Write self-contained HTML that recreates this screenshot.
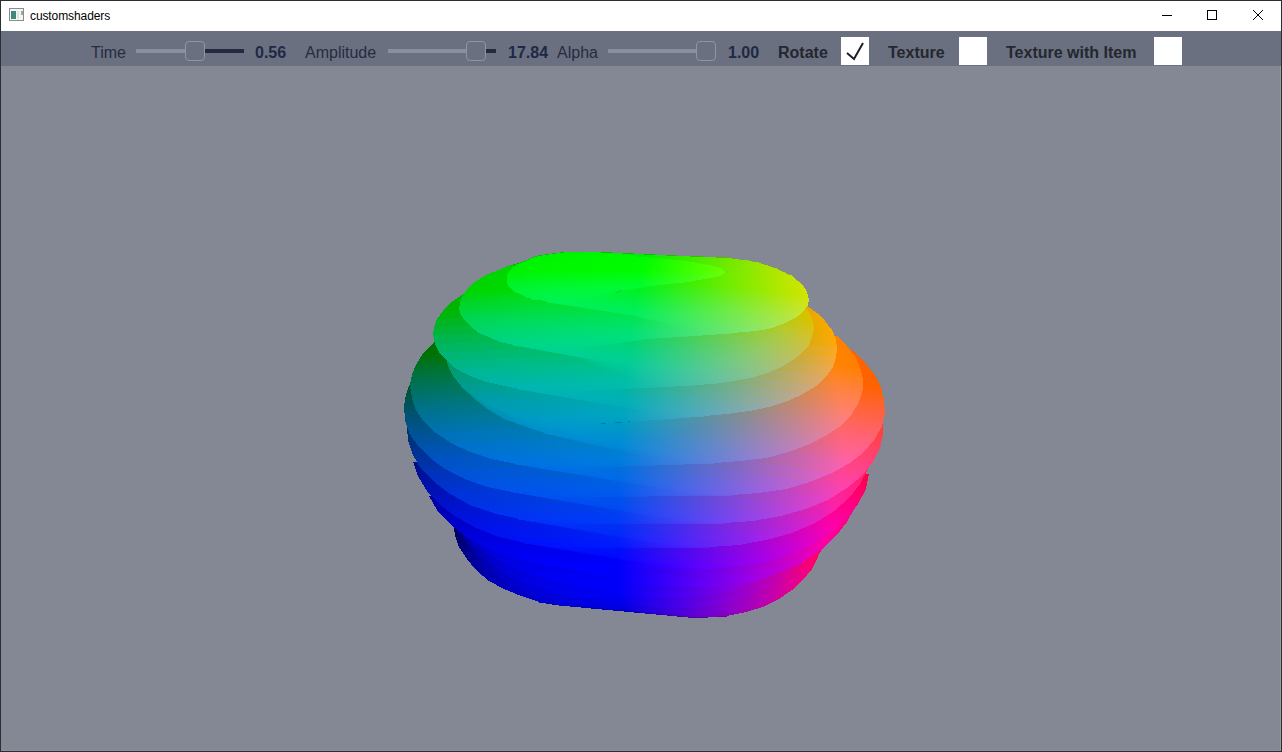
<!DOCTYPE html>
<html><head><meta charset="utf-8">
<style>
html,body{margin:0;padding:0;}
body{width:1282px;height:752px;position:relative;overflow:hidden;background:#2b2e33;font-family:"Liberation Sans",sans-serif;}
.abs{position:absolute;}
#title{left:1px;top:1px;width:1280px;height:30px;background:#fff;}
#content{left:1px;top:31px;width:1280px;height:720px;background:#848895;overflow:hidden;}
#toolbar{left:0;top:0;width:1280px;height:35px;background:#6b7080;}
.lbl{position:absolute;top:0;line-height:1;font-size:16px;color:#262c40;white-space:nowrap;}
.b{font-weight:bold;color:#24272f;}
.v{color:#1f2946;}
.track{position:absolute;height:4px;background:#8a8f9d;}
.fill{position:absolute;height:4px;background:#242a3e;}
.handle{position:absolute;width:18px;height:18px;border:1px solid #8f95a3;border-radius:4px;background:#6b7080;box-sizing:content-box;}
.cb{position:absolute;width:28px;height:28px;background:#fff;}
</style></head>
<body>
<div id="title" class="abs">
  <svg class="abs" style="left:8px;top:7px" width="15" height="13" viewBox="0 0 15 13">
    <rect x="0.5" y="0.5" width="14" height="12" fill="#f4f6f6" stroke="#8c8c8c"/>
    <rect x="2" y="3" width="5" height="8" fill="#3e8a76"/>
    <rect x="2" y="3" width="5" height="2" fill="#4d7d8a"/>
    <rect x="8" y="3" width="2" height="8" fill="#e2e2e2"/>
    <rect x="12" y="3" width="2" height="4" fill="#9aa6a4"/>
  </svg>
  <div class="abs" style="left:29px;top:8px;font-size:12px;letter-spacing:-0.1px;color:#000;white-space:nowrap">customshaders</div>
  <div class="abs" style="left:1161px;top:14px;width:10px;height:1px;background:#000"></div>
  <div class="abs" style="left:1206px;top:9px;width:8px;height:8px;border:1px solid #000"></div>
  <svg class="abs" style="left:1251px;top:8px" width="12" height="12" viewBox="0 0 12 12">
    <path d="M1 1L11 11M11 1L1 11" stroke="#000" stroke-width="1"/>
  </svg>
</div>
<div id="content" class="abs">
  <div id="edgeR" class="abs" style="left:1279px;top:35px;width:1px;height:685px;background:#999ba2"></div>
  <div class="abs" style="left:0;top:719px;width:1280px;height:1px;background:#8d909a"></div>
  <div id="toolbar" class="abs">
    <div class="lbl" style="left:90px;top:14px">Time</div>
    <div class="track" style="left:135px;top:18px;width:50px"></div>
    <div class="fill" style="left:204px;top:18px;width:39px"></div>
    <div class="handle" style="left:184px;top:10px"></div>
    <div class="lbl b v" style="left:254px;top:14px">0.56</div>

    <div class="lbl" style="left:304px;top:14px">Amplitude</div>
    <div class="track" style="left:387px;top:18px;width:80px"></div>
    <div class="fill" style="left:485px;top:18px;width:10px"></div>
    <div class="handle" style="left:465px;top:10px"></div>
    <div class="lbl b v" style="left:507px;top:14px">17.84</div>

    <div class="lbl" style="left:556px;top:14px">Alpha</div>
    <div class="track" style="left:607px;top:18px;width:90px"></div>
    <div class="handle" style="left:695px;top:10px"></div>
    <div class="lbl b v" style="left:727px;top:14px">1.00</div>

    <div class="lbl b" style="left:777px;top:14px">Rotate</div>
    <div class="cb" style="left:840px;top:6px">
      <svg width="28" height="28" viewBox="0 0 28 28" style="position:absolute;left:0;top:0"><path d="M6 16L13 22L22 6" fill="none" stroke="#1b1f2c" stroke-width="2"/></svg>
    </div>
    <div class="lbl b" style="left:887px;top:14px">Texture</div>
    <div class="cb" style="left:958px;top:6px"></div>
    <div class="lbl b" style="left:1005px;top:14px">Texture with Item</div>
    <div class="cb" style="left:1153px;top:6px"></div>
  </div>
</div>
<!-- BLOB -->
<div style="position:absolute;left:370px;top:230px;width:540px;height:420px;isolation:isolate">
<svg width="540" height="420" style="position:absolute;left:0;top:0" shape-rendering="crispEdges"><defs>
<linearGradient id="R" gradientUnits="userSpaceOnUse"><stop offset="0" stop-color="#000"/><stop offset="1" stop-color="#f00"/></linearGradient>
<linearGradient id="G" gradientUnits="userSpaceOnUse"><stop offset="0" stop-color="#000"/><stop offset="1" stop-color="#0f0"/></linearGradient>
<linearGradient id="B" gradientUnits="userSpaceOnUse"><stop offset="0" stop-color="#000"/><stop offset="1" stop-color="#00f"/></linearGradient>
<linearGradient id="0" href="#R" x1="265" y1="332" x2="437" y2="324"/><linearGradient id="1" href="#B" x1="396" y1="278" x2="377" y2="412"/><linearGradient id="2" href="#R" x1="262" y1="342" x2="439" y2="336"/><linearGradient id="3" href="#B" x1="390" y1="273" x2="369" y2="417"/><linearGradient id="4" href="#R" x1="260" y1="349" x2="440" y2="348"/><linearGradient id="5" href="#B" x1="380" y1="271" x2="360" y2="416"/><linearGradient id="6" href="#R" x1="258" y1="359" x2="442" y2="357"/><linearGradient id="7" href="#B" x1="370" y1="259" x2="347" y2="422"/><linearGradient id="8" href="#R" x1="257" y1="359" x2="443" y2="376"/><linearGradient id="9" href="#B" x1="2463" y1="563" x2="-687" y2="272"/><linearGradient id="a" href="#R" x1="256" y1="367" x2="444" y2="385"/><linearGradient id="b" href="#B" x1="2583" y1="583" x2="-526" y2="295"/><linearGradient id="c" href="#R" x1="255" y1="374" x2="444" y2="390"/><linearGradient id="d" href="#B" x1="2698" y1="590" x2="-421" y2="314"/><linearGradient id="e" href="#R" x1="255" y1="378" x2="445" y2="395"/><linearGradient id="f" href="#B" x1="2837" y1="613" x2="-374" y2="321"/><linearGradient id="g" href="#R" x1="254" y1="380" x2="445" y2="398"/><linearGradient id="h" href="#B" x1="2993" y1="630" x2="-381" y2="322"/><linearGradient id="i" href="#R" x1="254" y1="379" x2="443" y2="394"/><linearGradient id="j" href="#B" x1="-2597" y1="152" x2="756" y2="419"/><linearGradient id="k" href="#R" x1="254" y1="377" x2="440" y2="393"/><linearGradient id="l" href="#B" x1="-2365" y1="152" x2="743" y2="419"/><linearGradient id="m" href="#R" x1="254" y1="372" x2="437" y2="388"/><linearGradient id="n" href="#B" x1="-2153" y1="156" x2="778" y2="419"/><linearGradient id="o" href="#B" x1="-1999" y1="174" x2="870" y2="418"/><linearGradient id="p" href="#B" x1="168" y1="227" x2="164" y2="400"/><linearGradient id="q" href="#B" x1="155" y1="240" x2="151" y2="394"/><linearGradient id="r" href="#B" x1="145" y1="243" x2="142" y2="391"/><linearGradient id="s" href="#B" x1="137" y1="247" x2="135" y2="387"/><linearGradient id="t" href="#B" x1="132" y1="251" x2="130" y2="381"/><linearGradient id="u" href="#R" x1="266" y1="328" x2="440" y2="315"/><linearGradient id="v" href="#B" x1="416" y1="265" x2="394" y2="400"/><linearGradient id="w" href="#R" x1="264" y1="341" x2="442" y2="327"/><linearGradient id="x" href="#B" x1="410" y1="257" x2="385" y2="407"/><linearGradient id="y" href="#R" x1="259" y1="344" x2="445" y2="342"/><linearGradient id="z" href="#B" x1="400" y1="256" x2="375" y2="405"/><linearGradient id="10" href="#R" x1="258" y1="356" x2="446" y2="351"/><linearGradient id="11" href="#B" x1="389" y1="241" x2="361" y2="411"/><linearGradient id="12" href="#R" x1="255" y1="357" x2="448" y2="368"/><linearGradient id="13" href="#B" x1="376" y1="232" x2="345" y2="411"/><linearGradient id="14" href="#R" x1="254" y1="371" x2="448" y2="370"/><linearGradient id="15" href="#B" x1="360" y1="219" x2="326" y2="411"/><linearGradient id="16" href="#R" x1="253" y1="370" x2="450" y2="389"/><linearGradient id="17" href="#B" x1="2612" y1="602" x2="-149" y2="330"/><linearGradient id="18" href="#R" x1="252" y1="375" x2="450" y2="395"/><linearGradient id="19" href="#B" x1="2836" y1="636" x2="-115" y2="337"/><linearGradient id="1a" href="#R" x1="252" y1="377" x2="449" y2="398"/><linearGradient id="1b" href="#B" x1="3099" y1="683" x2="-127" y2="337"/><linearGradient id="1c" href="#R" x1="252" y1="374" x2="448" y2="386"/><linearGradient id="1d" href="#B" x1="-2542" y1="202" x2="522" y2="391"/><linearGradient id="1e" href="#R" x1="251" y1="371" x2="444" y2="385"/><linearGradient id="1f" href="#B" x1="-2132" y1="205" x2="500" y2="389"/><linearGradient id="1g" href="#B" x1="185" y1="155" x2="193" y2="395"/><linearGradient id="1h" href="#B" x1="169" y1="191" x2="173" y2="389"/><linearGradient id="1i" href="#B" x1="153" y1="207" x2="157" y2="385"/><linearGradient id="1j" href="#B" x1="140" y1="214" x2="144" y2="383"/><linearGradient id="1k" href="#B" x1="130" y1="225" x2="133" y2="377"/><linearGradient id="1l" href="#B" x1="122" y1="233" x2="126" y2="371"/><linearGradient id="1m" href="#R" x1="259" y1="336" x2="448" y2="332"/><linearGradient id="1n" href="#B" x1="412" y1="236" x2="379" y2="394"/><linearGradient id="1o" href="#R" x1="257" y1="347" x2="450" y2="343"/><linearGradient id="1p" href="#B" x1="402" y1="222" x2="364" y2="397"/><linearGradient id="1q" href="#R" x1="255" y1="354" x2="451" y2="355"/><linearGradient id="1r" href="#B" x1="389" y1="204" x2="347" y2="398"/><linearGradient id="1s" href="#R" x1="252" y1="355" x2="453" y2="375"/><linearGradient id="1t" href="#B" x1="372" y1="188" x2="328" y2="397"/><linearGradient id="1u" href="#R" x1="251" y1="369" x2="454" y2="368"/><linearGradient id="1v" href="#B" x1="353" y1="176" x2="306" y2="394"/><linearGradient id="1w" href="#R" x1="250" y1="367" x2="456" y2="392"/><linearGradient id="1x" href="#B" x1="2870" y1="687" x2="49" y2="342"/><linearGradient id="1y" href="#R" x1="250" y1="370" x2="456" y2="398"/><linearGradient id="1z" href="#B" x1="3402" y1="786" x2="31" y2="342"/><linearGradient id="20" href="#R" x1="250" y1="367" x2="455" y2="370"/><linearGradient id="21" href="#B" x1="-4579" y1="287" x2="502" y2="371"/><linearGradient id="22" href="#R" x1="250" y1="365" x2="453" y2="372"/><linearGradient id="23" href="#B" x1="-3266" y1="244" x2="409" y2="371"/><linearGradient id="24" href="#R" x1="249" y1="362" x2="448" y2="371"/><linearGradient id="25" href="#B" x1="-2485" y1="230" x2="393" y2="369"/><linearGradient id="26" href="#B" x1="174" y1="134" x2="188" y2="376"/><linearGradient id="27" href="#B" x1="156" y1="156" x2="168" y2="374"/><linearGradient id="28" href="#B" x1="142" y1="186" x2="150" y2="369"/><linearGradient id="29" href="#B" x1="128" y1="196" x2="136" y2="367"/><linearGradient id="2a" href="#B" x1="117" y1="204" x2="126" y2="363"/><linearGradient id="2b" href="#R" x1="253" y1="343" x2="456" y2="343"/><linearGradient id="2c" href="#B" x1="394" y1="193" x2="352" y2="379"/><linearGradient id="2d" href="#R" x1="251" y1="348" x2="458" y2="356"/><linearGradient id="2e" href="#B" x1="384" y1="152" x2="331" y2="381"/><linearGradient id="2f" href="#R" x1="250" y1="356" x2="460" y2="362"/><linearGradient id="2g" href="#B" x1="362" y1="138" x2="308" y2="377"/><linearGradient id="2h" href="#R" x1="249" y1="355" x2="460" y2="386"/><linearGradient id="2i" href="#B" x1="3595" y1="844" x2="122" y2="337"/><linearGradient id="2j" href="#R" x1="249" y1="360" x2="460" y2="392"/><linearGradient id="2k" href="#B" x1="4765" y1="1051" x2="116" y2="339"/><linearGradient id="2l" href="#R" x1="249" y1="362" x2="460" y2="397"/><linearGradient id="2m" href="#B" x1="7043" y1="1488" x2="16" y2="323"/><linearGradient id="2n" href="#R" x1="249" y1="354" x2="461" y2="358"/><linearGradient id="2o" href="#B" x1="-7419" y1="191" x2="384" y2="356"/><linearGradient id="2p" href="#R" x1="249" y1="349" x2="456" y2="355"/><linearGradient id="2q" href="#B" x1="-5225" y1="184" x2="414" y2="354"/><linearGradient id="2r" href="#R" x1="248" y1="349" x2="447" y2="379"/><linearGradient id="2s" href="#B" x1="189" y1="130" x2="192" y2="355"/><linearGradient id="2t" href="#B" x1="167" y1="146" x2="171" y2="354"/><linearGradient id="2u" href="#B" x1="148" y1="170" x2="152" y2="351"/><linearGradient id="2v" href="#B" x1="132" y1="179" x2="137" y2="348"/><linearGradient id="2w" href="#R" x1="265" y1="293" x2="453" y2="274"/><linearGradient id="2x" href="#B" x1="442" y1="217" x2="419" y2="352"/><linearGradient id="2y" href="#R" x1="265" y1="311" x2="454" y2="286"/><linearGradient id="2z" href="#B" x1="435" y1="209" x2="410" y2="357"/><linearGradient id="30" href="#R" x1="258" y1="312" x2="458" y2="302"/><linearGradient id="31" href="#B" x1="424" y1="199" x2="397" y2="361"/><linearGradient id="32" href="#R" x1="255" y1="325" x2="460" y2="313"/><linearGradient id="33" href="#B" x1="410" y1="192" x2="381" y2="360"/><linearGradient id="34" href="#R" x1="252" y1="331" x2="462" y2="326"/><linearGradient id="35" href="#B" x1="395" y1="174" x2="362" y2="361"/><linearGradient id="36" href="#R" x1="250" y1="332" x2="464" y2="344"/><linearGradient id="37" href="#B" x1="377" y1="150" x2="340" y2="360"/><linearGradient id="38" href="#R" x1="249" y1="333" x2="464" y2="365"/><linearGradient id="39" href="#B" x1="7318" y1="1386" x2="-131" y2="277"/><linearGradient id="3a" href="#R" x1="248" y1="340" x2="465" y2="374"/><linearGradient id="3b" href="#B" x1="9619" y1="1801" x2="36" y2="307"/><linearGradient id="3c" href="#R" x1="248" y1="345" x2="465" y2="380"/><linearGradient id="3d" href="#B" x1="14198" y1="2590" x2="127" y2="325"/><linearGradient id="3e" href="#R" x1="248" y1="347" x2="465" y2="383"/><linearGradient id="3f" href="#B" x1="27595" y1="4929" x2="-32" y2="300"/><linearGradient id="3g" href="#R" x1="248" y1="338" x2="468" y2="340"/><linearGradient id="3h" href="#G" x1="328" y1="339" x2="2252" y2="358"/><linearGradient id="3i" href="#R" x1="248" y1="336" x2="464" y2="339"/><linearGradient id="3j" href="#G" x1="298" y1="336" x2="2190" y2="366"/><linearGradient id="3k" href="#B" x1="-29194" y1="-131" x2="394" y2="338"/><linearGradient id="3l" href="#R" x1="248" y1="331" x2="461" y2="334"/><linearGradient id="3m" href="#G" x1="269" y1="331" x2="2118" y2="362"/><linearGradient id="3n" href="#B" x1="-14788" y1="85" x2="552" y2="336"/><linearGradient id="3o" href="#R" x1="248" y1="324" x2="456" y2="327"/><linearGradient id="3p" href="#G" x1="243" y1="323" x2="2045" y2="354"/><linearGradient id="3q" href="#B" x1="-9728" y1="157" x2="773" y2="332"/><linearGradient id="3r" href="#G" x1="173" y1="290" x2="535" y2="-401"/><linearGradient id="3s" href="#B" x1="160" y1="141" x2="161" y2="333"/><linearGradient id="3t" href="#G" x1="161" y1="275" x2="745" y2="-512"/><linearGradient id="3u" href="#B" x1="141" y1="151" x2="142" y2="331"/><linearGradient id="3v" href="#G" x1="152" y1="260" x2="953" y2="-542"/><linearGradient id="3w" href="#B" x1="125" y1="160" x2="126" y2="329"/><linearGradient id="3x" href="#G" x1="148" y1="248" x2="1201" y2="-483"/><linearGradient id="3y" href="#B" x1="112" y1="174" x2="114" y2="323"/><linearGradient id="3z" href="#R" x1="278" y1="280" x2="453" y2="240"/><linearGradient id="40" href="#G" x1="495" y1="259" x2="-1109" y2="-236"/><linearGradient id="41" href="#B" x1="449" y1="204" x2="430" y2="324"/><linearGradient id="42" href="#R" x1="266" y1="276" x2="457" y2="255"/><linearGradient id="43" href="#G" x1="480" y1="286" x2="-871" y2="-572"/><linearGradient id="44" href="#B" x1="445" y1="197" x2="424" y2="334"/><linearGradient id="45" href="#R" x1="264" y1="293" x2="459" y2="268"/><linearGradient id="46" href="#G" x1="463" y1="305" x2="-693" y2="-689"/><linearGradient id="47" href="#B" x1="438" y1="190" x2="414" y2="338"/><linearGradient id="48" href="#R" x1="259" y1="299" x2="462" y2="282"/><linearGradient id="49" href="#G" x1="438" y1="321" x2="-396" y2="-739"/><linearGradient id="4a" href="#B" x1="426" y1="184" x2="402" y2="339"/><linearGradient id="4b" href="#R" x1="254" y1="302" x2="465" y2="296"/><linearGradient id="4c" href="#G" x1="411" y1="332" x2="-163" y2="-689"/><linearGradient id="4d" href="#B" x1="412" y1="173" x2="385" y2="340"/><linearGradient id="4e" href="#R" x1="252" y1="314" x2="467" y2="305"/><linearGradient id="4f" href="#G" x1="384" y1="340" x2="-29" y2="-610"/><linearGradient id="4g" href="#B" x1="394" y1="157" x2="365" y2="340"/><linearGradient id="4h" href="#R" x1="249" y1="312" x2="470" y2="326"/><linearGradient id="4i" href="#G" x1="353" y1="344" x2="127" y2="-451"/><linearGradient id="4j" href="#B" x1="374" y1="140" x2="342" y2="339"/><linearGradient id="4k" href="#R" x1="248" y1="313" x2="470" y2="347"/><linearGradient id="4l" href="#G" x1="384" y1="334" x2="-1637" y2="29"/><linearGradient id="4m" href="#B" x1="19109" y1="3163" x2="-799" y2="155"/><linearGradient id="4n" href="#R" x1="248" y1="321" x2="470" y2="355"/><linearGradient id="4o" href="#G" x1="357" y1="338" x2="-1683" y2="23"/><linearGradient id="4p" href="#B" x1="37332" y1="6037" x2="-557" y2="197"/><linearGradient id="4q" href="#R" x1="247" y1="326" x2="469" y2="361"/><linearGradient id="4r" href="#G" x1="327" y1="339" x2="-1710" y2="14"/><linearGradient id="4s" href="#B" x1="-736770" y1="-117099" x2="4220" y2="959"/><linearGradient id="4t" href="#R" x1="247" y1="328" x2="467" y2="365"/><linearGradient id="4u" href="#G" x1="298" y1="336" x2="-1720" y2="2"/><linearGradient id="4v" href="#B" x1="-32060" y1="-5035" x2="405" y2="354"/><linearGradient id="4w" href="#R" x1="248" y1="317" x2="472" y2="316"/><linearGradient id="4x" href="#G" x1="60" y1="318" x2="2108" y2="306"/><linearGradient id="4y" href="#B" x1="16042" y1="226" x2="108" y2="318"/><linearGradient id="4z" href="#R" x1="248" y1="314" x2="470" y2="314"/><linearGradient id="50" href="#G" x1="33" y1="315" x2="2060" y2="313"/><linearGradient id="51" href="#B" x1="29574" y1="294" x2="-53" y2="315"/><linearGradient id="52" href="#R" x1="248" y1="310" x2="467" y2="310"/><linearGradient id="53" href="#G" x1="9" y1="309" x2="2003" y2="314"/><linearGradient id="54" href="#B" x1="169210" y1="709" x2="-4405" y2="299"/><linearGradient id="55" href="#R" x1="248" y1="302" x2="462" y2="303"/><linearGradient id="56" href="#G" x1="-12" y1="301" x2="1930" y2="308"/><linearGradient id="57" href="#B" x1="-49718" y1="134" x2="3372" y2="312"/><linearGradient id="58" href="#G" x1="117" y1="366" x2="507" y2="-396"/><linearGradient id="59" href="#B" x1="154" y1="119" x2="155" y2="313"/><linearGradient id="5a" href="#G" x1="77" y1="363" x2="671" y2="-488"/><linearGradient id="5b" href="#B" x1="135" y1="136" x2="136" y2="310"/><linearGradient id="5c" href="#G" x1="37" y1="353" x2="881" y2="-526"/><linearGradient id="5d" href="#B" x1="119" y1="148" x2="120" y2="307"/><linearGradient id="5e" href="#G" x1="-5" y1="331" x2="1138" y2="-469"/><linearGradient id="5f" href="#B" x1="106" y1="151" x2="108" y2="306"/><linearGradient id="5g" href="#G" x1="-36" y1="298" x2="1337" y2="-321"/><linearGradient id="5h" href="#B" x1="97" y1="163" x2="100" y2="298"/><linearGradient id="5i" href="#R" x1="266" y1="257" x2="460" y2="234"/><linearGradient id="5j" href="#G" x1="668" y1="389" x2="-768" y2="-548"/><linearGradient id="5k" href="#B" x1="444" y1="178" x2="422" y2="313"/><linearGradient id="5l" href="#R" x1="265" y1="273" x2="463" y2="246"/><linearGradient id="5m" href="#G" x1="620" y1="427" x2="-588" y2="-654"/><linearGradient id="5n" href="#B" x1="436" y1="172" x2="413" y2="317"/><linearGradient id="5o" href="#R" x1="258" y1="275" x2="466" y2="260"/><linearGradient id="5p" href="#G" x1="545" y1="450" x2="-293" y2="-689"/><linearGradient id="5q" href="#B" x1="424" y1="165" x2="400" y2="318"/><linearGradient id="5r" href="#R" x1="255" y1="287" x2="469" y2="270"/><linearGradient id="5s" href="#G" x1="495" y1="458" x2="-148" y2="-657"/><linearGradient id="5t" href="#B" x1="409" y1="152" x2="383" y2="320"/><linearGradient id="5u" href="#R" x1="250" y1="285" x2="473" y2="288"/><linearGradient id="5v" href="#G" x1="432" y1="449" x2="37" y2="-548"/><linearGradient id="5w" href="#B" x1="392" y1="138" x2="363" y2="320"/><linearGradient id="5x" href="#R" x1="249" y1="294" x2="473" y2="296"/><linearGradient id="5y" href="#G" x1="380" y1="433" x2="152" y2="-413"/><linearGradient id="5z" href="#B" x1="370" y1="127" x2="339" y2="317"/><linearGradient id="60" href="#R" x1="248" y1="290" x2="474" y2="326"/><linearGradient id="61" href="#G" x1="665" y1="356" x2="-1481" y2="16"/><linearGradient id="62" href="#B" x1="-70667" y1="-10970" x2="5513" y2="1126"/><linearGradient id="63" href="#R" x1="248" y1="298" x2="475" y2="335"/><linearGradient id="64" href="#G" x1="640" y1="361" x2="-1525" y2="12"/><linearGradient id="65" href="#B" x1="-26262" y1="-3983" x2="1247" y2="460"/><linearGradient id="66" href="#R" x1="247" y1="303" x2="473" y2="341"/><linearGradient id="67" href="#G" x1="608" y1="364" x2="-1544" y2="4"/><linearGradient id="68" href="#B" x1="-15282" y1="-2292" x2="544" y2="353"/><linearGradient id="69" href="#R" x1="247" y1="306" x2="472" y2="345"/><linearGradient id="6a" href="#G" x1="576" y1="363" x2="-1556" y2="-7"/><linearGradient id="6b" href="#B" x1="-10643" y1="-1582" x2="429" y2="337"/><linearGradient id="6c" href="#R" x1="248" y1="293" x2="477" y2="292"/><linearGradient id="6d" href="#G" x1="-281" y1="296" x2="2126" y2="283"/><linearGradient id="6e" href="#B" x1="9297" y1="246" x2="-22" y2="294"/><linearGradient id="6f" href="#R" x1="248" y1="290" x2="475" y2="290"/><linearGradient id="6g" href="#G" x1="-305" y1="291" x2="2081" y2="288"/><linearGradient id="6h" href="#B" x1="11420" y1="274" x2="-119" y2="291"/><linearGradient id="6i" href="#R" x1="248" y1="286" x2="472" y2="286"/><linearGradient id="6j" href="#G" x1="-326" y1="285" x2="2028" y2="287"/><linearGradient id="6k" href="#B" x1="14619" y1="297" x2="-508" y2="285"/><linearGradient id="6l" href="#R" x1="249" y1="278" x2="468" y2="278"/><linearGradient id="6m" href="#G" x1="-340" y1="278" x2="1963" y2="278"/><linearGradient id="6n" href="#B" x1="19439" y1="274" x2="-1498" y2="279"/><linearGradient id="6o" href="#G" x1="-349" y1="270" x2="1892" y2="265"/><linearGradient id="6p" href="#B" x1="27009" y1="211" x2="-3813" y2="277"/><linearGradient id="6q" href="#G" x1="-12" y1="485" x2="659" y2="-521"/><linearGradient id="6r" href="#B" x1="140" y1="120" x2="140" y2="290"/><linearGradient id="6s" href="#G" x1="-90" y1="483" x2="852" y2="-568"/><linearGradient id="6t" href="#B" x1="124" y1="131" x2="124" y2="286"/><linearGradient id="6u" href="#G" x1="-196" y1="451" x2="1159" y2="-518"/><linearGradient id="6v" href="#B" x1="111" y1="137" x2="112" y2="284"/><linearGradient id="6w" href="#G" x1="-256" y1="397" x2="1326" y2="-395"/><linearGradient id="6x" href="#B" x1="102" y1="145" x2="103" y2="278"/><linearGradient id="6y" href="#G" x1="-316" y1="292" x2="1506" y2="-99"/><linearGradient id="6z" href="#B" x1="97" y1="150" x2="99" y2="273"/><linearGradient id="70" href="#R" x1="276" y1="221" x2="458" y2="185"/><linearGradient id="71" href="#G" x1="1066" y1="278" x2="-1072" y2="-33"/><linearGradient id="72" href="#B" x1="449" y1="167" x2="434" y2="277"/><linearGradient id="73" href="#R" x1="275" y1="237" x2="461" y2="197"/><linearGradient id="74" href="#G" x1="1035" y1="419" x2="-1007" y2="-332"/><linearGradient id="75" href="#B" x1="447" y1="165" x2="431" y2="283"/><linearGradient id="76" href="#R" x1="268" y1="242" x2="464" y2="210"/><linearGradient id="77" href="#G" x1="936" y1="547" x2="-789" y2="-598"/><linearGradient id="78" href="#B" x1="443" y1="160" x2="425" y2="289"/><linearGradient id="79" href="#R" x1="264" y1="251" x2="467" y2="222"/><linearGradient id="7a" href="#G" x1="838" y1="610" x2="-587" y2="-706"/><linearGradient id="7b" href="#B" x1="435" y1="152" x2="415" y2="296"/><linearGradient id="7c" href="#R" x1="259" y1="256" x2="470" y2="235"/><linearGradient id="7d" href="#G" x1="685" y1="634" x2="-262" y2="-721"/><linearGradient id="7e" href="#B" x1="423" y1="150" x2="403" y2="294"/><linearGradient id="7f" href="#R" x1="255" y1="260" x2="473" y2="248"/><linearGradient id="7g" href="#G" x1="614" y1="637" x2="-150" y2="-688"/><linearGradient id="7h" href="#B" x1="409" y1="130" x2="385" y2="300"/><linearGradient id="7i" href="#R" x1="251" y1="245" x2="476" y2="278"/><linearGradient id="7j" href="#G" x1="1097" y1="370" x2="-1408" y2="-2"/><linearGradient id="7k" href="#B" x1="-20612" y1="-2855" x2="5829" y2="1073"/><linearGradient id="7l" href="#R" x1="250" y1="256" x2="478" y2="290"/><linearGradient id="7m" href="#G" x1="1084" y1="381" x2="-1461" y2="-1"/><linearGradient id="7n" href="#B" x1="-15695" y1="-2137" x2="3045" y2="675"/><linearGradient id="7o" href="#R" x1="249" y1="265" x2="479" y2="300"/><linearGradient id="7p" href="#G" x1="1064" y1="390" x2="-1504" y2="-5"/><linearGradient id="7q" href="#B" x1="-12792" y1="-1741" x2="1716" y2="491"/><linearGradient id="7r" href="#R" x1="248" y1="272" x2="479" y2="309"/><linearGradient id="7s" href="#G" x1="1037" y1="398" x2="-1537" y2="-12"/><linearGradient id="7t" href="#B" x1="-10321" y1="-1409" x2="1016" y2="394"/><linearGradient id="7u" href="#R" x1="248" y1="277" x2="478" y2="315"/><linearGradient id="7v" href="#G" x1="1004" y1="401" x2="-1556" y2="-17"/><linearGradient id="7w" href="#B" x1="-8505" y1="-1152" x2="700" y2="351"/><linearGradient id="7x" href="#R" x1="248" y1="279" x2="476" y2="318"/><linearGradient id="7y" href="#G" x1="966" y1="401" x2="-1559" y2="-26"/><linearGradient id="7z" href="#B" x1="-7146" y1="-970" x2="602" y2="339"/><linearGradient id="80" href="#R" x1="248" y1="266" x2="482" y2="263"/><linearGradient id="81" href="#G" x1="-698" y1="276" x2="2037" y2="246"/><linearGradient id="82" href="#B" x1="6671" y1="196" x2="-207" y2="271"/><linearGradient id="83" href="#R" x1="249" y1="263" x2="480" y2="261"/><linearGradient id="84" href="#G" x1="-718" y1="271" x2="1995" y2="249"/><linearGradient id="85" href="#B" x1="7406" y1="206" x2="-291" y2="267"/><linearGradient id="86" href="#R" x1="249" y1="258" x2="477" y2="257"/><linearGradient id="87" href="#G" x1="-736" y1="265" x2="1951" y2="246"/><linearGradient id="88" href="#B" x1="8336" y1="201" x2="-540" y2="264"/><linearGradient id="89" href="#R" x1="249" y1="252" x2="472" y2="251"/><linearGradient id="8a" href="#G" x1="-741" y1="257" x2="1888" y2="243"/><linearGradient id="8b" href="#B" x1="9120" y1="207" x2="-989" y2="258"/><linearGradient id="8c" href="#R" x1="250" y1="243" x2="469" y2="242"/><linearGradient id="8d" href="#G" x1="-745" y1="247" x2="1832" y2="236"/><linearGradient id="8e" href="#B" x1="10086" y1="202" x2="-1768" y2="251"/><linearGradient id="8f" href="#G" x1="-739" y1="237" x2="1768" y2="225"/><linearGradient id="8g" href="#B" x1="10680" y1="182" x2="-2897" y2="247"/><linearGradient id="8h" href="#G" x1="-253" y1="648" x2="827" y2="-566"/><linearGradient id="8i" href="#B" x1="128" y1="112" x2="127" y2="267"/><linearGradient id="8j" href="#G" x1="-378" y1="620" x2="1024" y2="-550"/><linearGradient id="8k" href="#B" x1="115" y1="124" x2="115" y2="261"/><linearGradient id="8l" href="#G" x1="-547" y1="514" x2="1309" y2="-392"/><linearGradient id="8m" href="#B" x1="106" y1="126" x2="107" y2="259"/><linearGradient id="8n" href="#G" x1="-642" y1="343" x2="1472" y2="-115"/><linearGradient id="8o" href="#B" x1="102" y1="131" x2="103" y2="254"/><linearGradient id="8p" href="#G" x1="-653" y1="169" x2="1487" y2="168"/><linearGradient id="8q" href="#B" x1="100" y1="138" x2="101" y2="241"/><linearGradient id="8r" href="#G" x1="-578" y1="-27" x2="1355" y2="494"/><linearGradient id="8s" href="#B" x1="102" y1="137" x2="103" y2="245"/><linearGradient id="8t" href="#R" x1="279" y1="188" x2="458" y2="152"/><linearGradient id="8u" href="#G" x1="1376" y1="77" x2="-883" y2="265"/><linearGradient id="8v" href="#B" x1="445" y1="149" x2="432" y2="251"/><linearGradient id="8w" href="#R" x1="280" y1="206" x2="461" y2="163"/><linearGradient id="8x" href="#G" x1="1425" y1="282" x2="-954" y2="3"/><linearGradient id="8y" href="#B" x1="446" y1="148" x2="433" y2="255"/><linearGradient id="8z" href="#R" x1="274" y1="215" x2="464" y2="175"/><linearGradient id="90" href="#G" x1="1360" y1="545" x2="-869" y2="-340"/><linearGradient id="91" href="#B" x1="445" y1="146" x2="430" y2="261"/><linearGradient id="92" href="#R" x1="270" y1="222" x2="467" y2="186"/><linearGradient id="93" href="#G" x1="1209" y1="717" x2="-671" y2="-555"/><linearGradient id="94" href="#B" x1="440" y1="142" x2="424" y2="267"/><linearGradient id="95" href="#R" x1="264" y1="224" x2="471" y2="199"/><linearGradient id="96" href="#G" x1="1012" y1="810" x2="-415" y2="-659"/><linearGradient id="97" href="#B" x1="432" y1="136" x2="414" y2="272"/><linearGradient id="98" href="#R" x1="259" y1="230" x2="474" y2="209"/><linearGradient id="99" href="#G" x1="810" y1="825" x2="-162" y2="-652"/><linearGradient id="9a" href="#B" x1="420" y1="133" x2="402" y2="271"/><linearGradient id="9b" href="#R" x1="254" y1="206" x2="478" y2="238"/><linearGradient id="9c" href="#G" x1="1506" y1="385" x2="-1196" y2="0"/><linearGradient id="9d" href="#B" x1="-8954" y1="-1104" x2="4729" y2="843"/><linearGradient id="9e" href="#R" x1="253" y1="218" x2="480" y2="251"/><linearGradient id="9f" href="#G" x1="1502" y1="397" x2="-1240" y2="5"/><linearGradient id="9g" href="#B" x1="-8558" y1="-1043" x2="3263" y2="649"/><linearGradient id="9h" href="#R" x1="251" y1="228" x2="482" y2="263"/><linearGradient id="9i" href="#G" x1="1493" y1="416" x2="-1286" y2="-5"/><linearGradient id="9j" href="#B" x1="-7817" y1="-996" x2="2203" y2="524"/><linearGradient id="9k" href="#R" x1="249" y1="236" x2="483" y2="273"/><linearGradient id="9l" href="#G" x1="1478" y1="430" x2="-1328" y2="-12"/><linearGradient id="9m" href="#B" x1="-7063" y1="-917" x2="1521" y2="437"/><linearGradient id="9n" href="#R" x1="249" y1="243" x2="483" y2="281"/><linearGradient id="9o" href="#G" x1="1449" y1="435" x2="-1352" y2="-12"/><linearGradient id="9p" href="#B" x1="-6276" y1="-799" x2="1098" y2="379"/><linearGradient id="9q" href="#R" x1="249" y1="248" x2="482" y2="286"/><linearGradient id="9r" href="#G" x1="1413" y1="439" x2="-1368" y2="-17"/><linearGradient id="9s" href="#B" x1="-5612" y1="-712" x2="872" y2="350"/><linearGradient id="9t" href="#R" x1="249" y1="250" x2="480" y2="289"/><linearGradient id="9u" href="#G" x1="1370" y1="436" x2="-1374" y2="-18"/><linearGradient id="9v" href="#B" x1="-5018" y1="-622" x2="781" y2="339"/><linearGradient id="9w" href="#R" x1="277" y1="94" x2="448" y2="115"/><linearGradient id="9x" href="#G" x1="1270" y1="214" x2="-795" y2="-35"/><linearGradient id="9y" href="#R" x1="275" y1="102" x2="450" y2="124"/><linearGradient id="9z" href="#G" x1="1301" y1="230" x2="-815" y2="-35"/><linearGradient id="a0" href="#R" x1="273" y1="110" x2="453" y2="134"/><linearGradient id="a1" href="#G" x1="1332" y1="247" x2="-840" y2="-33"/><linearGradient id="a2" href="#R" x1="284" y1="179" x2="455" y2="140"/><linearGradient id="a3" href="#G" x1="1225" y1="-133" x2="-675" y2="535"/><linearGradient id="a4" href="#R" x1="249" y1="235" x2="484" y2="228"/><linearGradient id="a5" href="#G" x1="-967" y1="274" x2="1633" y2="191"/><linearGradient id="a6" href="#B" x1="4358" y1="103" x2="-313" y2="253"/><linearGradient id="a7" href="#R" x1="250" y1="232" x2="482" y2="226"/><linearGradient id="a8" href="#G" x1="-988" y1="269" x2="1600" y2="192"/><linearGradient id="a9" href="#B" x1="4699" y1="100" x2="-391" y2="252"/><linearGradient id="aa" href="#R" x1="250" y1="228" x2="479" y2="221"/><linearGradient id="ab" href="#G" x1="-1000" y1="263" x2="1559" y2="191"/><linearGradient id="ac" href="#B" x1="5035" y1="93" x2="-563" y2="251"/><linearGradient id="ad" href="#R" x1="250" y1="221" x2="476" y2="215"/><linearGradient id="ae" href="#G" x1="-1007" y1="255" x2="1517" y2="187"/><linearGradient id="af" href="#B" x1="5412" y1="84" x2="-867" y2="251"/><linearGradient id="ag" href="#G" x1="-1006" y1="245" x2="1469" y2="181"/><linearGradient id="ah" href="#B" x1="5678" y1="71" x2="-1316" y2="254"/><linearGradient id="ai" href="#G" x1="-996" y1="237" x2="1420" y2="170"/><linearGradient id="aj" href="#B" x1="5791" y1="51" x2="-1933" y2="262"/><linearGradient id="ak" href="#G" x1="-308" y1="751" x2="616" y2="-429"/><linearGradient id="al" href="#B" x1="126" y1="103" x2="128" y2="243"/><linearGradient id="am" href="#G" x1="-560" y1="719" x2="874" y2="-417"/><linearGradient id="an" href="#B" x1="115" y1="103" x2="116" y2="243"/><linearGradient id="ao" href="#G" x1="-741" y1="597" x2="1061" y2="-305"/><linearGradient id="ap" href="#B" x1="107" y1="110" x2="109" y2="236"/><linearGradient id="aq" href="#G" x1="-838" y1="441" x2="1160" y2="-155"/><linearGradient id="ar" href="#B" x1="103" y1="117" x2="104" y2="229"/><linearGradient id="as" href="#G" x1="-887" y1="149" x2="1211" y2="148"/><linearGradient id="at" href="#B" x1="101" y1="117" x2="103" y2="227"/><linearGradient id="au" href="#G" x1="-780" y1="-103" x2="1095" y2="407"/><linearGradient id="av" href="#B" x1="103" y1="120" x2="105" y2="217"/><linearGradient id="aw" href="#G" x1="-625" y1="-240" x2="929" y2="536"/><linearGradient id="ax" href="#B" x1="107" y1="121" x2="109" y2="215"/><linearGradient id="ay" href="#G" x1="-398" y1="-319" x2="689" y2="604"/><linearGradient id="az" href="#B" x1="114" y1="120" x2="117" y2="205"/><linearGradient id="b0" href="#R" x1="287" y1="176" x2="461" y2="133"/><linearGradient id="b1" href="#G" x1="1229" y1="32" x2="-249" y2="229"/><linearGradient id="b2" href="#B" x1="450" y1="130" x2="433" y2="229"/><linearGradient id="b3" href="#R" x1="283" y1="186" x2="464" y2="143"/><linearGradient id="b4" href="#G" x1="1293" y1="265" x2="-307" y2="42"/><linearGradient id="b5" href="#B" x1="451" y1="130" x2="435" y2="231"/><linearGradient id="b6" href="#R" x1="276" y1="191" x2="467" y2="154"/><linearGradient id="b7" href="#G" x1="1223" y1="504" x2="-250" y2="-152"/><linearGradient id="b8" href="#B" x1="450" y1="128" x2="433" y2="238"/><linearGradient id="b9" href="#R" x1="272" y1="199" x2="470" y2="164"/><linearGradient id="ba" href="#G" x1="1114" y1="637" x2="-165" y2="-249"/><linearGradient id="bb" href="#B" x1="447" y1="122" x2="426" y2="248"/><linearGradient id="bc" href="#R" x1="270" y1="210" x2="472" y2="172"/><linearGradient id="bd" href="#G" x1="949" y1="723" x2="-35" y2="-305"/><linearGradient id="be" href="#B" x1="440" y1="119" x2="418" y2="249"/><linearGradient id="bf" href="#R" x1="259" y1="199" x2="477" y2="187"/><linearGradient id="bg" href="#G" x1="768" y1="735" x2="102" y2="-297"/><linearGradient id="bh" href="#B" x1="429" y1="109" x2="406" y2="255"/><linearGradient id="bi" href="#R" x1="260" y1="215" x2="478" y2="191"/><linearGradient id="bj" href="#G" x1="650" y1="714" x2="176" y2="-260"/><linearGradient id="bk" href="#B" x1="415" y1="104" x2="391" y2="254"/><linearGradient id="bl" href="#R" x1="254" y1="209" x2="482" y2="207"/><linearGradient id="bm" href="#G" x1="548" y1="676" x2="231" y2="-211"/><linearGradient id="bn" href="#B" x1="400" y1="87" x2="373" y2="258"/><linearGradient id="bo" href="#R" x1="251" y1="211" x2="485" y2="219"/><linearGradient id="bp" href="#G" x1="453" y1="616" x2="274" y2="-145"/><linearGradient id="bq" href="#B" x1="380" y1="75" x2="351" y2="258"/><linearGradient id="br" href="#R" x1="251" y1="201" x2="485" y2="249"/><linearGradient id="bs" href="#G" x1="1324" y1="421" x2="-551" y2="37"/><linearGradient id="bt" href="#B" x1="-3094" y1="-483" x2="1181" y2="392"/><linearGradient id="bu" href="#R" x1="250" y1="209" x2="485" y2="257"/><linearGradient id="bv" href="#G" x1="1299" y1="425" x2="-577" y2="38"/><linearGradient id="bw" href="#B" x1="-2754" y1="-410" x2="933" y2="350"/><linearGradient id="bx" href="#R" x1="250" y1="214" x2="483" y2="265"/><linearGradient id="by" href="#G" x1="1259" y1="433" x2="-591" y2="32"/><linearGradient id="bz" href="#B" x1="-2389" y1="-357" x2="772" y2="328"/><linearGradient id="c0" href="#R" x1="250" y1="218" x2="481" y2="270"/><linearGradient id="c1" href="#G" x1="1216" y1="436" x2="-602" y2="26"/><linearGradient id="c2" href="#B" x1="-2091" y1="-311" x2="687" y2="317"/><linearGradient id="c3" href="#R" x1="250" y1="220" x2="478" y2="273"/><linearGradient id="c4" href="#G" x1="1164" y1="431" x2="-603" y2="23"/><linearGradient id="c5" href="#B" x1="-1838" y1="-262" x2="653" y2="313"/><linearGradient id="c6" href="#R" x1="291" y1="141" x2="452" y2="101"/><linearGradient id="c7" href="#G" x1="793" y1="-217" x2="111" y2="393"/><linearGradient id="c8" href="#R" x1="295" y1="158" x2="454" y2="111"/><linearGradient id="c9" href="#G" x1="904" y1="-204" x2="26" y2="400"/><linearGradient id="ca" href="#R" x1="290" y1="165" x2="458" y2="122"/><linearGradient id="cb" href="#G" x1="1090" y1="-122" x2="-131" y2="346"/><linearGradient id="cc" href="#R" x1="259" y1="171" x2="476" y2="178"/><linearGradient id="cd" href="#G" x1="507" y1="423" x2="244" y2="-5"/><linearGradient id="ce" href="#B" x1="386" y1="85" x2="327" y2="251"/><linearGradient id="cf" href="#R" x1="255" y1="178" x2="481" y2="190"/><linearGradient id="cg" href="#G" x1="439" y1="433" x2="264" y2="2"/><linearGradient id="ch" href="#B" x1="376" y1="74" x2="313" y2="252"/><linearGradient id="ci" href="#R" x1="254" y1="188" x2="483" y2="194"/><linearGradient id="cj" href="#G" x1="403" y1="438" x2="257" y2="11"/><linearGradient id="ck" href="#B" x1="362" y1="49" x2="296" y2="257"/><linearGradient id="cl" href="#R" x1="252" y1="191" x2="486" y2="215"/><linearGradient id="cm" href="#G" x1="345" y1="422" x2="261" y2="33"/><linearGradient id="cn" href="#B" x1="344" y1="29" x2="278" y2="258"/><linearGradient id="co" href="#R" x1="252" y1="197" x2="485" y2="220"/><linearGradient id="cp" href="#G" x1="298" y1="406" x2="254" y2="52"/><linearGradient id="cq" href="#B" x1="322" y1="7" x2="258" y2="258"/><linearGradient id="cr" href="#R" x1="251" y1="202" x2="487" y2="227"/><linearGradient id="cs" href="#G" x1="260" y1="398" x2="239" y2="61"/><linearGradient id="ct" href="#B" x1="296" y1="-39" x2="236" y2="264"/><linearGradient id="cu" href="#G" x1="216" y1="378" x2="228" y2="76"/><linearGradient id="cv" href="#B" x1="263" y1="-86" x2="213" y2="270"/><linearGradient id="cw" href="#G" x1="182" y1="354" x2="210" y2="90"/><linearGradient id="cx" href="#B" x1="189" y1="-164" x2="201" y2="286"/><linearGradient id="cy" href="#G" x1="152" y1="328" x2="192" y2="103"/><linearGradient id="cz" href="#B" x1="-22" y1="-250" x2="226" y2="312"/><linearGradient id="d0" href="#G" x1="124" y1="285" x2="175" y2="125"/><linearGradient id="d1" href="#B" x1="-315" y1="77" x2="296" y2="226"/><linearGradient id="d2" href="#G" x1="103" y1="262" x2="157" y2="129"/><linearGradient id="d3" href="#B" x1="-51" y1="272" x2="204" y2="152"/><linearGradient id="d4" href="#G" x1="90" y1="224" x2="138" y2="143"/><linearGradient id="d5" href="#B" x1="64" y1="220" x2="144" y2="156"/><linearGradient id="d6" href="#G" x1="376" y1="403" x2="-90" y2="-1"/><linearGradient id="d7" href="#B" x1="-83" y1="5" x2="225" y2="272"/><linearGradient id="d8" href="#R" x1="252" y1="191" x2="489" y2="175"/><linearGradient id="d9" href="#G" x1="-1189" y1="287" x2="1107" y2="133"/><linearGradient id="da" href="#B" x1="2357" y1="49" x2="-360" y2="232"/><linearGradient id="db" href="#R" x1="252" y1="187" x2="488" y2="172"/><linearGradient id="dc" href="#G" x1="-1219" y1="283" x2="1088" y2="133"/><linearGradient id="dd" href="#B" x1="2488" y1="42" x2="-430" y2="232"/><linearGradient id="de" href="#R" x1="253" y1="183" x2="486" y2="169"/><linearGradient id="df" href="#G" x1="-1236" y1="276" x2="1062" y2="133"/><linearGradient id="dg" href="#B" x1="2609" y1="37" x2="-549" y2="233"/><linearGradient id="dh" href="#R" x1="253" y1="177" x2="483" y2="163"/><linearGradient id="di" href="#G" x1="-1244" y1="267" x2="1033" y2="130"/><linearGradient id="dj" href="#B" x1="2718" y1="29" x2="-732" y2="236"/><linearGradient id="dk" href="#G" x1="-1238" y1="253" x2="1000" y2="127"/><linearGradient id="dl" href="#B" x1="2766" y1="28" x2="-973" y2="238"/><linearGradient id="dm" href="#G" x1="-174" y1="801" x2="360" y2="-201"/><linearGradient id="dn" href="#B" x1="163" y1="71" x2="165" y2="218"/><linearGradient id="do" href="#G" x1="-292" y1="830" x2="406" y2="-231"/><linearGradient id="dp" href="#B" x1="149" y1="81" x2="152" y2="213"/><linearGradient id="dq" href="#G" x1="-593" y1="838" x2="563" y2="-250"/><linearGradient id="dr" href="#B" x1="138" y1="83" x2="141" y2="211"/><linearGradient id="ds" href="#G" x1="-845" y1="725" x2="696" y2="-200"/><linearGradient id="dt" href="#B" x1="131" y1="87" x2="133" y2="207"/><linearGradient id="du" href="#G" x1="-1014" y1="529" x2="786" y2="-103"/><linearGradient id="dv" href="#B" x1="126" y1="91" x2="129" y2="202"/><linearGradient id="dw" href="#R" x1="269" y1="90" x2="467" y2="114"/><linearGradient id="dx" href="#G" x1="2268" y1="328" x2="-464" y2="3"/><linearGradient id="dy" href="#B" x1="-1469" y1="-117" x2="37817" y2="4560"/><linearGradient id="dz" href="#R" x1="266" y1="98" x2="469" y2="123"/><linearGradient id="e0" href="#G" x1="2310" y1="350" x2="-486" y2="6"/><linearGradient id="e1" href="#B" x1="-2025" y1="-183" x2="15049" y2="1915"/><linearGradient id="e2" href="#R" x1="265" y1="107" x2="473" y2="133"/><linearGradient id="e3" href="#G" x1="2351" y1="371" x2="-510" y2="9"/><linearGradient id="e4" href="#B" x1="-2235" y1="-209" x2="9011" y2="1214"/><linearGradient id="e5" href="#R" x1="263" y1="116" x2="476" y2="144"/><linearGradient id="e6" href="#G" x1="2392" y1="391" x2="-538" y2="13"/><linearGradient id="e7" href="#B" x1="-2539" y1="-244" x2="6559" y2="927"/><linearGradient id="e8" href="#R" x1="261" y1="125" x2="478" y2="155"/><linearGradient id="e9" href="#G" x1="2422" y1="420" x2="-567" y2="12"/><linearGradient id="ea" href="#B" x1="-2598" y1="-264" x2="4766" y2="739"/><linearGradient id="eb" href="#R" x1="259" y1="134" x2="481" y2="166"/><linearGradient id="ec" href="#G" x1="2437" y1="448" x2="-592" y2="11"/><linearGradient id="ed" href="#B" x1="-2604" y1="-279" x2="3588" y2="614"/><linearGradient id="ee" href="#R" x1="258" y1="143" x2="483" y2="175"/><linearGradient id="ef" href="#G" x1="2450" y1="461" x2="-619" y2="15"/><linearGradient id="eg" href="#B" x1="-2596" y1="-272" x2="2792" y2="511"/><linearGradient id="eh" href="#R" x1="257" y1="151" x2="484" y2="185"/><linearGradient id="ei" href="#G" x1="2449" y1="475" x2="-644" y2="18"/><linearGradient id="ej" href="#B" x1="-2566" y1="-266" x2="2228" y2="443"/><linearGradient id="ek" href="#R" x1="255" y1="158" x2="485" y2="193"/><linearGradient id="el" href="#G" x1="2437" y1="489" x2="-667" y2="18"/><linearGradient id="em" href="#B" x1="-2497" y1="-259" x2="1812" y2="394"/><linearGradient id="en" href="#R" x1="254" y1="164" x2="486" y2="200"/><linearGradient id="eo" href="#G" x1="2420" y1="502" x2="-690" y2="17"/><linearGradient id="ep" href="#B" x1="-2405" y1="-250" x2="1512" y2="360"/><linearGradient id="eq" href="#R" x1="254" y1="170" x2="485" y2="207"/><linearGradient id="er" href="#G" x1="2380" y1="512" x2="-703" y2="16"/><linearGradient id="es" href="#B" x1="-2287" y1="-239" x2="1300" y2="338"/><linearGradient id="et" href="#R" x1="254" y1="174" x2="484" y2="212"/><linearGradient id="eu" href="#G" x1="2331" y1="519" x2="-713" y2="13"/><linearGradient id="ev" href="#B" x1="-2170" y1="-229" x2="1164" y2="325"/><linearGradient id="ew" href="#R" x1="253" y1="176" x2="483" y2="215"/><linearGradient id="ex" href="#G" x1="2281" y1="520" x2="-722" y2="11"/><linearGradient id="ey" href="#B" x1="-2059" y1="-216" x2="1092" y2="318"/><linearGradient id="ez" href="#R" x1="276" y1="62" x2="456" y2="81"/><linearGradient id="f0" href="#G" x1="2074" y1="253" x2="-401" y2="-10"/><linearGradient id="f1" href="#R" x1="275" y1="68" x2="458" y2="88"/><linearGradient id="f2" href="#G" x1="2120" y1="266" x2="-411" y2="-5"/><linearGradient id="f3" href="#R" x1="273" y1="75" x2="461" y2="96"/><linearGradient id="f4" href="#G" x1="2174" y1="288" x2="-428" y2="-4"/><linearGradient id="f5" href="#R" x1="271" y1="82" x2="464" y2="105"/><linearGradient id="f6" href="#G" x1="2225" y1="308" x2="-446" y2="0"/><linearGradient id="f7" href="#R" x1="254" y1="158" x2="486" y2="146"/><linearGradient id="f8" href="#G" x1="-1981" y1="270" x2="1074" y2="117"/><linearGradient id="f9" href="#B" x1="2166" y1="62" x2="-654" y2="203"/><linearGradient id="fa" href="#R" x1="254" y1="155" x2="486" y2="144"/><linearGradient id="fb" href="#G" x1="-2017" y1="266" x2="1059" y2="116"/><linearGradient id="fc" href="#B" x1="2233" y1="59" x2="-716" y2="202"/><linearGradient id="fd" href="#R" x1="255" y1="152" x2="484" y2="142"/><linearGradient id="fe" href="#G" x1="-2038" y1="252" x2="1039" y2="117"/><linearGradient id="ff" href="#B" x1="2284" y1="63" x2="-822" y2="199"/><linearGradient id="fg" href="#R" x1="255" y1="147" x2="481" y2="138"/><linearGradient id="fh" href="#G" x1="-2041" y1="239" x2="1016" y2="117"/><linearGradient id="fi" href="#B" x1="2319" y1="65" x2="-981" y2="197"/><linearGradient id="fj" href="#G" x1="-2034" y1="232" x2="990" y2="113"/><linearGradient id="fk" href="#B" x1="2335" y1="60" x2="-1202" y2="199"/><linearGradient id="fl" href="#G" x1="-2025" y1="218" x2="967" y2="109"/><linearGradient id="fm" href="#B" x1="2346" y1="59" x2="-1514" y2="199"/><linearGradient id="fn" href="#G" x1="-2003" y1="196" x2="943" y2="108"/><linearGradient id="fo" href="#B" x1="2293" y1="67" x2="-1896" y2="193"/><linearGradient id="fp" href="#G" x1="-1968" y1="181" x2="917" y2="103"/><linearGradient id="fq" href="#B" x1="2276" y1="66" x2="-2483" y2="195"/><linearGradient id="fr" href="#G" x1="-1928" y1="176" x2="893" y2="94"/><linearGradient id="fs" href="#B" x1="2148" y1="57" x2="-3179" y2="213"/><linearGradient id="ft" href="#G" x1="-1890" y1="161" x2="873" y2="88"/><linearGradient id="fu" href="#B" x1="2089" y1="56" x2="-4421" y2="228"/><linearGradient id="fv" href="#G" x1="-1849" y1="149" x2="856" y2="81"/><linearGradient id="fw" href="#B" x1="1837" y1="57" x2="-5979" y2="251"/><linearGradient id="fx" href="#G" x1="-1808" y1="142" x2="842" y2="73"/><linearGradient id="fy" href="#B" x1="1612" y1="52" x2="-9570" y2="346"/><linearGradient id="fz" href="#G" x1="-1759" y1="130" x2="827" y2="67"/><linearGradient id="g0" href="#B" x1="890" y1="65" x2="-16198" y2="480"/><linearGradient id="g1" href="#G" x1="-1707" y1="107" x2="815" y2="65"/><linearGradient id="g2" href="#B" x1="-3504" y1="137" x2="-85075" y2="1498"/><linearGradient id="g3" href="#G" x1="-1664" y1="101" x2="808" y2="57"/><linearGradient id="g4" href="#G" x1="-1619" y1="97" x2="804" y2="50"/><linearGradient id="g5" href="#R" x1="286" y1="120" x2="465" y2="83"/><linearGradient id="g6" href="#G" x1="964" y1="53" x2="271" y2="102"/><linearGradient id="g7" href="#B" x1="430" y1="87" x2="407" y2="170"/><linearGradient id="g8" href="#R" x1="279" y1="121" x2="469" y2="92"/><linearGradient id="g9" href="#G" x1="993" y1="248" x2="262" y2="54"/><linearGradient id="ga" href="#B" x1="431" y1="87" x2="405" y2="179"/><linearGradient id="gb" href="#R" x1="285" y1="137" x2="469" y2="96"/><linearGradient id="gc" href="#G" x1="967" y1="357" x2="266" y2="32"/><linearGradient id="gd" href="#B" x1="431" y1="85" x2="402" y2="185"/><linearGradient id="ge" href="#R" x1="274" y1="131" x2="474" y2="107"/><linearGradient id="gf" href="#G" x1="850" y1="486" x2="294" y2="4"/><linearGradient id="gg" href="#B" x1="430" y1="81" x2="396" y2="197"/><linearGradient id="gh" href="#R" x1="271" y1="132" x2="476" y2="115"/><linearGradient id="gi" href="#G" x1="715" y1="538" x2="323" y2="-3"/><linearGradient id="gj" href="#B" x1="425" y1="77" x2="389" y2="199"/><linearGradient id="gk" href="#R" x1="265" y1="131" x2="479" y2="125"/><linearGradient id="gl" href="#G" x1="643" y1="552" x2="331" y2="1"/><linearGradient id="gm" href="#B" x1="419" y1="66" x2="378" y2="211"/><linearGradient id="gn" href="#R" x1="262" y1="138" x2="481" y2="129"/><linearGradient id="go" href="#G" x1="563" y1="557" x2="339" y2="8"/><linearGradient id="gp" href="#B" x1="410" y1="58" x2="367" y2="215"/><linearGradient id="gq" href="#R" x1="256" y1="136" x2="487" y2="140"/><linearGradient id="gr" href="#G" x1="502" y1="546" x2="338" y2="18"/><linearGradient id="gs" href="#B" x1="398" y1="43" x2="354" y2="224"/><linearGradient id="gt" href="#R" x1="260" y1="146" x2="483" y2="137"/><linearGradient id="gu" href="#G" x1="424" y1="502" x2="339" y2="36"/><linearGradient id="gv" href="#B" x1="383" y1="41" x2="341" y2="219"/><linearGradient id="gw" href="#R" x1="254" y1="137" x2="491" y2="158"/><linearGradient id="gx" href="#G" x1="387" y1="492" x2="327" y2="43"/><linearGradient id="gy" href="#B" x1="365" y1="14" x2="325" y2="232"/><linearGradient id="gz" href="#R" x1="255" y1="142" x2="487" y2="159"/><linearGradient id="h0" href="#G" x1="339" y1="467" x2="317" y2="52"/><linearGradient id="h1" href="#B" x1="346" y1="-3" x2="308" y2="238"/><linearGradient id="h2" href="#R" x1="254" y1="142" x2="489" y2="164"/><linearGradient id="h3" href="#G" x1="289" y1="422" x2="307" y2="65"/><linearGradient id="h4" href="#B" x1="323" y1="-17" x2="291" y2="242"/><linearGradient id="h5" href="#R" x1="255" y1="144" x2="485" y2="157"/><linearGradient id="h6" href="#G" x1="263" y1="401" x2="289" y2="70"/><linearGradient id="h7" href="#B" x1="282" y1="-52" x2="285" y2="260"/><linearGradient id="h8" href="#R" x1="256" y1="143" x2="479" y2="154"/><linearGradient id="h9" href="#G" x1="229" y1="358" x2="275" y2="80"/><linearGradient id="ha" href="#B" x1="229" y1="-78" x2="287" y2="278"/><linearGradient id="hb" href="#R" x1="256" y1="140" x2="475" y2="156"/><linearGradient id="hc" href="#G" x1="202" y1="334" x2="261" y2="82"/><linearGradient id="hd" href="#B" x1="112" y1="-94" x2="338" y2="296"/><linearGradient id="he" href="#G" x1="178" y1="284" x2="247" y2="91"/><linearGradient id="hf" href="#B" x1="2" y1="27" x2="406" y2="217"/><linearGradient id="hg" href="#G" x1="163" y1="247" x2="233" y2="94"/><linearGradient id="hh" href="#B" x1="91" y1="159" x2="330" y2="102"/><linearGradient id="hi" href="#G" x1="157" y1="205" x2="219" y2="99"/><linearGradient id="hj" href="#B" x1="158" y1="150" x2="257" y2="92"/><linearGradient id="hk" href="#R" x1="296" y1="113" x2="458" y2="66"/><linearGradient id="hl" href="#G" x1="721" y1="-121" x2="336" y2="134"/><linearGradient id="hm" href="#R" x1="290" y1="113" x2="462" y2="76"/><linearGradient id="hn" href="#G" x1="851" y1="-67" x2="302" y2="128"/><linearGradient id="ho" href="#R" x1="269" y1="76" x2="471" y2="101"/><linearGradient id="hp" href="#G" x1="2683" y1="372" x2="-178" y2="21"/><linearGradient id="hq" href="#B" x1="-1030" y1="-84" x2="11224" y2="1419"/><linearGradient id="hr" href="#R" x1="267" y1="82" x2="474" y2="109"/><linearGradient id="hs" href="#G" x1="2724" y1="397" x2="-193" y2="23"/><linearGradient id="ht" href="#B" x1="-1084" y1="-91" x2="6621" y2="897"/><linearGradient id="hu" href="#R" x1="265" y1="89" x2="477" y2="117"/><linearGradient id="hv" href="#G" x1="2765" y1="423" x2="-210" y2="25"/><linearGradient id="hw" href="#B" x1="-1118" y1="-96" x2="4590" y2="667"/><linearGradient id="hx" href="#R" x1="263" y1="96" x2="479" y2="125"/><linearGradient id="hy" href="#G" x1="2796" y1="437" x2="-227" y2="29"/><linearGradient id="hz" href="#B" x1="-1160" y1="-97" x2="3489" y2="531"/><linearGradient id="i0" href="#R" x1="262" y1="102" x2="481" y2="133"/><linearGradient id="i1" href="#G" x1="2802" y1="453" x2="-241" y2="33"/><linearGradient id="i2" href="#B" x1="-1151" y1="-93" x2="2715" y2="441"/><linearGradient id="i3" href="#R" x1="261" y1="108" x2="482" y2="141"/><linearGradient id="i4" href="#G" x1="2790" y1="479" x2="-253" y2="33"/><linearGradient id="i5" href="#B" x1="-1155" y1="-99" x2="2217" y2="395"/><linearGradient id="i6" href="#R" x1="260" y1="115" x2="482" y2="149"/><linearGradient id="i7" href="#G" x1="2772" y1="504" x2="-267" y2="33"/><linearGradient id="i8" href="#B" x1="-1133" y1="-101" x2="1841" y2="359"/><linearGradient id="i9" href="#R" x1="259" y1="120" x2="483" y2="156"/><linearGradient id="ia" href="#G" x1="2763" y1="521" x2="-283" y2="33"/><linearGradient id="ib" href="#B" x1="-1114" y1="-100" x2="1577" y2="332"/><linearGradient id="ic" href="#R" x1="258" y1="125" x2="483" y2="163"/><linearGradient id="id" href="#G" x1="2732" y1="538" x2="-297" y2="32"/><linearGradient id="ie" href="#B" x1="-1088" y1="-100" x2="1383" y2="313"/><linearGradient id="if" href="#R" x1="257" y1="129" x2="481" y2="168"/><linearGradient id="ig" href="#G" x1="2674" y1="552" x2="-304" y2="31"/><linearGradient id="ih" href="#B" x1="-1042" y1="-98" x2="1234" y2="300"/><linearGradient id="ii" href="#R" x1="257" y1="132" x2="480" y2="171"/><linearGradient id="ij" href="#G" x1="2622" y1="546" x2="-314" y2="32"/><linearGradient id="ik" href="#B" x1="-1007" y1="-89" x2="1139" y2="287"/><linearGradient id="il" href="#R" x1="256" y1="134" x2="477" y2="174"/><linearGradient id="im" href="#G" x1="2544" y1="548" x2="-317" y2="31"/><linearGradient id="in" href="#B" x1="-957" y1="-85" x2="1073" y2="282"/><linearGradient id="io" href="#R" x1="256" y1="136" x2="475" y2="176"/><linearGradient id="ip" href="#G" x1="2473" y1="550" x2="-320" y2="28"/><linearGradient id="iq" href="#B" x1="-913" y1="-83" x2="1046" y2="283"/><linearGradient id="ir" href="#R" x1="259" y1="111" x2="489" y2="78"/><linearGradient id="is" href="#G" x1="-1434" y1="354" x2="547" y2="70"/><linearGradient id="it" href="#B" x1="840" y1="28" x2="-348" y2="198"/><linearGradient id="iu" href="#R" x1="259" y1="110" x2="489" y2="80"/><linearGradient id="iv" href="#G" x1="-1489" y1="341" x2="539" y2="74"/><linearGradient id="iw" href="#B" x1="862" y1="31" x2="-357" y2="192"/><linearGradient id="ix" href="#G" x1="-1545" y1="345" x2="530" y2="73"/><linearGradient id="iy" href="#B" x1="885" y1="27" x2="-387" y2="193"/><linearGradient id="iz" href="#G" x1="-1578" y1="339" x2="518" y2="73"/><linearGradient id="j0" href="#B" x1="901" y1="24" x2="-430" y2="193"/><linearGradient id="j1" href="#G" x1="-1616" y1="323" x2="508" y2="74"/><linearGradient id="j2" href="#B" x1="920" y1="26" x2="-500" y2="192"/><linearGradient id="j3" href="#G" x1="-1644" y1="317" x2="496" y2="72"/><linearGradient id="j4" href="#B" x1="934" y1="22" x2="-592" y2="196"/><linearGradient id="j5" href="#G" x1="-1647" y1="298" x2="483" y2="71"/><linearGradient id="j6" href="#B" x1="927" y1="23" x2="-696" y2="197"/><linearGradient id="j7" href="#G" x1="-1651" y1="285" x2="471" y2="68"/><linearGradient id="j8" href="#B" x1="932" y1="21" x2="-854" y2="203"/><linearGradient id="j9" href="#G" x1="-518" y1="1049" x2="259" y2="-73"/><linearGradient id="ja" href="#B" x1="139" y1="46" x2="143" y2="173"/><linearGradient id="jb" href="#G" x1="-689" y1="1051" x2="280" y2="-80"/><linearGradient id="jc" href="#B" x1="132" y1="52" x2="136" y2="163"/><linearGradient id="jd" href="#G" x1="-1082" y1="959" x2="344" y2="-70"/><linearGradient id="je" href="#B" x1="128" y1="56" x2="131" y2="155"/><linearGradient id="jf" href="#G" x1="-1393" y1="713" x2="396" y2="-33"/><linearGradient id="jg" href="#B" x1="124" y1="57" x2="128" y2="155"/><linearGradient id="jh" href="#G" x1="-1571" y1="185" x2="426" y2="54"/><linearGradient id="ji" href="#B" x1="765" y1="32" x2="-3023" y2="281"/><linearGradient id="jj" href="#G" x1="-1413" y1="-316" x2="399" y2="136"/><linearGradient id="jk" href="#B" x1="124" y1="59" x2="128" y2="146"/><linearGradient id="jl" href="#G" x1="-1074" y1="-606" x2="341" y2="181"/><linearGradient id="jm" href="#B" x1="127" y1="60" x2="131" y2="137"/><linearGradient id="jn" href="#G" x1="-787" y1="-695" x2="294" y2="191"/><linearGradient id="jo" href="#B" x1="131" y1="59" x2="134" y2="137"/><linearGradient id="jp" href="#G" x1="-1440" y1="114" x2="417" y2="40"/><linearGradient id="jq" href="#G" x1="-1400" y1="97" x2="418" y2="38"/><linearGradient id="jr" href="#G" x1="-1357" y1="82" x2="420" y2="35"/><linearGradient id="js" href="#G" x1="-1315" y1="79" x2="423" y2="31"/><linearGradient id="jt" href="#G" x1="-1274" y1="73" x2="427" y2="28"/><linearGradient id="ju" href="#R" x1="259" y1="109" x2="488" y2="94"/><linearGradient id="jv" href="#G" x1="-2723" y1="302" x2="709" y2="80"/><linearGradient id="jw" href="#B" x1="1159" y1="50" x2="-667" y2="169"/><linearGradient id="jx" href="#R" x1="259" y1="107" x2="487" y2="92"/><linearGradient id="jy" href="#G" x1="-2765" y1="301" x2="699" y2="79"/><linearGradient id="jz" href="#B" x1="1169" y1="48" x2="-708" y2="169"/><linearGradient id="k0" href="#R" x1="260" y1="104" x2="486" y2="90"/><linearGradient id="k1" href="#G" x1="-2799" y1="297" x2="688" y2="78"/><linearGradient id="k2" href="#B" x1="1177" y1="47" x2="-779" y2="170"/><linearGradient id="k3" href="#R" x1="260" y1="101" x2="486" y2="88"/><linearGradient id="k4" href="#G" x1="-2850" y1="279" x2="681" y2="77"/><linearGradient id="k5" href="#B" x1="1190" y1="48" x2="-894" y2="167"/><linearGradient id="k6" href="#R" x1="261" y1="98" x2="484" y2="87"/><linearGradient id="k7" href="#G" x1="-2856" y1="245" x2="668" y2="79"/><linearGradient id="k8" href="#B" x1="1190" y1="54" x2="-1038" y2="159"/><linearGradient id="k9" href="#R" x1="262" y1="94" x2="481" y2="84"/><linearGradient id="ka" href="#G" x1="-2844" y1="227" x2="654" y2="77"/><linearGradient id="kb" href="#B" x1="1182" y1="54" x2="-1230" y2="158"/><linearGradient id="kc" href="#R" x1="263" y1="89" x2="479" y2="81"/><linearGradient id="kd" href="#G" x1="-2844" y1="209" x2="644" y2="74"/><linearGradient id="ke" href="#B" x1="1173" y1="54" x2="-1494" y2="157"/><linearGradient id="kf" href="#R" x1="265" y1="84" x2="478" y2="77"/><linearGradient id="kg" href="#G" x1="-2847" y1="191" x2="636" y2="71"/><linearGradient id="kh" href="#B" x1="1174" y1="53" x2="-1894" y2="158"/><linearGradient id="ki" href="#R" x1="266" y1="79" x2="476" y2="71"/><linearGradient id="kj" href="#G" x1="-2819" y1="188" x2="625" y2="66"/><linearGradient id="kk" href="#B" x1="1151" y1="47" x2="-2426" y2="174"/><linearGradient id="kl" href="#R" x1="267" y1="74" x2="472" y2="67"/><linearGradient id="km" href="#G" x1="-2777" y1="170" x2="615" y2="62"/><linearGradient id="kn" href="#B" x1="1129" y1="46" x2="-3279" y2="186"/><linearGradient id="ko" href="#G" x1="-2734" y1="153" x2="606" y2="59"/><linearGradient id="kp" href="#B" x1="1100" y1="45" x2="-4790" y2="211"/><linearGradient id="kq" href="#R" x1="270" y1="47" x2="474" y2="72"/><linearGradient id="kr" href="#G" x1="2747" y1="352" x2="173" y2="35"/><linearGradient id="ks" href="#B" x1="8" y1="14" x2="14716" y2="1828"/><linearGradient id="kt" href="#R" x1="268" y1="50" x2="476" y2="77"/><linearGradient id="ku" href="#G" x1="2781" y1="386" x2="169" y2="36"/><linearGradient id="kv" href="#B" x1="-113" y1="-1" x2="6315" y2="860"/><linearGradient id="kw" href="#R" x1="266" y1="53" x2="478" y2="83"/><linearGradient id="kx" href="#G" x1="2816" y1="404" x2="163" y2="39"/><linearGradient id="ky" href="#B" x1="-154" y1="-4" x2="4042" y2="572"/><linearGradient id="kz" href="#R" x1="265" y1="57" x2="480" y2="88"/><linearGradient id="l0" href="#G" x1="2830" y1="423" x2="157" y2="42"/><linearGradient id="l1" href="#B" x1="-148" y1="-2" x2="2847" y2="426"/><linearGradient id="l2" href="#R" x1="264" y1="60" x2="481" y2="94"/><linearGradient id="l3" href="#G" x1="2834" y1="459" x2="152" y2="43"/><linearGradient id="l4" href="#B" x1="-165" y1="-6" x2="2272" y2="372"/><linearGradient id="l5" href="#R" x1="263" y1="63" x2="483" y2="100"/><linearGradient id="l6" href="#G" x1="2819" y1="494" x2="146" y2="43"/><linearGradient id="l7" href="#B" x1="-168" y1="-10" x2="1872" y2="334"/><linearGradient id="l8" href="#R" x1="262" y1="66" x2="484" y2="107"/><linearGradient id="l9" href="#G" x1="2805" y1="529" x2="138" y2="44"/><linearGradient id="la" href="#B" x1="-171" y1="-12" x2="1600" y2="310"/><linearGradient id="lb" href="#R" x1="261" y1="70" x2="485" y2="113"/><linearGradient id="lc" href="#G" x1="2783" y1="550" x2="130" y2="45"/><linearGradient id="ld" href="#B" x1="-168" y1="-11" x2="1397" y2="286"/><linearGradient id="le" href="#R" x1="261" y1="73" x2="486" y2="119"/><linearGradient id="lf" href="#G" x1="2739" y1="574" x2="123" y2="45"/><linearGradient id="lg" href="#B" x1="-166" y1="-13" x2="1253" y2="274"/><linearGradient id="lh" href="#R" x1="261" y1="76" x2="486" y2="124"/><linearGradient id="li" href="#G" x1="2684" y1="594" x2="116" y2="45"/><linearGradient id="lj" href="#B" x1="-158" y1="-14" x2="1137" y2="263"/><linearGradient id="lk" href="#R" x1="261" y1="79" x2="486" y2="128"/><linearGradient id="ll" href="#G" x1="2629" y1="595" x2="109" y2="46"/><linearGradient id="lm" href="#B" x1="-151" y1="-11" x2="1052" y2="251"/><linearGradient id="ln" href="#R" x1="261" y1="82" x2="485" y2="131"/><linearGradient id="lo" href="#G" x1="2553" y1="587" x2="103" y2="47"/><linearGradient id="lp" href="#B" x1="-140" y1="-7" x2="987" y2="242"/><linearGradient id="lq" href="#R" x1="261" y1="84" x2="484" y2="133"/><linearGradient id="lr" href="#G" x1="2468" y1="573" x2="98" y2="47"/><linearGradient id="ls" href="#B" x1="-127" y1="-3" x2="938" y2="234"/><linearGradient id="lt" href="#R" x1="262" y1="84" x2="481" y2="136"/><linearGradient id="lu" href="#G" x1="2356" y1="577" x2="96" y2="45"/><linearGradient id="lv" href="#B" x1="-110" y1="-3" x2="902" y2="235"/><linearGradient id="lw" href="#R" x1="263" y1="85" x2="480" y2="138"/><linearGradient id="lx" href="#G" x1="2280" y1="576" x2="91" y2="43"/><linearGradient id="ly" href="#B" x1="-99" y1="-3" x2="892" y2="238"/><linearGradient id="lz" href="#R" x1="278" y1="25" x2="459" y2="34"/><linearGradient id="m0" href="#G" x1="2177" y1="121" x2="156" y2="19"/><linearGradient id="m1" href="#R" x1="278" y1="25" x2="459" y2="35"/><linearGradient id="m2" href="#G" x1="2240" y1="136" x2="160" y2="18"/><linearGradient id="m3" href="#R" x1="278" y1="26" x2="460" y2="37"/><linearGradient id="m4" href="#G" x1="2294" y1="143" x2="165" y2="19"/><linearGradient id="m5" href="#R" x1="278" y1="27" x2="461" y2="39"/><linearGradient id="m6" href="#G" x1="2346" y1="164" x2="170" y2="20"/><linearGradient id="m7" href="#R" x1="277" y1="28" x2="462" y2="42"/><linearGradient id="m8" href="#G" x1="2400" y1="184" x2="173" y2="21"/><linearGradient id="m9" href="#R" x1="276" y1="30" x2="464" y2="45"/><linearGradient id="ma" href="#G" x1="2465" y1="205" x2="175" y2="22"/><linearGradient id="mb" href="#R" x1="275" y1="33" x2="465" y2="49"/><linearGradient id="mc" href="#G" x1="2531" y1="221" x2="176" y2="24"/><linearGradient id="md" href="#R" x1="274" y1="35" x2="467" y2="52"/><linearGradient id="me" href="#G" x1="2584" y1="245" x2="177" y2="26"/><linearGradient id="mf" href="#R" x1="273" y1="37" x2="469" y2="57"/><linearGradient id="mg" href="#G" x1="2632" y1="277" x2="178" y2="27"/><linearGradient id="mh" href="#R" x1="271" y1="39" x2="470" y2="62"/><linearGradient id="mi" href="#G" x1="2680" y1="313" x2="176" y2="28"/><linearGradient id="mj" href="#R" x1="270" y1="43" x2="472" y2="67"/><linearGradient id="mk" href="#G" x1="2713" y1="333" x2="175" y2="31"/><linearGradient id="ml" href="#R" x1="271" y1="50" x2="472" y2="68"/><linearGradient id="mm" href="#G" x1="4598" y1="440" x2="21" y2="28"/><linearGradient id="mn" href="#B" x1="-299" y1="-1" x2="26495" y2="2411"/><linearGradient id="mo" href="#R" x1="270" y1="53" x2="474" y2="73"/><linearGradient id="mp" href="#G" x1="4639" y1="481" x2="16" y2="29"/><linearGradient id="mq" href="#B" x1="-347" y1="-7" x2="9308" y2="938"/><linearGradient id="mr" href="#R" x1="269" y1="57" x2="475" y2="79"/><linearGradient id="ms" href="#G" x1="4659" y1="523" x2="11" y2="29"/><linearGradient id="mt" href="#B" x1="-354" y1="-9" x2="5538" y2="617"/><linearGradient id="mu" href="#R" x1="268" y1="61" x2="476" y2="84"/><linearGradient id="mv" href="#G" x1="4677" y1="546" x2="6" y2="32"/><linearGradient id="mw" href="#B" x1="-349" y1="-7" x2="3873" y2="457"/><linearGradient id="mx" href="#R" x1="267" y1="64" x2="477" y2="88"/><linearGradient id="my" href="#G" x1="4697" y1="570" x2="-2" y2="34"/><linearGradient id="mz" href="#B" x1="-360" y1="-7" x2="3030" y2="380"/><linearGradient id="n0" href="#R" x1="266" y1="67" x2="478" y2="93"/><linearGradient id="n1" href="#G" x1="4673" y1="592" x2="-7" y2="35"/><linearGradient id="n2" href="#B" x1="-356" y1="-7" x2="2458" y2="328"/><linearGradient id="n3" href="#R" x1="266" y1="71" x2="478" y2="97"/><linearGradient id="n4" href="#G" x1="4636" y1="614" x2="-12" y2="36"/><linearGradient id="n5" href="#B" x1="-360" y1="-7" x2="2095" y2="298"/><linearGradient id="n6" href="#R" x1="265" y1="74" x2="478" y2="103"/><linearGradient id="n7" href="#G" x1="4587" y1="657" x2="-18" y2="36"/><linearGradient id="n8" href="#B" x1="-355" y1="-9" x2="1818" y2="284"/><linearGradient id="n9" href="#R" x1="264" y1="77" x2="478" y2="107"/><linearGradient id="na" href="#G" x1="4545" y1="683" x2="-24" y2="36"/><linearGradient id="nb" href="#B" x1="-355" y1="-11" x2="1632" y2="271"/><linearGradient id="nc" href="#R" x1="264" y1="79" x2="478" y2="110"/><linearGradient id="nd" href="#G" x1="4479" y1="684" x2="-30" y2="37"/><linearGradient id="ne" href="#B" x1="-351" y1="-9" x2="1489" y2="255"/><linearGradient id="nf" href="#R" x1="263" y1="82" x2="476" y2="114"/><linearGradient id="ng" href="#G" x1="4389" y1="707" x2="-35" y2="36"/><linearGradient id="nh" href="#B" x1="-344" y1="-10" x2="1382" y2="251"/><linearGradient id="ni" href="#R" x1="263" y1="83" x2="475" y2="117"/><linearGradient id="nj" href="#G" x1="4299" y1="729" x2="-39" y2="35"/><linearGradient id="nk" href="#B" x1="-337" y1="-12" x2="1311" y2="251"/><linearGradient id="nl" href="#R" x1="262" y1="85" x2="474" y2="118"/><linearGradient id="nm" href="#G" x1="4209" y1="711" x2="-44" y2="36"/><linearGradient id="nn" href="#B" x1="-330" y1="-9" x2="1270" y2="245"/><linearGradient id="no" href="#R" x1="278" y1="25" x2="461" y2="34"/><linearGradient id="np" href="#G" x1="3828" y1="191" x2="22" y2="13"/><linearGradient id="nq" href="#R" x1="277" y1="26" x2="461" y2="34"/><linearGradient id="nr" href="#G" x1="3894" y1="191" x2="25" y2="14"/><linearGradient id="ns" href="#R" x1="277" y1="27" x2="462" y2="35"/><linearGradient id="nt" href="#G" x1="3981" y1="196" x2="27" y2="15"/><linearGradient id="nu" href="#R" x1="277" y1="28" x2="463" y2="37"/><linearGradient id="nv" href="#G" x1="4063" y1="197" x2="29" y2="17"/><linearGradient id="nw" href="#R" x1="276" y1="30" x2="464" y2="40"/><linearGradient id="nx" href="#G" x1="4150" y1="221" x2="30" y2="18"/><linearGradient id="ny" href="#R" x1="276" y1="32" x2="465" y2="43"/><linearGradient id="nz" href="#G" x1="4209" y1="263" x2="32" y2="18"/><linearGradient id="o0" href="#R" x1="275" y1="35" x2="465" y2="46"/><linearGradient id="o1" href="#G" x1="4272" y1="286" x2="33" y2="19"/><linearGradient id="o2" href="#R" x1="274" y1="37" x2="467" y2="50"/><linearGradient id="o3" href="#G" x1="4355" y1="309" x2="31" y2="21"/><linearGradient id="o4" href="#R" x1="273" y1="40" x2="468" y2="54"/><linearGradient id="o5" href="#G" x1="4435" y1="330" x2="29" y2="23"/><linearGradient id="o6" href="#R" x1="273" y1="43" x2="469" y2="58"/><linearGradient id="o7" href="#G" x1="4476" y1="353" x2="28" y2="25"/><linearGradient id="o8" href="#R" x1="272" y1="47" x2="470" y2="63"/><linearGradient id="o9" href="#G" x1="4537" y1="396" x2="25" y2="26"/><linearGradient id="oa" href="#G" x1="-669" y1="460" x2="284" y2="45"/><linearGradient id="ob" href="#B" x1="310" y1="34" x2="-2" y2="170"/><linearGradient id="oc" href="#G" x1="276" y1="277" x2="233" y2="56"/><linearGradient id="od" href="#B" x1="309" y1="26" x2="2" y2="190"/><linearGradient id="oe" href="#G" x1="263" y1="354" x2="226" y2="53"/><linearGradient id="of" href="#B" x1="262" y1="3" x2="130" y2="248"/><linearGradient id="og" href="#G" x1="253" y1="343" x2="218" y2="55"/><linearGradient id="oh" href="#B" x1="228" y1="16" x2="196" y2="204"/><linearGradient id="oi" href="#G" x1="212" y1="471" x2="212" y2="50"/><linearGradient id="oj" href="#B" x1="221" y1="14" x2="187" y2="203"/><linearGradient id="ok" href="#G" x1="203" y1="471" x2="204" y2="50"/><linearGradient id="ol" href="#B" x1="205" y1="26" x2="199" y2="171"/><linearGradient id="om" href="#G" x1="161" y1="582" x2="197" y2="44"/><linearGradient id="on" href="#B" x1="196" y1="26" x2="193" y2="171"/><linearGradient id="oo" href="#G" x1="44" y1="755" x2="194" y2="35"/><linearGradient id="op" href="#B" x1="190" y1="21" x2="182" y2="182"/><linearGradient id="oq" href="#G" x1="96" y1="662" x2="184" y2="38"/><linearGradient id="or" href="#B" x1="179" y1="35" x2="185" y2="145"/><linearGradient id="os" href="#G" x1="-18" y1="791" x2="183" y2="31"/><linearGradient id="ot" href="#B" x1="173" y1="36" x2="178" y2="145"/><linearGradient id="ou" href="#G" x1="-227" y1="917" x2="186" y2="23"/><linearGradient id="ov" href="#B" x1="168" y1="33" x2="169" y2="155"/><linearGradient id="ow" href="#G" x1="-374" y1="992" x2="188" y2="17"/><linearGradient id="ox" href="#B" x1="162" y1="36" x2="167" y2="146"/><linearGradient id="oy" href="#G" x1="-557" y1="1049" x2="192" y2="12"/><linearGradient id="oz" href="#B" x1="158" y1="39" x2="165" y2="136"/><linearGradient id="p0" href="#G" x1="-994" y1="976" x2="209" y2="13"/><linearGradient id="p1" href="#B" x1="156" y1="38" x2="160" y2="142"/><linearGradient id="p2" href="#G" x1="-1273" y1="770" x2="219" y2="19"/><linearGradient id="p3" href="#B" x1="154" y1="40" x2="158" y2="130"/><linearGradient id="p4" href="#G" x1="-1508" y1="48" x2="229" y2="49"/><linearGradient id="p5" href="#B" x1="153" y1="41" x2="159" y2="124"/><linearGradient id="p6" href="#G" x1="-1508" y1="45" x2="229" y2="46"/><linearGradient id="p7" href="#B" x1="153" y1="41" x2="158" y2="127"/><linearGradient id="p8" href="#G" x1="-1117" y1="-591" x2="212" y2="71"/><linearGradient id="p9" href="#B" x1="154" y1="41" x2="158" y2="118"/><linearGradient id="pa" href="#G" x1="-1441" y1="126" x2="229" y2="36"/><linearGradient id="pb" href="#B" x1="856" y1="2" x2="37799" y2="-1998"/><linearGradient id="pc" href="#G" x1="-467" y1="-693" x2="188" y2="70"/><linearGradient id="pd" href="#G" x1="-335" y1="-654" x2="185" y2="66"/><linearGradient id="pe" href="#G" x1="-1322" y1="52" x2="235" y2="31"/><linearGradient id="pf" href="#G" x1="-109" y1="-534" x2="185" y2="55"/><linearGradient id="pg" href="#G" x1="12" y1="-429" x2="185" y2="48"/><linearGradient id="ph" href="#G" x1="-1137" y1="-11" x2="244" y2="28"/><linearGradient id="pi" href="#G" x1="-1084" y1="-12" x2="248" y2="27"/><linearGradient id="pj" href="#G" x1="-1025" y1="-10" x2="253" y2="26"/><linearGradient id="pk" href="#G" x1="-928" y1="-42" x2="256" y2="26"/><linearGradient id="pl" href="#G" x1="-874" y1="-44" x2="260" y2="26"/><linearGradient id="pm" href="#G" x1="-828" y1="-28" x2="266" y2="25"/><linearGradient id="pn" href="#R" x1="267" y1="58" x2="488" y2="24"/><linearGradient id="po" href="#G" x1="-2558" y1="491" x2="327" y2="48"/><linearGradient id="pp" href="#B" x1="400" y1="37" x2="-296" y2="144"/><linearGradient id="pq" href="#R" x1="267" y1="57" x2="486" y2="22"/><linearGradient id="pr" href="#G" x1="-2668" y1="519" x2="324" y2="48"/><linearGradient id="ps" href="#B" x1="400" y1="36" x2="-303" y2="147"/><linearGradient id="pt" href="#G" x1="-2762" y1="519" x2="320" y2="48"/><linearGradient id="pu" href="#B" x1="400" y1="36" x2="-318" y2="146"/><linearGradient id="pv" href="#G" x1="-2897" y1="481" x2="318" y2="49"/><linearGradient id="pw" href="#B" x1="403" y1="37" x2="-353" y2="139"/><linearGradient id="px" href="#G" x1="-3032" y1="445" x2="315" y2="49"/><linearGradient id="py" href="#B" x1="405" y1="38" x2="-401" y2="134"/><linearGradient id="pz" href="#G" x1="-3126" y1="445" x2="312" y2="48"/><linearGradient id="q0" href="#B" x1="405" y1="37" x2="-458" y2="137"/><linearGradient id="q1" href="#G" x1="-3196" y1="444" x2="308" y2="47"/><linearGradient id="q2" href="#B" x1="405" y1="36" x2="-531" y2="142"/><linearGradient id="q3" href="#G" x1="-3282" y1="409" x2="306" y2="47"/><linearGradient id="q4" href="#B" x1="404" y1="37" x2="-628" y2="141"/><linearGradient id="q5" href="#G" x1="-3350" y1="338" x2="303" y2="46"/><linearGradient id="q6" href="#B" x1="405" y1="38" x2="-764" y2="132"/><linearGradient id="q7" href="#G" x1="-3345" y1="307" x2="300" y2="45"/><linearGradient id="q8" href="#B" x1="401" y1="38" x2="-928" y2="133"/><linearGradient id="q9" href="#G" x1="-3342" y1="276" x2="297" y2="44"/><linearGradient id="qa" href="#B" x1="397" y1="38" x2="-1171" y2="138"/><linearGradient id="qb" href="#G" x1="-3375" y1="208" x2="296" y2="44"/><linearGradient id="qc" href="#B" x1="398" y1="39" x2="-1592" y2="128"/><linearGradient id="qd" href="#G" x1="-3373" y1="143" x2="295" y2="43"/><linearGradient id="qe" href="#B" x1="393" y1="40" x2="-2298" y2="114"/><linearGradient id="qf" href="#G" x1="-3340" y1="109" x2="294" y2="42"/><linearGradient id="qg" href="#B" x1="389" y1="40" x2="-3957" y2="121"/><linearGradient id="qh" href="#G" x1="-3308" y1="76" x2="293" y2="40"/><linearGradient id="qi" href="#B" x1="374" y1="40" x2="-11547" y2="157"/><linearGradient id="qj" href="#G" x1="-3244" y1="43" x2="292" y2="39"/><linearGradient id="qk" href="#B" x1="436" y1="39" x2="16496" y2="21"/><linearGradient id="ql" href="#G" x1="-3181" y1="12" x2="293" y2="37"/><linearGradient id="qm" href="#G" x1="-3149" y1="-23" x2="295" y2="36"/><linearGradient id="qn" href="#G" x1="-3091" y1="-23" x2="297" y2="34"/><linearGradient id="qo" href="#G" x1="-2983" y1="-60" x2="298" y2="33"/><linearGradient id="qp" href="#G" x1="-2925" y1="-125" x2="300" y2="33"/><linearGradient id="qq" href="#G" x1="-2831" y1="-162" x2="302" y2="33"/><linearGradient id="qr" href="#G" x1="-2696" y1="-162" x2="304" y2="32"/><linearGradient id="qs" href="#G" x1="-2601" y1="-162" x2="307" y2="31"/><linearGradient id="qt" href="#G" x1="-2532" y1="-171" x2="310" y2="31"/><linearGradient id="qu" href="#G" x1="-2400" y1="-198" x2="313" y2="31"/><linearGradient id="qv" href="#G" x1="-2263" y1="-237" x2="314" y2="32"/><linearGradient id="qw" href="#R" x1="267" y1="57" x2="483" y2="34"/><linearGradient id="qx" href="#G" x1="-4057" y1="517" x2="350" y2="48"/><linearGradient id="qy" href="#B" x1="407" y1="42" x2="-332" y2="121"/><linearGradient id="qz" href="#R" x1="267" y1="56" x2="484" y2="34"/><linearGradient id="r0" href="#G" x1="-4241" y1="517" x2="348" y2="48"/><linearGradient id="r1" href="#B" x1="408" y1="42" x2="-352" y2="120"/><linearGradient id="r2" href="#R" x1="267" y1="56" x2="481" y2="34"/><linearGradient id="r3" href="#G" x1="-4337" y1="517" x2="345" y2="48"/><linearGradient id="r4" href="#B" x1="406" y1="42" x2="-372" y2="120"/><linearGradient id="r5" href="#R" x1="267" y1="55" x2="480" y2="34"/><linearGradient id="r6" href="#G" x1="-4472" y1="510" x2="343" y2="48"/><linearGradient id="r7" href="#B" x1="406" y1="42" x2="-410" y2="120"/><linearGradient id="r8" href="#R" x1="268" y1="54" x2="481" y2="36"/><linearGradient id="r9" href="#G" x1="-4660" y1="465" x2="341" y2="47"/><linearGradient id="ra" href="#B" x1="408" y1="42" x2="-474" y2="116"/><linearGradient id="rb" href="#R" x1="268" y1="53" x2="483" y2="37"/><linearGradient id="rc" href="#G" x1="-4848" y1="416" x2="340" y2="47"/><linearGradient id="rd" href="#B" x1="409" y1="42" x2="-560" y2="111"/><linearGradient id="re" href="#R" x1="268" y1="51" x2="481" y2="36"/><linearGradient id="rf" href="#G" x1="-4930" y1="417" x2="338" y2="46"/><linearGradient id="rg" href="#B" x1="408" y1="41" x2="-653" y2="116"/><linearGradient id="rh" href="#R" x1="268" y1="50" x2="478" y2="37"/><linearGradient id="ri" href="#G" x1="-4985" y1="365" x2="335" y2="46"/><linearGradient id="rj" href="#B" x1="407" y1="42" x2="-785" y2="113"/><linearGradient id="rk" href="#R" x1="268" y1="48" x2="477" y2="40"/><linearGradient id="rl" href="#G" x1="-5071" y1="274" x2="333" y2="46"/><linearGradient id="rm" href="#B" x1="406" y1="43" x2="-973" y2="101"/><linearGradient id="rn" href="#R" x1="269" y1="47" x2="477" y2="38"/><linearGradient id="ro" href="#G" x1="-5159" y1="276" x2="333" y2="44"/><linearGradient id="rp" href="#B" x1="406" y1="41" x2="-1251" y2="111"/><linearGradient id="rq" href="#R" x1="270" y1="45" x2="475" y2="36"/><linearGradient id="rr" href="#G" x1="-5161" y1="274" x2="331" y2="43"/><linearGradient id="rs" href="#B" x1="405" y1="39" x2="-1682" y2="127"/><linearGradient id="rt" href="#R" x1="270" y1="44" x2="473" y2="39"/><linearGradient id="ru" href="#G" x1="-5159" y1="182" x2="330" y2="42"/><linearGradient id="rv" href="#B" x1="403" y1="40" x2="-2449" y2="113"/><linearGradient id="rw" href="#R" x1="271" y1="42" x2="472" y2="39"/><linearGradient id="rx" href="#G" x1="-5159" y1="134" x2="329" y2="41"/><linearGradient id="ry" href="#B" x1="402" y1="40" x2="-4302" y2="119"/><linearGradient id="rz" href="#R" x1="271" y1="41" x2="470" y2="39"/><linearGradient id="s0" href="#G" x1="-5113" y1="87" x2="329" y2="40"/><linearGradient id="s1" href="#B" x1="399" y1="39" x2="-13349" y2="158"/><linearGradient id="s2" href="#R" x1="271" y1="39" x2="470" y2="41"/><linearGradient id="s3" href="#G" x1="-5114" y1="-5" x2="329" y2="40"/><linearGradient id="s4" href="#B" x1="414" y1="41" x2="15475" y2="164"/><linearGradient id="s5" href="#R" x1="272" y1="38" x2="470" y2="41"/><linearGradient id="s6" href="#G" x1="-5069" y1="-50" x2="330" y2="39"/><linearGradient id="s7" href="#R" x1="272" y1="36" x2="467" y2="41"/><linearGradient id="s8" href="#G" x1="-4932" y1="-97" x2="330" y2="38"/><linearGradient id="s9" href="#R" x1="273" y1="35" x2="464" y2="43"/><linearGradient id="sa" href="#G" x1="-4794" y1="-190" x2="330" y2="37"/><linearGradient id="sb" href="#R" x1="273" y1="34" x2="464" y2="44"/><linearGradient id="sc" href="#G" x1="-4699" y1="-240" x2="331" y2="37"/><linearGradient id="sd" href="#R" x1="273" y1="33" x2="462" y2="43"/><linearGradient id="se" href="#G" x1="-4564" y1="-240" x2="332" y2="36"/><linearGradient id="sf" href="#R" x1="274" y1="32" x2="461" y2="44"/><linearGradient id="sg" href="#G" x1="-4427" y1="-289" x2="333" y2="36"/><linearGradient id="sh" href="#R" x1="274" y1="31" x2="462" y2="46"/><linearGradient id="si" href="#G" x1="-4331" y1="-333" x2="336" y2="36"/><linearGradient id="sj" href="#R" x1="274" y1="30" x2="462" y2="47"/><linearGradient id="sk" href="#G" x1="-4198" y1="-382" x2="337" y2="36"/><linearGradient id="sl" href="#R" x1="275" y1="29" x2="460" y2="47"/><linearGradient id="sm" href="#G" x1="-4011" y1="-384" x2="339" y2="35"/><linearGradient id="sn" href="#R" x1="275" y1="28" x2="462" y2="45"/><linearGradient id="so" href="#G" x1="-3913" y1="-341" x2="342" y2="34"/><linearGradient id="sp" href="#R" x1="275" y1="28" x2="465" y2="45"/><linearGradient id="sq" href="#G" x1="-3819" y1="-341" x2="344" y2="34"/><linearGradient id="sr" href="#R" x1="275" y1="28" x2="463" y2="45"/><linearGradient id="ss" href="#G" x1="-3632" y1="-341" x2="346" y2="34"/><linearGradient id="st" href="#R" x1="269" y1="60" x2="477" y2="22"/><linearGradient id="su" href="#G" x1="-3813" y1="824" x2="355" y2="44"/><linearGradient id="sv" href="#B" x1="373" y1="41" x2="-82" y2="126"/><linearGradient id="sw" href="#R" x1="267" y1="59" x2="480" y2="25"/><linearGradient id="sx" href="#G" x1="-4434" y1="825" x2="353" y2="45"/><linearGradient id="sy" href="#B" x1="374" y1="42" x2="-106" y2="120"/><linearGradient id="sz" href="#R" x1="268" y1="58" x2="479" y2="26"/><linearGradient id="t0" href="#G" x1="-4685" y1="825" x2="352" y2="45"/><linearGradient id="t1" href="#B" x1="374" y1="42" x2="-124" y2="119"/><linearGradient id="t2" href="#R" x1="267" y1="58" x2="479" y2="24"/><linearGradient id="t3" href="#G" x1="-4994" y1="898" x2="351" y2="45"/><linearGradient id="t4" href="#B" x1="374" y1="41" x2="-156" y2="126"/><linearGradient id="t5" href="#R" x1="267" y1="57" x2="480" y2="24"/><linearGradient id="t6" href="#G" x1="-5283" y1="896" x2="350" y2="44"/><linearGradient id="t7" href="#B" x1="374" y1="41" x2="-194" y2="126"/><linearGradient id="t8" href="#R" x1="268" y1="55" x2="480" y2="27"/><linearGradient id="t9" href="#G" x1="-5524" y1="824" x2="349" y2="44"/><linearGradient id="ta" href="#B" x1="374" y1="41" x2="-241" y2="123"/><linearGradient id="tb" href="#R" x1="269" y1="54" x2="477" y2="30"/><linearGradient id="tc" href="#G" x1="-5681" y1="740" x2="347" y2="45"/><linearGradient id="td" href="#B" x1="373" y1="41" x2="-294" y2="119"/><linearGradient id="te" href="#R" x1="269" y1="52" x2="477" y2="31"/><linearGradient id="tf" href="#G" x1="-5909" y1="660" x2="346" y2="44"/><linearGradient id="tg" href="#B" x1="373" y1="42" x2="-375" y2="115"/><linearGradient id="th" href="#R" x1="268" y1="50" x2="479" y2="33"/><linearGradient id="ti" href="#G" x1="-6220" y1="584" x2="346" y2="44"/><linearGradient id="tj" href="#B" x1="374" y1="41" x2="-496" y2="113"/><linearGradient id="tk" href="#R" x1="268" y1="49" x2="478" y2="34"/><linearGradient id="tl" href="#G" x1="-6374" y1="504" x2="344" y2="44"/><linearGradient id="tm" href="#B" x1="374" y1="42" x2="-642" y2="111"/><linearGradient id="tn" href="#R" x1="269" y1="47" x2="476" y2="35"/><linearGradient id="to" href="#G" x1="-6440" y1="429" x2="344" y2="43"/><linearGradient id="tp" href="#B" x1="373" y1="41" x2="-837" y2="110"/><linearGradient id="tq" href="#R" x1="269" y1="45" x2="477" y2="38"/><linearGradient id="tr" href="#G" x1="-6603" y1="273" x2="343" y2="43"/><linearGradient id="ts" href="#B" x1="374" y1="41" x2="-1199" y2="94"/><linearGradient id="tt" href="#R" x1="270" y1="44" x2="475" y2="39"/><linearGradient id="tu" href="#G" x1="-6597" y1="196" x2="342" y2="42"/><linearGradient id="tv" href="#B" x1="372" y1="42" x2="-1767" y2="89"/><linearGradient id="tw" href="#R" x1="271" y1="42" x2="473" y2="40"/><linearGradient id="tx" href="#G" x1="-6598" y1="116" x2="342" y2="41"/><linearGradient id="ty" href="#B" x1="373" y1="41" x2="-3190" y2="79"/><linearGradient id="tz" href="#R" x1="270" y1="40" x2="474" y2="43"/><linearGradient id="u0" href="#G" x1="-6674" y1="-37" x2="342" y2="41"/><linearGradient id="u1" href="#B" x1="372" y1="42" x2="-10221" y2="-76"/><linearGradient id="u2" href="#R" x1="271" y1="39" x2="473" y2="44"/><linearGradient id="u3" href="#G" x1="-6598" y1="-113" x2="342" y2="41"/><linearGradient id="u4" href="#B" x1="375" y1="42" x2="11324" y2="285"/><linearGradient id="u5" href="#R" x1="272" y1="38" x2="472" y2="44"/><linearGradient id="u6" href="#G" x1="-6521" y1="-189" x2="342" y2="40"/><linearGradient id="u7" href="#R" x1="272" y1="36" x2="472" y2="47"/><linearGradient id="u8" href="#G" x1="-6441" y1="-348" x2="343" y2="40"/><linearGradient id="u9" href="#R" x1="272" y1="35" x2="471" y2="48"/><linearGradient id="ua" href="#G" x1="-6292" y1="-423" x2="343" y2="39"/><linearGradient id="ub" href="#R" x1="272" y1="33" x2="470" y2="50"/><linearGradient id="uc" href="#G" x1="-6136" y1="-503" x2="343" y2="39"/><linearGradient id="ud" href="#R" x1="272" y1="32" x2="470" y2="51"/><linearGradient id="ue" href="#G" x1="-5979" y1="-579" x2="344" y2="39"/><linearGradient id="uf" href="#R" x1="273" y1="31" x2="469" y2="51"/><linearGradient id="ug" href="#G" x1="-5756" y1="-585" x2="345" y2="38"/><linearGradient id="uh" href="#R" x1="273" y1="30" x2="468" y2="53"/><linearGradient id="ui" href="#G" x1="-5527" y1="-657" x2="346" y2="38"/><linearGradient id="uj" href="#R" x1="273" y1="29" x2="468" y2="53"/><linearGradient id="uk" href="#G" x1="-5287" y1="-662" x2="347" y2="38"/><linearGradient id="ul" href="#R" x1="273" y1="28" x2="468" y2="53"/><linearGradient id="um" href="#G" x1="-5059" y1="-658" x2="348" y2="37"/><linearGradient id="un" href="#R" x1="273" y1="26" x2="469" y2="56"/><linearGradient id="uo" href="#G" x1="-4842" y1="-742" x2="349" y2="38"/><linearGradient id="up" href="#R" x1="273" y1="25" x2="470" y2="56"/><linearGradient id="uq" href="#G" x1="-4592" y1="-742" x2="351" y2="38"/><linearGradient id="ur" href="#R" x1="273" y1="25" x2="470" y2="57"/><linearGradient id="us" href="#G" x1="-4351" y1="-742" x2="352" y2="38"/><linearGradient id="ut" href="#R" x1="270" y1="38" x2="476" y2="49"/><linearGradient id="uu" href="#B" x1="310" y1="40" x2="10605" y2="625"/><linearGradient id="uv" href="#R" x1="270" y1="37" x2="475" y2="51"/><linearGradient id="uw" href="#B" x1="310" y1="40" x2="3753" y2="277"/><linearGradient id="ux" href="#R" x1="270" y1="37" x2="475" y2="53"/><linearGradient id="uy" href="#B" x1="310" y1="40" x2="2359" y2="207"/><linearGradient id="uz" href="#R" x1="270" y1="36" x2="475" y2="56"/><linearGradient id="v0" href="#B" x1="310" y1="40" x2="1787" y2="179"/><linearGradient id="v1" href="#R" x1="270" y1="36" x2="475" y2="58"/><linearGradient id="v2" href="#B" x1="310" y1="40" x2="1457" y2="164"/><linearGradient id="v3" href="#R" x1="270" y1="35" x2="475" y2="60"/><linearGradient id="v4" href="#B" x1="310" y1="40" x2="1253" y2="156"/><linearGradient id="v5" href="#R" x1="270" y1="34" x2="474" y2="63"/><linearGradient id="v6" href="#B" x1="310" y1="40" x2="1108" y2="152"/><linearGradient id="v7" href="#R" x1="271" y1="34" x2="473" y2="66"/><linearGradient id="v8" href="#B" x1="310" y1="40" x2="1002" y2="151"/><linearGradient id="v9" href="#R" x1="271" y1="33" x2="473" y2="67"/><linearGradient id="va" href="#B" x1="310" y1="40" x2="927" y2="143"/><linearGradient id="vb" href="#R" x1="271" y1="33" x2="474" y2="71"/><linearGradient id="vc" href="#B" x1="310" y1="40" x2="869" y2="145"/><linearGradient id="vd" href="#R" x1="270" y1="32" x2="475" y2="75"/><linearGradient id="ve" href="#B" x1="310" y1="40" x2="827" y2="149"/><linearGradient id="vf" href="#R" x1="271" y1="31" x2="473" y2="77"/><linearGradient id="vg" href="#B" x1="310" y1="40" x2="787" y2="148"/><linearGradient id="vh" href="#R" x1="270" y1="31" x2="474" y2="78"/><linearGradient id="vi" href="#B" x1="310" y1="40" x2="731" y2="137"/><linearGradient id="vj" href="#R" x1="270" y1="46" x2="476" y2="16"/><linearGradient id="vk" href="#R" x1="270" y1="45" x2="477" y2="18"/><linearGradient id="vl" href="#R" x1="270" y1="45" x2="476" y2="19"/><linearGradient id="vm" href="#R" x1="270" y1="44" x2="475" y2="23"/><linearGradient id="vn" href="#R" x1="270" y1="43" x2="476" y2="26"/><linearGradient id="vo" href="#R" x1="270" y1="43" x2="476" y2="26"/><linearGradient id="vp" href="#R" x1="271" y1="43" x2="473" y2="29"/><linearGradient id="vq" href="#R" x1="270" y1="42" x2="474" y2="32"/><linearGradient id="vr" href="#R" x1="270" y1="41" x2="475" y2="34"/><linearGradient id="vs" href="#R" x1="270" y1="41" x2="475" y2="36"/><linearGradient id="vt" href="#R" x1="270" y1="40" x2="475" y2="38"/><linearGradient id="vu" href="#R" x1="270" y1="40" x2="475" y2="42"/><linearGradient id="vv" href="#R" x1="270" y1="39" x2="476" y2="46"/></defs>
</svg>
<svg width="540" height="420" style="position:absolute;left:0;top:0" shape-rendering="crispEdges" stroke-width="0.8">
<path fill="url(#0)" d="M338 313 329 325 442 339 448 327Z"/><path fill="url(#2)" d="M329 325 318 337 433 350 442 339Z"/><path fill="url(#4)" d="M318 337 304 347 422 360 433 350Z"/><path fill="url(#6)" d="M304 347 288 357 409 369 422 360Z"/><path fill="url(#8)" d="M288 357 270 364 393 377 409 369Z"/><path fill="url(#a)" d="M270 364 251 370 376 382 393 377Z"/><path fill="url(#c)" d="M251 370 231 374 357 386 376 382Z"/><path fill="url(#e)" stroke="url(#e)" d="M231 374 210 375 338 387 357 386Z"/><path fill="url(#g)" stroke="url(#g)" d="M210 375 189 375 318 387 338 387Z"/><path fill="url(#i)" stroke="url(#i)" d="M306 384 284 381 169 372 189 375Z"/><path fill="url(#k)" d="M284 381 263 375 151 366 169 372Z"/><path fill="url(#m)" d="M263 375 243 368 134 359 151 366Z"/><path fill="#000" d="M243 368 226 358 119 351 134 359Z"/><path fill="#000" d="M226 358 210 347 106 340 119 351Z"/><path fill="#000" d="M210 347 198 335 97 329 106 340Z"/><path fill="#000" d="M198 335 188 322 89 317 97 329Z"/><path fill="#000" d="M188 322 181 308 85 305 89 317Z"/><path fill="#000" d="M181 308 176 295 83 292 85 305Z"/><path fill="url(#u)" d="M369 305 360 318 446 330 453 317Z"/><path fill="url(#w)" d="M360 318 348 331 437 343 446 330Z"/><path fill="url(#y)" d="M348 331 333 342 424 354 437 343Z"/><path fill="url(#10)" d="M333 342 316 353 409 364 424 354Z"/><path fill="url(#12)" d="M316 353 296 361 391 373 409 364Z"/><path fill="url(#14)" d="M296 361 275 368 372 379 391 373Z"/><path fill="url(#16)" d="M275 368 252 372 351 383 372 379Z"/><path fill="url(#18)" d="M252 372 229 374 328 385 351 383Z"/><path fill="url(#1a)" stroke="url(#1a)" d="M229 374 206 373 306 384 328 385Z"/><path fill="url(#1c)" stroke="url(#1c)" d="M289 377 265 374 183 369 206 373Z"/><path fill="url(#1e)" d="M265 374 241 368 162 364 183 369Z"/><path fill="#000" d="M241 368 220 359 143 356 162 364Z"/><path fill="#000" d="M220 359 201 349 126 346 143 356Z"/><path fill="#000" d="M201 349 185 337 112 335 126 346Z"/><path fill="#000" d="M185 337 172 324 101 322 112 335Z"/><path fill="#000" d="M172 324 161 310 93 309 101 322Z"/><path fill="#000" d="M161 310 154 296 88 296 93 309Z"/><path fill="url(#1m)" d="M365 321 349 333 419 345 433 333Z"/><path fill="url(#1o)" d="M349 333 331 344 402 356 419 345Z"/><path fill="url(#1q)" d="M331 344 310 354 383 365 402 356Z"/><path fill="url(#1s)" d="M310 354 286 361 361 372 383 365Z"/><path fill="url(#1u)" d="M286 361 262 365 338 376 361 372Z"/><path fill="url(#1w)" d="M262 365 236 367 314 378 338 376Z"/><path fill="url(#1y)" stroke="url(#1y)" d="M236 367 211 366 289 377 314 378Z"/><path fill="url(#20)" stroke="url(#20)" d="M309 368 283 367 211 366 236 367Z"/><path fill="url(#22)" stroke="url(#22)" d="M283 367 256 364 186 362 211 366Z"/><path fill="url(#24)" d="M256 364 232 357 163 356 186 362Z"/><path fill="#000" d="M232 357 209 348 143 348 163 356Z"/><path fill="#000" d="M209 348 189 337 124 337 143 348Z"/><path fill="#000" d="M189 337 171 325 109 325 124 337Z"/><path fill="#000" d="M171 325 157 311 97 312 109 325Z"/><path fill="#000" d="M157 311 147 296 89 298 97 312Z"/><path fill="url(#2b)" d="M337 332 315 341 384 354 405 345Z"/><path fill="url(#2d)" d="M315 341 290 349 361 362 384 354Z"/><path fill="url(#2f)" d="M290 349 264 354 336 366 361 362Z"/><path fill="url(#2h)" d="M264 354 237 355 309 368 336 366Z"/><path fill="url(#2j)" d="M237 355 209 355 283 367 309 368Z"/><path fill="url(#2l)" stroke="url(#2l)" d="M209 355 183 351 256 364 283 367Z"/><path fill="url(#2n)" d="M304 356 276 352 183 351 209 355Z"/><path fill="url(#2p)" d="M276 352 249 345 159 344 183 351Z"/><path fill="url(#2r)" d="M249 345 225 336 136 335 159 344Z"/><path fill="#000" d="M225 336 203 324 117 324 136 335Z"/><path fill="#000" d="M203 324 184 311 101 312 117 324Z"/><path fill="#000" d="M184 311 169 297 89 298 101 312Z"/><path fill="url(#2w)" d="M388 261 377 275 477 292 485 277Z"/><path fill="url(#2y)" d="M377 275 364 290 466 306 477 292Z"/><path fill="url(#30)" d="M364 290 346 303 451 320 466 306Z"/><path fill="url(#32)" d="M346 303 325 314 433 332 451 320Z"/><path fill="url(#34)" d="M325 314 302 324 411 342 433 332Z"/><path fill="url(#36)" d="M302 324 276 332 386 350 411 342Z"/><path fill="url(#38)" d="M276 332 248 336 360 355 386 350Z"/><path fill="url(#3a)" d="M248 336 220 338 332 357 360 355Z"/><path fill="url(#3c)" d="M220 338 191 337 304 356 332 357Z"/><path fill="url(#3e)" stroke="url(#3e)" d="M191 337 164 333 276 352 304 356Z"/><path fill="url(#3g)" stroke="url(#3g)" d="M339 339 309 338 191 337 220 338Z"/><path fill="url(#3i)" d="M309 338 280 334 164 333 191 337Z"/><path fill="url(#3l)" d="M280 334 253 327 139 327 164 333Z"/><path fill="url(#3o)" d="M253 327 227 318 116 318 139 327Z"/><path fill="#000" d="M227 318 205 307 96 307 116 318Z"/><path fill="#000" d="M205 307 186 294 80 294 96 307Z"/><path fill="#000" d="M186 294 170 279 67 280 80 294Z"/><path fill="#000" d="M170 279 158 264 59 266 67 280Z"/><path fill="url(#3z)" d="M391 227 385 241 496 259 499 244Z"/><path fill="url(#42)" d="M385 241 374 256 488 274 496 259Z"/><path fill="url(#45)" d="M374 256 360 270 477 289 488 274Z"/><path fill="url(#48)" d="M360 270 342 283 462 302 477 289Z"/><path fill="url(#4b)" d="M342 283 320 294 443 314 462 302Z"/><path fill="url(#4e)" d="M320 294 296 304 421 324 443 314Z"/><path fill="url(#4h)" d="M296 304 269 311 395 332 421 324Z"/><path fill="url(#4k)" d="M269 311 241 316 368 337 395 332Z"/><path fill="url(#4n)" d="M241 316 212 318 339 339 368 337Z"/><path fill="url(#4q)" d="M212 318 183 317 309 338 339 339Z"/><path fill="url(#4t)" stroke="url(#4t)" d="M183 317 155 313 280 334 309 338Z"/><path fill="url(#4w)" stroke="url(#4w)" d="M339 317 309 316 183 317 212 318Z"/><path fill="url(#4z)" d="M309 316 280 312 155 313 183 317Z"/><path fill="url(#52)" d="M280 312 252 306 129 307 155 313Z"/><path fill="url(#55)" d="M252 306 226 296 106 298 129 307Z"/><path fill="#000" d="M226 296 203 285 86 287 106 298Z"/><path fill="#000" d="M203 285 184 273 69 274 86 287Z"/><path fill="#000" d="M184 273 168 259 57 261 69 274Z"/><path fill="#000" d="M168 259 156 244 48 246 57 261Z"/><path fill="#000" d="M156 244 148 229 43 232 48 246Z"/><path fill="url(#5i)" d="M380 220 369 234 490 254 498 239Z"/><path fill="url(#5l)" d="M369 234 355 248 479 268 490 254Z"/><path fill="url(#5o)" d="M355 248 336 260 464 281 479 268Z"/><path fill="url(#5r)" d="M336 260 315 271 445 293 464 281Z"/><path fill="url(#5u)" d="M315 271 290 280 422 303 445 293Z"/><path fill="url(#5x)" d="M290 280 264 287 396 310 422 303Z"/><path fill="url(#60)" d="M264 287 235 292 369 315 396 310Z"/><path fill="url(#63)" d="M235 292 206 294 339 317 369 315Z"/><path fill="url(#66)" d="M206 294 177 293 309 316 339 317Z"/><path fill="url(#69)" stroke="url(#69)" d="M177 293 149 289 280 312 309 316Z"/><path fill="url(#6c)" stroke="url(#6c)" d="M354 293 324 292 177 293 206 294Z"/><path fill="url(#6f)" d="M324 292 295 288 149 289 177 293Z"/><path fill="url(#6i)" d="M295 288 267 282 123 283 149 289Z"/><path fill="url(#6l)" d="M267 282 241 273 100 275 123 283Z"/><path fill="#000" d="M241 273 218 262 80 264 100 275Z"/><path fill="#000" d="M218 262 198 250 64 252 80 264Z"/><path fill="#000" d="M198 250 182 237 51 239 64 252Z"/><path fill="#000" d="M182 237 170 223 43 225 51 239Z"/><path fill="#000" d="M170 223 161 209 38 211 43 225Z"/><path fill="#000" d="M161 209 156 195 37 197 38 211Z"/><path fill="url(#70)" d="M381 172 377 185 513 204 513 190Z"/><path fill="url(#73)" d="M377 185 370 198 510 218 513 204Z"/><path fill="url(#76)" d="M370 198 359 211 503 232 510 218Z"/><path fill="url(#79)" d="M359 211 345 224 492 246 503 232Z"/><path fill="url(#7c)" d="M345 224 327 235 477 258 492 246Z"/><path fill="url(#7f)" d="M327 235 306 246 458 270 477 258Z"/><path fill="url(#7i)" d="M306 246 281 254 436 279 458 270Z"/><path fill="url(#7l)" d="M281 254 255 261 411 286 436 279Z"/><path fill="url(#7o)" d="M255 261 227 265 383 291 411 286Z"/><path fill="url(#7r)" d="M227 265 198 267 354 293 383 291Z"/><path fill="url(#7u)" d="M198 267 170 266 324 292 354 293Z"/><path fill="url(#7x)" stroke="url(#7x)" d="M170 266 143 262 295 288 324 292Z"/><path fill="url(#80)" stroke="url(#80)" d="M361 265 332 264 170 266 198 267Z"/><path fill="url(#83)" d="M332 264 304 260 143 262 170 266Z"/><path fill="url(#86)" d="M304 260 276 255 117 257 143 262Z"/><path fill="url(#89)" d="M276 255 251 247 95 249 117 257Z"/><path fill="url(#8c)" d="M251 247 229 237 75 239 95 249Z"/><path fill="#000" d="M229 237 209 226 60 228 75 239Z"/><path fill="#000" d="M209 226 193 213 48 216 60 228Z"/><path fill="#000" d="M193 213 181 201 39 203 48 216Z"/><path fill="#000" d="M181 201 172 187 35 190 39 203Z"/><path fill="#000" d="M172 187 167 174 34 176 35 190Z"/><path fill="#000" d="M167 174 165 162 36 164 34 176Z"/><path fill="#000" d="M165 162 167 149 41 151 36 164Z"/><path fill="url(#8t)" d="M376 140 375 152 514 170 511 157Z"/><path fill="url(#8w)" d="M375 152 371 164 515 183 514 170Z"/><path fill="url(#8z)" d="M371 164 364 176 512 196 515 183Z"/><path fill="url(#92)" d="M364 176 354 188 505 209 512 196Z"/><path fill="url(#95)" d="M354 188 340 199 494 222 505 209Z"/><path fill="url(#98)" d="M340 199 322 209 480 233 494 222Z"/><path fill="url(#9b)" d="M322 209 302 219 462 243 480 233Z"/><path fill="url(#9e)" d="M302 219 279 227 440 252 462 243Z"/><path fill="url(#9h)" d="M279 227 253 232 416 259 440 252Z"/><path fill="url(#9k)" d="M253 232 226 236 389 263 416 259Z"/><path fill="url(#9n)" d="M226 236 199 238 361 265 389 263Z"/><path fill="url(#9q)" d="M199 238 172 237 332 264 361 265Z"/><path fill="url(#9t)" stroke="url(#9t)" d="M172 237 146 234 304 260 332 264Z"/><path fill="url(#9w)" d="M353 100 362 109 486 123 473 114Z"/><path fill="url(#9y)" d="M362 109 369 118 496 134 486 123Z"/><path fill="url(#a0)" d="M369 118 374 129 505 145 496 134Z"/><path fill="url(#a2)" d="M374 129 376 140 511 157 505 145Z"/><path fill="url(#a4)" stroke="url(#a4)" d="M344 233 317 232 172 237 199 238Z"/><path fill="url(#a7)" d="M317 232 290 229 146 234 172 237Z"/><path fill="url(#aa)" d="M290 229 265 224 122 229 146 234Z"/><path fill="url(#ad)" d="M265 224 241 217 100 222 122 229Z"/><path fill="#000" d="M241 217 220 208 81 213 100 222Z"/><path fill="#000" d="M220 208 202 198 66 203 81 213Z"/><path fill="#000" d="M202 198 187 188 54 192 66 203Z"/><path fill="#000" d="M187 188 176 176 46 180 54 192Z"/><path fill="#000" d="M176 176 168 164 42 168 46 180Z"/><path fill="#000" d="M168 164 163 153 40 156 42 168Z"/><path fill="#000" d="M163 153 161 141 42 144 40 156Z"/><path fill="#000" d="M161 141 162 130 47 133 42 144Z"/><path fill="#000" d="M162 130 166 119 54 122 47 133Z"/><path fill="#000" d="M166 119 173 109 64 112 54 122Z"/><path fill="url(#b0)" d="M406 123 406 134 493 149 490 137Z"/><path fill="url(#b3)" d="M406 134 403 145 493 160 493 149Z"/><path fill="url(#b6)" d="M403 145 397 155 489 172 493 160Z"/><path fill="url(#b9)" d="M397 155 388 166 482 184 489 172Z"/><path fill="url(#bc)" d="M388 166 376 176 472 195 482 184Z"/><path fill="url(#bf)" d="M376 176 360 186 457 205 472 195Z"/><path fill="url(#bi)" d="M360 186 342 194 440 214 457 205Z"/><path fill="url(#bl)" d="M342 194 321 201 419 222 440 214Z"/><path fill="url(#bo)" d="M321 201 297 206 396 228 419 222Z"/><path fill="url(#br)" d="M297 206 273 209 371 231 396 228Z"/><path fill="url(#bu)" d="M273 209 247 211 344 233 371 231Z"/><path fill="url(#bx)" d="M247 211 222 210 317 232 344 233Z"/><path fill="url(#c0)" stroke="url(#c0)" d="M222 210 197 207 290 229 317 232Z"/><path fill="url(#c3)" stroke="url(#c3)" d="M197 207 174 203 265 224 290 229Z"/><path fill="url(#c6)" d="M390 95 398 104 477 116 468 106Z"/><path fill="url(#c8)" d="M398 104 403 113 485 126 477 116Z"/><path fill="url(#ca)" d="M403 113 406 123 490 137 485 126Z"/><path fill="url(#cc)" d="M348 162 333 171 360 186 376 176Z"/><path fill="url(#cf)" d="M333 171 314 178 342 194 360 186Z"/><path fill="url(#ci)" d="M314 178 294 185 321 201 342 194Z"/><path fill="url(#cl)" d="M294 185 272 190 297 206 321 201Z"/><path fill="url(#co)" d="M272 190 248 193 273 209 297 206Z"/><path fill="url(#cr)" d="M248 193 224 194 247 211 273 209Z"/><path fill="#000" d="M224 194 199 193 222 210 247 211Z"/><path fill="#000" d="M199 193 176 191 197 207 222 210Z"/><path fill="#000" d="M176 191 154 187 174 203 197 207Z"/><path fill="#000" d="M154 187 134 181 153 196 174 203Z"/><path fill="#000" d="M134 181 117 173 134 189 153 196Z"/><path fill="#000" d="M117 173 103 165 119 180 134 189Z"/><path fill="#000" stroke="#000" d="M103 165 91 156 106 170 119 180Z"/><path fill="url(#d8)" stroke="url(#d8)" d="M334 186 311 185 199 193 224 194Z"/><path fill="url(#db)" d="M311 185 288 183 176 191 199 193Z"/><path fill="url(#de)" d="M288 183 266 179 154 187 176 191Z"/><path fill="url(#dh)" d="M266 179 245 173 134 181 154 187Z"/><path fill="#000" d="M245 173 227 166 117 173 134 181Z"/><path fill="#000" d="M227 166 211 158 103 165 117 173Z"/><path fill="#000" d="M211 158 197 150 91 156 103 165Z"/><path fill="#000" d="M197 150 187 141 83 146 91 156Z"/><path fill="#000" d="M187 141 180 131 78 136 83 146Z"/><path fill="#000" d="M180 131 175 121 76 126 78 136Z"/><path fill="url(#dw)" d="M337 94 335 102 467 118 466 109Z"/><path fill="url(#dz)" d="M335 102 331 111 466 128 467 118Z"/><path fill="url(#e2)" d="M331 111 325 119 463 137 466 128Z"/><path fill="url(#e5)" d="M325 119 315 128 456 147 463 137Z"/><path fill="url(#e8)" d="M315 128 303 135 446 156 456 147Z"/><path fill="url(#eb)" d="M303 135 289 142 433 164 446 156Z"/><path fill="url(#ee)" d="M289 142 272 149 418 171 433 164Z"/><path fill="url(#eh)" d="M272 149 254 154 399 177 418 171Z"/><path fill="url(#ek)" d="M254 154 233 158 379 181 399 177Z"/><path fill="url(#en)" d="M233 158 212 160 357 184 379 181Z"/><path fill="url(#eq)" d="M212 160 191 162 334 186 357 184Z"/><path fill="url(#et)" stroke="url(#et)" d="M191 162 170 161 311 185 334 186Z"/><path fill="url(#ew)" stroke="url(#ew)" d="M170 161 149 159 288 183 311 185Z"/><path fill="url(#ez)" d="M321 64 328 71 447 83 437 76Z"/><path fill="url(#f1)" d="M328 71 333 78 455 91 447 83Z"/><path fill="url(#f3)" d="M333 78 336 86 462 100 455 91Z"/><path fill="url(#f5)" d="M336 86 337 94 466 109 462 100Z"/><path fill="url(#f7)" stroke="url(#f7)" d="M324 155 304 154 170 161 191 162Z"/><path fill="url(#fa)" d="M304 154 284 152 149 159 170 161Z"/><path fill="url(#fd)" d="M284 152 265 149 130 155 149 159Z"/><path fill="url(#fg)" d="M265 149 247 145 113 151 130 155Z"/><path fill="#000" d="M247 145 231 139 98 145 113 151Z"/><path fill="#000" d="M231 139 217 133 85 138 98 145Z"/><path fill="#000" d="M217 133 206 126 76 130 85 138Z"/><path fill="#000" d="M206 126 196 118 69 122 76 130Z"/><path fill="#000" d="M196 118 190 110 65 114 69 122Z"/><path fill="#000" d="M190 110 185 102 63 105 65 114Z"/><path fill="#000" d="M185 102 184 94 64 97 63 105Z"/><path fill="#000" d="M184 94 184 86 67 89 64 97Z"/><path fill="#000" d="M184 86 187 79 73 81 67 89Z"/><path fill="#000" d="M187 79 191 72 80 73 73 81Z"/><path fill="#000" d="M191 72 198 65 89 67 80 73Z"/><path fill="#000" d="M198 65 206 59 100 60 89 67Z"/><path fill="url(#g5)" d="M414 83 414 90 444 99 443 91Z"/><path fill="url(#g8)" d="M414 90 412 97 442 107 444 99Z"/><path fill="url(#gb)" d="M412 97 408 104 439 115 442 107Z"/><path fill="url(#ge)" d="M408 104 402 111 432 123 439 115Z"/><path fill="url(#gh)" d="M402 111 393 117 423 130 432 123Z"/><path fill="url(#gk)" d="M393 117 382 123 411 137 423 130Z"/><path fill="url(#gn)" d="M382 123 368 128 398 143 411 137Z"/><path fill="url(#gq)" d="M368 128 353 133 381 148 398 143Z"/><path fill="url(#gt)" d="M353 133 337 136 364 151 381 148Z"/><path fill="url(#gw)" d="M337 136 319 138 344 154 364 151Z"/><path fill="url(#gz)" d="M319 138 301 139 324 155 344 154Z"/><path fill="url(#h2)" d="M301 139 282 138 304 154 324 155Z"/><path fill="url(#h5)" d="M282 138 264 137 284 152 304 154Z"/><path fill="url(#h8)" d="M264 137 247 134 265 149 284 152Z"/><path fill="url(#hb)" d="M247 134 231 130 247 145 265 149Z"/><path fill="#000" d="M231 130 216 125 231 139 247 145Z"/><path fill="#000" d="M216 125 204 119 217 133 231 139Z"/><path fill="#000" d="M204 119 193 113 206 126 217 133Z"/><path fill="url(#hk)" d="M407 69 412 76 440 84 435 76Z"/><path fill="url(#hm)" d="M412 76 414 83 443 91 440 84Z"/><path fill="url(#ho)" d="M306 77 302 83 412 97 414 90Z"/><path fill="url(#hr)" d="M302 83 296 89 408 104 412 97Z"/><path fill="url(#hu)" d="M296 89 288 95 402 111 408 104Z"/><path fill="url(#hx)" d="M288 95 278 101 393 117 402 111Z"/><path fill="url(#i0)" d="M278 101 267 106 382 123 393 117Z"/><path fill="url(#i3)" d="M267 106 254 110 368 128 382 123Z"/><path fill="url(#i6)" d="M254 110 239 114 353 133 368 128Z"/><path fill="url(#i9)" d="M239 114 223 117 337 136 353 133Z"/><path fill="url(#ic)" d="M223 117 207 118 319 138 337 136Z"/><path fill="url(#if)" d="M207 118 191 119 301 139 319 138Z"/><path fill="url(#ii)" stroke="url(#ii)" d="M191 119 174 119 282 138 301 139Z"/><path fill="url(#il)" stroke="url(#il)" d="M174 119 159 117 264 137 282 138Z"/><path fill="url(#io)" stroke="url(#io)" d="M159 117 144 115 247 134 264 137Z"/><path fill="url(#ir)" stroke="url(#ir)" d="M287 107 273 109 207 118 223 117Z"/><path fill="url(#iu)" stroke="url(#iu)" d="M273 109 258 110 191 119 207 118Z"/><path fill="#000" stroke="#000" d="M258 110 243 109 174 119 191 119Z"/><path fill="#000" d="M243 109 229 108 159 117 174 119Z"/><path fill="#000" d="M229 108 215 106 144 115 159 117Z"/><path fill="#000" d="M215 106 202 103 130 112 144 115Z"/><path fill="#000" d="M202 103 191 99 119 107 130 112Z"/><path fill="#000" d="M191 99 181 95 109 103 119 107Z"/><path fill="#000" d="M181 95 173 90 101 97 109 103Z"/><path fill="#000" d="M173 90 166 85 95 91 101 97Z"/><path fill="#000" d="M166 85 162 80 91 85 95 91Z"/><path fill="#000" d="M162 80 159 74 89 79 91 85Z"/><path fill="#000" d="M159 74 158 69 90 73 89 79Z"/><path fill="#000" d="M158 69 159 63 92 67 90 73Z"/><path fill="#000" d="M159 63 161 58 96 61 92 67Z"/><path fill="#000" d="M161 58 165 53 101 55 96 61Z"/><path fill="#000" d="M165 53 171 48 108 50 101 55Z"/><path fill="#000" d="M171 48 177 44 116 45 108 50Z"/><path fill="#000" d="M177 44 185 40 126 41 116 45Z"/><path fill="#000" d="M185 40 194 36 136 37 126 41Z"/><path fill="#000" stroke="#000" d="M194 36 203 33 147 34 136 37Z"/><path fill="url(#ju)" stroke="url(#ju)" d="M361 103 348 102 243 109 258 110Z"/><path fill="url(#jx)" stroke="url(#jx)" d="M348 102 334 101 229 108 243 109Z"/><path fill="url(#k0)" stroke="url(#k0)" d="M334 101 322 99 215 106 229 108Z"/><path fill="url(#k3)" d="M322 99 310 97 202 103 215 106Z"/><path fill="url(#k6)" d="M310 97 298 94 191 99 202 103Z"/><path fill="url(#k9)" d="M298 94 288 90 181 95 191 99Z"/><path fill="url(#kc)" d="M288 90 280 86 173 90 181 95Z"/><path fill="url(#kf)" d="M280 86 273 81 166 85 173 90Z"/><path fill="url(#ki)" d="M273 81 267 76 162 80 166 85Z"/><path fill="url(#kl)" d="M267 76 263 71 159 74 162 80Z"/><path fill="#000" d="M263 71 260 66 158 69 159 74Z"/><path fill="url(#kq)" d="M369 57 369 61 439 70 438 65Z"/><path fill="url(#kt)" d="M369 61 367 65 438 75 439 70Z"/><path fill="url(#kw)" d="M367 65 363 69 435 79 438 75Z"/><path fill="url(#kz)" d="M363 69 359 73 431 84 435 79Z"/><path fill="url(#l2)" d="M359 73 353 76 425 88 431 84Z"/><path fill="url(#l5)" d="M353 76 346 79 417 92 425 88Z"/><path fill="url(#l8)" d="M346 79 337 82 408 96 417 92Z"/><path fill="url(#lb)" d="M337 82 328 85 398 99 408 96Z"/><path fill="url(#le)" d="M328 85 318 86 386 101 398 99Z"/><path fill="url(#lh)" d="M318 86 307 87 374 102 386 101Z"/><path fill="url(#lk)" d="M307 87 296 88 361 103 374 102Z"/><path fill="url(#ln)" stroke="url(#ln)" d="M296 88 285 88 348 102 361 103Z"/><path fill="url(#lq)" stroke="url(#lq)" d="M285 88 274 87 334 101 348 102Z"/><path fill="url(#lt)" stroke="url(#lt)" d="M274 87 264 85 322 99 334 101Z"/><path fill="url(#lw)" stroke="url(#lw)" d="M264 85 254 83 310 97 322 99Z"/><path fill="url(#lz)" stroke="url(#lz)" d="M307 26 315 27 369 30 359 28Z"/><path fill="url(#m1)" stroke="url(#m1)" d="M315 27 324 28 379 31 369 30Z"/><path fill="url(#m3)" stroke="url(#m3)" d="M324 28 332 30 389 33 379 31Z"/><path fill="url(#m5)" stroke="url(#m5)" d="M332 30 340 32 398 36 389 33Z"/><path fill="url(#m7)" stroke="url(#m7)" d="M340 32 347 35 407 39 398 36Z"/><path fill="url(#m9)" stroke="url(#m9)" d="M347 35 353 38 415 43 407 39Z"/><path fill="url(#mb)" stroke="url(#mb)" d="M353 38 358 41 422 46 415 43Z"/><path fill="url(#md)" d="M358 41 363 45 428 51 422 46Z"/><path fill="url(#mf)" d="M363 45 366 48 433 55 428 51Z"/><path fill="url(#mh)" d="M366 48 368 52 436 60 433 55Z"/><path fill="url(#mj)" d="M368 52 369 57 438 65 436 60Z"/><path fill="url(#ml)" d="M264 48 263 51 369 61 369 57Z"/><path fill="url(#mo)" d="M263 51 260 54 367 65 369 61Z"/><path fill="url(#mr)" d="M260 54 256 57 363 69 367 65Z"/><path fill="url(#mu)" d="M256 57 251 61 359 73 363 69Z"/><path fill="url(#mx)" d="M251 61 245 63 353 76 359 73Z"/><path fill="url(#n0)" d="M245 63 239 66 346 79 353 76Z"/><path fill="url(#n3)" d="M239 66 231 68 337 82 346 79Z"/><path fill="url(#n6)" d="M231 68 223 70 328 85 337 82Z"/><path fill="url(#n9)" stroke="url(#n9)" d="M223 70 214 71 318 86 328 85Z"/><path fill="url(#nc)" stroke="url(#nc)" d="M214 71 205 72 307 87 318 86Z"/><path fill="url(#nf)" stroke="url(#nf)" d="M205 72 196 72 296 88 307 87Z"/><path fill="url(#ni)" stroke="url(#ni)" d="M196 72 187 72 285 88 296 88Z"/><path fill="url(#nl)" stroke="url(#nl)" d="M187 72 178 72 274 87 285 88Z"/><path fill="url(#no)" stroke="url(#no)" d="M220 22 228 23 315 27 307 26Z"/><path fill="url(#nq)" stroke="url(#nq)" d="M228 23 234 24 324 28 315 27Z"/><path fill="url(#ns)" stroke="url(#ns)" d="M234 24 241 26 332 30 324 28Z"/><path fill="url(#nu)" stroke="url(#nu)" d="M241 26 246 28 340 32 332 30Z"/><path fill="url(#nw)" stroke="url(#nw)" d="M246 28 252 30 347 35 340 32Z"/><path fill="url(#ny)" stroke="url(#ny)" d="M252 30 256 32 353 38 347 35Z"/><path fill="url(#o0)" stroke="url(#o0)" d="M256 32 260 35 358 41 353 38Z"/><path fill="url(#o2)" d="M260 35 262 38 363 45 358 41Z"/><path fill="url(#o4)" stroke="url(#o4)" d="M262 38 264 41 366 48 363 45Z"/><path fill="url(#o6)" d="M264 41 265 44 368 52 366 48Z"/><path fill="url(#o8)" d="M265 44 264 48 369 57 368 52Z"/><path fill="#000" stroke="#000" d="M253 59 247 61 231 68 239 66Z"/><path fill="#000" stroke="#000" d="M247 61 240 62 223 70 231 68Z"/><path fill="#000" stroke="#000" d="M240 62 233 63 214 71 223 70Z"/><path fill="#000" stroke="#000" d="M233 63 226 64 205 72 214 71Z"/><path fill="#000" stroke="#000" d="M226 64 219 64 196 72 205 72Z"/><path fill="#000" stroke="#000" d="M219 64 212 64 187 72 196 72Z"/><path fill="#000" stroke="#000" d="M212 64 205 63 178 72 187 72Z"/><path fill="#000" d="M205 63 198 62 170 70 178 72Z"/><path fill="#000" stroke="#000" d="M198 62 192 61 162 69 170 70Z"/><path fill="#000" stroke="#000" d="M192 61 186 60 156 67 162 69Z"/><path fill="#000" d="M186 60 181 58 150 64 156 67Z"/><path fill="#000" d="M181 58 177 55 145 62 150 64Z"/><path fill="#000" d="M177 55 174 53 141 59 145 62Z"/><path fill="#000" d="M174 53 172 51 138 55 141 59Z"/><path fill="#000" d="M172 51 170 48 137 52 138 55Z"/><path fill="#000" stroke="#000" d="M170 48 170 45 137 49 137 52Z"/><path fill="#000" stroke="#000" d="M170 45 170 43 137 45 137 49Z"/><path fill="#000" stroke="#000" d="M170 43 171 40 139 42 137 45Z"/><path fill="#000" stroke="#000" d="M171 40 173 38 142 39 139 42Z"/><path fill="#000" stroke="#000" d="M173 38 176 35 146 36 142 39Z"/><path fill="#000" stroke="#000" d="M176 35 179 33 150 33 146 36Z"/><path fill="#000" stroke="#000" d="M179 33 184 31 156 31 150 33Z"/><path fill="#000" stroke="#000" d="M184 31 188 29 162 28 156 31Z"/><path fill="#000" stroke="#000" d="M188 29 193 27 168 26 162 28Z"/><path fill="#000" stroke="#000" d="M193 27 199 26 175 25 168 26Z"/><path fill="#000" stroke="#000" d="M199 26 205 25 182 24 175 25Z"/><path fill="#000" stroke="#000" d="M205 25 211 24 190 23 182 24Z"/><path fill="#000" stroke="#000" d="M211 24 217 24 198 22 190 23Z"/><path fill="#000" stroke="#000" d="M217 24 224 23 205 22 198 22Z"/><path fill="#000" stroke="#000" d="M224 23 230 23 213 22 205 22Z"/><path fill="#000000" d="M302 43 300 47 298 49 295 51 288 54 284 55 274 57 247 61 226 64 212 64 198 62 186 60 181 58 174 53 172 51 170 48 170 43 171 40 176 35 179 33 188 29 193 27 211 24 224 23 230 23 272 27 281 28 285 29 293 32 298 35 300 37 302 41Z"/><path fill="url(#pn)" stroke="url(#pn)" d="M274 57 269 57 226 64 233 63Z"/><path fill="url(#pq)" stroke="url(#pq)" d="M269 57 263 57 219 64 226 64Z"/><path fill="#000" stroke="#000" d="M263 57 258 57 212 64 219 64Z"/><path fill="#000" stroke="#000" d="M258 57 253 57 205 63 212 64Z"/><path fill="#000" stroke="#000" d="M253 57 248 56 198 62 205 63Z"/><path fill="#000" stroke="#000" d="M248 56 243 55 192 61 198 62Z"/><path fill="#000" stroke="#000" d="M243 55 238 54 186 60 192 61Z"/><path fill="#000" stroke="#000" d="M238 54 235 53 181 58 186 60Z"/><path fill="#000" stroke="#000" d="M235 53 231 51 177 55 181 58Z"/><path fill="#000" stroke="#000" d="M231 51 228 49 174 53 177 55Z"/><path fill="#000" stroke="#000" d="M228 49 226 48 172 51 174 53Z"/><path fill="#000" stroke="#000" d="M226 48 225 46 170 48 172 51Z"/><path fill="#000" stroke="#000" d="M225 46 224 44 170 45 170 48Z"/><path fill="#000" stroke="#000" d="M224 44 224 42 170 43 170 45Z"/><path fill="#000" stroke="#000" d="M224 42 224 40 171 40 170 43Z"/><path fill="#000" stroke="#000" d="M224 40 225 38 173 38 171 40Z"/><path fill="#000" stroke="#000" d="M225 38 227 36 176 35 173 38Z"/><path fill="#000" stroke="#000" d="M227 36 230 34 179 33 176 35Z"/><path fill="#000" stroke="#000" d="M230 34 233 32 184 31 179 33Z"/><path fill="#000" stroke="#000" d="M233 32 236 31 188 29 184 31Z"/><path fill="#000" stroke="#000" d="M236 31 240 30 193 27 188 29Z"/><path fill="#000" stroke="#000" d="M240 30 244 29 199 26 193 27Z"/><path fill="#000" stroke="#000" d="M244 29 248 28 205 25 199 26Z"/><path fill="#000" stroke="#000" d="M248 28 253 27 211 24 205 25Z"/><path fill="#000" stroke="#000" d="M253 27 258 27 217 24 211 24Z"/><path fill="#000" stroke="#000" d="M258 27 262 27 224 23 217 24Z"/><path fill="#000" stroke="#000" d="M262 27 267 27 230 23 224 23Z"/><path fill="#000000" d="M335 44 333 46 329 49 321 51 314 52 274 57 253 57 238 54 235 53 231 51 226 48 224 44 224 40 225 38 227 36 233 32 236 31 248 28 253 27 272 27 313 31 320 32 323 33 328 35 332 37 333 38 335 41Z"/><path fill="url(#qw)" stroke="url(#qw)" d="M314 52 311 52 263 57 269 57Z"/><path fill="url(#qz)" stroke="url(#qz)" d="M311 52 307 52 258 57 263 57Z"/><path fill="url(#r2)" stroke="url(#r2)" d="M307 52 303 52 253 57 258 57Z"/><path fill="url(#r5)" stroke="url(#r5)" d="M303 52 300 51 248 56 253 57Z"/><path fill="url(#r8)" stroke="url(#r8)" d="M300 51 297 51 243 55 248 56Z"/><path fill="url(#rb)" stroke="url(#rb)" d="M297 51 294 50 238 54 243 55Z"/><path fill="url(#re)" stroke="url(#re)" d="M294 50 291 49 235 53 238 54Z"/><path fill="url(#rh)" stroke="url(#rh)" d="M291 49 288 48 231 51 235 53Z"/><path fill="url(#rk)" stroke="url(#rk)" d="M288 48 286 47 228 49 231 51Z"/><path fill="url(#rn)" stroke="url(#rn)" d="M286 47 285 45 226 48 228 49Z"/><path fill="url(#rq)" stroke="url(#rq)" d="M285 45 283 44 225 46 226 48Z"/><path fill="url(#rt)" stroke="url(#rt)" d="M283 44 283 43 224 44 225 46Z"/><path fill="url(#rw)" stroke="url(#rw)" d="M283 43 282 41 224 42 224 44Z"/><path fill="url(#rz)" stroke="url(#rz)" d="M282 41 282 40 224 40 224 42Z"/><path fill="url(#s2)" stroke="url(#s2)" d="M282 40 283 39 225 38 224 40Z"/><path fill="url(#s5)" stroke="url(#s5)" d="M283 39 284 37 227 36 225 38Z"/><path fill="url(#s7)" stroke="url(#s7)" d="M284 37 285 36 230 34 227 36Z"/><path fill="url(#s9)" stroke="url(#s9)" d="M285 36 287 35 233 32 230 34Z"/><path fill="url(#sb)" stroke="url(#sb)" d="M287 35 289 34 236 31 233 32Z"/><path fill="url(#sd)" stroke="url(#sd)" d="M289 34 291 33 240 30 236 31Z"/><path fill="url(#sf)" stroke="url(#sf)" d="M291 33 294 33 244 29 240 30Z"/><path fill="url(#sh)" stroke="url(#sh)" d="M294 33 297 32 248 28 244 29Z"/><path fill="url(#sj)" stroke="url(#sj)" d="M297 32 300 32 253 27 248 28Z"/><path fill="url(#sl)" stroke="url(#sl)" d="M300 32 303 31 258 27 253 27Z"/><path fill="url(#sn)" stroke="url(#sn)" d="M303 31 307 31 262 27 258 27Z"/><path fill="url(#sp)" stroke="url(#sp)" d="M307 31 310 31 267 27 262 27Z"/><path fill="url(#sr)" stroke="url(#sr)" d="M310 31 313 31 272 27 267 27Z"/><path fill="#300000" d="M354 43 353 44 351 45 348 46 344 47 321 51 314 52 303 52 297 51 288 48 286 47 283 44 282 41 282 40 284 37 285 36 291 33 303 31 313 31 320 32 342 36 347 37 350 38 352 39 354 41Z"/><path fill="url(#st)" stroke="url(#st)" d="M347 46 345 46 318 51 321 51Z"/><path fill="url(#sw)" stroke="url(#sw)" d="M344 47 342 47 311 52 314 52Z"/><path fill="url(#sz)" stroke="url(#sz)" d="M342 47 340 47 307 52 311 52Z"/><path fill="url(#t2)" stroke="url(#t2)" d="M340 47 338 46 303 52 307 52Z"/><path fill="url(#t5)" stroke="url(#t5)" d="M338 46 337 46 300 51 303 52Z"/><path fill="url(#t8)" stroke="url(#t8)" d="M337 46 335 46 297 51 300 51Z"/><path fill="url(#tb)" stroke="url(#tb)" d="M335 46 333 46 294 50 297 51Z"/><path fill="url(#te)" stroke="url(#te)" d="M333 46 332 45 291 49 294 50Z"/><path fill="url(#th)" stroke="url(#th)" d="M332 45 331 45 288 48 291 49Z"/><path fill="url(#tk)" stroke="url(#tk)" d="M331 45 329 44 286 47 288 48Z"/><path fill="url(#tn)" stroke="url(#tn)" d="M329 44 329 43 285 45 286 47Z"/><path fill="url(#tq)" stroke="url(#tq)" d="M329 43 328 43 283 44 285 45Z"/><path fill="url(#tt)" stroke="url(#tt)" d="M328 43 327 42 283 43 283 44Z"/><path fill="url(#tw)" stroke="url(#tw)" d="M327 42 327 41 282 41 283 43Z"/><path fill="url(#tz)" stroke="url(#tz)" d="M327 41 282 40 282 41Z"/><path fill="url(#u2)" stroke="url(#u2)" d="M327 41 327 40 283 39 282 40Z"/><path fill="url(#u5)" stroke="url(#u5)" d="M327 40 328 39 284 37 283 39Z"/><path fill="url(#u7)" stroke="url(#u7)" d="M328 39 285 36 284 37Z"/><path fill="url(#u9)" stroke="url(#u9)" d="M328 39 329 38 287 35 285 36Z"/><path fill="url(#ub)" stroke="url(#ub)" d="M329 38 330 38 289 34 287 35Z"/><path fill="url(#ud)" stroke="url(#ud)" d="M330 38 331 37 291 33 289 34Z"/><path fill="url(#uf)" stroke="url(#uf)" d="M331 37 332 37 294 33 291 33Z"/><path fill="url(#uh)" stroke="url(#uh)" d="M332 37 334 37 297 32 294 33Z"/><path fill="url(#uj)" stroke="url(#uj)" d="M334 37 335 36 300 32 297 32Z"/><path fill="url(#ul)" stroke="url(#ul)" d="M335 36 337 36 303 31 300 32Z"/><path fill="url(#un)" stroke="url(#un)" d="M337 36 339 36 307 31 303 31Z"/><path fill="url(#up)" stroke="url(#up)" d="M339 36 341 36 310 31 307 31Z"/><path fill="url(#ur)" stroke="url(#ur)" d="M341 36 342 36 313 31 310 31Z"/><path fill="#570000" d="M354 43 353 44 351 45 348 46 344 47 340 47 333 46 310 40 335 36 342 36 347 37 350 38 352 39 354 41Z"/><path fill="url(#ut)" stroke="url(#ut)" d="M310 40 354 43 354 42Z"/><path fill="url(#uv)" stroke="url(#uv)" d="M310 40 353 43 354 43Z"/><path fill="url(#ux)" stroke="url(#ux)" d="M310 40 353 44 353 43Z"/><path fill="url(#uz)" stroke="url(#uz)" d="M310 40 352 44 353 44Z"/><path fill="url(#v1)" stroke="url(#v1)" d="M310 40 351 45 352 44Z"/><path fill="url(#v3)" stroke="url(#v3)" d="M310 40 350 45 351 45Z"/><path fill="url(#v5)" stroke="url(#v5)" d="M310 40 348 46 350 45Z"/><path fill="url(#v7)" stroke="url(#v7)" d="M310 40 347 46 348 46Z"/><path fill="url(#v9)" stroke="url(#v9)" d="M310 40 345 46 347 46Z"/><path fill="url(#vb)" stroke="url(#vb)" d="M310 40 344 47 345 46Z"/><path fill="url(#vd)" stroke="url(#vd)" d="M310 40 342 47 344 47Z"/><path fill="url(#vf)" stroke="url(#vf)" d="M310 40 340 47 342 47Z"/><path fill="url(#vh)" stroke="url(#vh)" d="M310 40 335 46 337 46Z"/><path fill="url(#vj)" stroke="url(#vj)" d="M310 40 339 36 337 36Z"/><path fill="url(#vk)" stroke="url(#vk)" d="M310 40 341 36 339 36Z"/><path fill="url(#vl)" stroke="url(#vl)" d="M310 40 342 36 341 36Z"/><path fill="url(#vm)" stroke="url(#vm)" d="M310 40 344 37 342 36Z"/><path fill="url(#vn)" stroke="url(#vn)" d="M310 40 346 37 344 37Z"/><path fill="url(#vo)" stroke="url(#vo)" d="M310 40 347 37 346 37Z"/><path fill="url(#vp)" stroke="url(#vp)" d="M310 40 348 38 347 37Z"/><path fill="url(#vq)" stroke="url(#vq)" d="M310 40 350 38 348 38Z"/><path fill="url(#vr)" stroke="url(#vr)" d="M310 40 351 39 350 38Z"/><path fill="url(#vs)" stroke="url(#vs)" d="M310 40 352 39 351 39Z"/><path fill="url(#vt)" stroke="url(#vt)" d="M310 40 353 40 352 39Z"/><path fill="url(#vu)" stroke="url(#vu)" d="M310 40 353 41 353 40Z"/><path fill="url(#vv)" stroke="url(#vv)" d="M310 40 354 42 354 41Z"/>
</svg>
<svg width="540" height="420" style="position:absolute;left:0;top:0;mix-blend-mode:screen" shape-rendering="crispEdges" stroke-width="0.8">
<path fill="#000" d="M338 313 329 325 442 339 448 327Z"/><path fill="#000" d="M329 325 318 337 433 350 442 339Z"/><path fill="#000" d="M318 337 304 347 422 360 433 350Z"/><path fill="#000" d="M304 347 288 357 409 369 422 360Z"/><path fill="#000" d="M288 357 270 364 393 377 409 369Z"/><path fill="#000" d="M270 364 251 370 376 382 393 377Z"/><path fill="#000" d="M251 370 231 374 357 386 376 382Z"/><path fill="#000" stroke="#000" d="M231 374 210 375 338 387 357 386Z"/><path fill="#000" stroke="#000" d="M210 375 189 375 318 387 338 387Z"/><path fill="#000" stroke="#000" d="M306 384 284 381 169 372 189 375Z"/><path fill="#000" d="M284 381 263 375 151 366 169 372Z"/><path fill="#000" d="M263 375 243 368 134 359 151 366Z"/><path fill="#000" d="M243 368 226 358 119 351 134 359Z"/><path fill="#000" d="M226 358 210 347 106 340 119 351Z"/><path fill="#000" d="M210 347 198 335 97 329 106 340Z"/><path fill="#000" d="M198 335 188 322 89 317 97 329Z"/><path fill="#000" d="M188 322 181 308 85 305 89 317Z"/><path fill="#000" d="M181 308 176 295 83 292 85 305Z"/><path fill="#000" d="M369 305 360 318 446 330 453 317Z"/><path fill="#000" d="M360 318 348 331 437 343 446 330Z"/><path fill="#000" d="M348 331 333 342 424 354 437 343Z"/><path fill="#000" d="M333 342 316 353 409 364 424 354Z"/><path fill="#000" d="M316 353 296 361 391 373 409 364Z"/><path fill="#000" d="M296 361 275 368 372 379 391 373Z"/><path fill="#000" d="M275 368 252 372 351 383 372 379Z"/><path fill="#000" d="M252 372 229 374 328 385 351 383Z"/><path fill="#000" stroke="#000" d="M229 374 206 373 306 384 328 385Z"/><path fill="#000" stroke="#000" d="M289 377 265 374 183 369 206 373Z"/><path fill="#000" d="M265 374 241 368 162 364 183 369Z"/><path fill="#000" d="M241 368 220 359 143 356 162 364Z"/><path fill="#000" d="M220 359 201 349 126 346 143 356Z"/><path fill="#000" d="M201 349 185 337 112 335 126 346Z"/><path fill="#000" d="M185 337 172 324 101 322 112 335Z"/><path fill="#000" d="M172 324 161 310 93 309 101 322Z"/><path fill="#000" d="M161 310 154 296 88 296 93 309Z"/><path fill="#000" d="M365 321 349 333 419 345 433 333Z"/><path fill="#000" d="M349 333 331 344 402 356 419 345Z"/><path fill="#000" d="M331 344 310 354 383 365 402 356Z"/><path fill="#000" d="M310 354 286 361 361 372 383 365Z"/><path fill="#000" d="M286 361 262 365 338 376 361 372Z"/><path fill="#000" d="M262 365 236 367 314 378 338 376Z"/><path fill="#000" stroke="#000" d="M236 367 211 366 289 377 314 378Z"/><path fill="#000" stroke="#000" d="M309 368 283 367 211 366 236 367Z"/><path fill="#000" stroke="#000" d="M283 367 256 364 186 362 211 366Z"/><path fill="#000" d="M256 364 232 357 163 356 186 362Z"/><path fill="#000" d="M232 357 209 348 143 348 163 356Z"/><path fill="#000" d="M209 348 189 337 124 337 143 348Z"/><path fill="#000" d="M189 337 171 325 109 325 124 337Z"/><path fill="#000" d="M171 325 157 311 97 312 109 325Z"/><path fill="#000" d="M157 311 147 296 89 298 97 312Z"/><path fill="#000" d="M337 332 315 341 384 354 405 345Z"/><path fill="#000" d="M315 341 290 349 361 362 384 354Z"/><path fill="#000" d="M290 349 264 354 336 366 361 362Z"/><path fill="#000" d="M264 354 237 355 309 368 336 366Z"/><path fill="#000" d="M237 355 209 355 283 367 309 368Z"/><path fill="#000" stroke="#000" d="M209 355 183 351 256 364 283 367Z"/><path fill="#000" d="M304 356 276 352 183 351 209 355Z"/><path fill="#000" d="M276 352 249 345 159 344 183 351Z"/><path fill="#000" d="M249 345 225 336 136 335 159 344Z"/><path fill="#000" d="M225 336 203 324 117 324 136 335Z"/><path fill="#000" d="M203 324 184 311 101 312 117 324Z"/><path fill="#000" d="M184 311 169 297 89 298 101 312Z"/><path fill="#000" d="M388 261 377 275 477 292 485 277Z"/><path fill="#000" d="M377 275 364 290 466 306 477 292Z"/><path fill="#000" d="M364 290 346 303 451 320 466 306Z"/><path fill="#000" d="M346 303 325 314 433 332 451 320Z"/><path fill="#000" d="M325 314 302 324 411 342 433 332Z"/><path fill="#000" d="M302 324 276 332 386 350 411 342Z"/><path fill="#000" d="M276 332 248 336 360 355 386 350Z"/><path fill="#000" d="M248 336 220 338 332 357 360 355Z"/><path fill="#000" d="M220 338 191 337 304 356 332 357Z"/><path fill="#000" stroke="#000" d="M191 337 164 333 276 352 304 356Z"/><path fill="url(#3h)" stroke="url(#3h)" d="M339 339 309 338 191 337 220 338Z"/><path fill="url(#3j)" d="M309 338 280 334 164 333 191 337Z"/><path fill="url(#3m)" d="M280 334 253 327 139 327 164 333Z"/><path fill="url(#3p)" d="M253 327 227 318 116 318 139 327Z"/><path fill="url(#3r)" d="M227 318 205 307 96 307 116 318Z"/><path fill="url(#3t)" d="M205 307 186 294 80 294 96 307Z"/><path fill="url(#3v)" d="M186 294 170 279 67 280 80 294Z"/><path fill="url(#3x)" d="M170 279 158 264 59 266 67 280Z"/><path fill="url(#40)" d="M391 227 385 241 496 259 499 244Z"/><path fill="url(#43)" d="M385 241 374 256 488 274 496 259Z"/><path fill="url(#46)" d="M374 256 360 270 477 289 488 274Z"/><path fill="url(#49)" d="M360 270 342 283 462 302 477 289Z"/><path fill="url(#4c)" d="M342 283 320 294 443 314 462 302Z"/><path fill="url(#4f)" d="M320 294 296 304 421 324 443 314Z"/><path fill="url(#4i)" d="M296 304 269 311 395 332 421 324Z"/><path fill="url(#4l)" d="M269 311 241 316 368 337 395 332Z"/><path fill="url(#4o)" d="M241 316 212 318 339 339 368 337Z"/><path fill="url(#4r)" d="M212 318 183 317 309 338 339 339Z"/><path fill="url(#4u)" stroke="url(#4u)" d="M183 317 155 313 280 334 309 338Z"/><path fill="url(#4x)" stroke="url(#4x)" d="M339 317 309 316 183 317 212 318Z"/><path fill="url(#50)" d="M309 316 280 312 155 313 183 317Z"/><path fill="url(#53)" d="M280 312 252 306 129 307 155 313Z"/><path fill="url(#56)" d="M252 306 226 296 106 298 129 307Z"/><path fill="url(#58)" d="M226 296 203 285 86 287 106 298Z"/><path fill="url(#5a)" d="M203 285 184 273 69 274 86 287Z"/><path fill="url(#5c)" d="M184 273 168 259 57 261 69 274Z"/><path fill="url(#5e)" d="M168 259 156 244 48 246 57 261Z"/><path fill="url(#5g)" d="M156 244 148 229 43 232 48 246Z"/><path fill="url(#5j)" d="M380 220 369 234 490 254 498 239Z"/><path fill="url(#5m)" d="M369 234 355 248 479 268 490 254Z"/><path fill="url(#5p)" d="M355 248 336 260 464 281 479 268Z"/><path fill="url(#5s)" d="M336 260 315 271 445 293 464 281Z"/><path fill="url(#5v)" d="M315 271 290 280 422 303 445 293Z"/><path fill="url(#5y)" d="M290 280 264 287 396 310 422 303Z"/><path fill="url(#61)" d="M264 287 235 292 369 315 396 310Z"/><path fill="url(#64)" d="M235 292 206 294 339 317 369 315Z"/><path fill="url(#67)" d="M206 294 177 293 309 316 339 317Z"/><path fill="url(#6a)" stroke="url(#6a)" d="M177 293 149 289 280 312 309 316Z"/><path fill="url(#6d)" stroke="url(#6d)" d="M354 293 324 292 177 293 206 294Z"/><path fill="url(#6g)" d="M324 292 295 288 149 289 177 293Z"/><path fill="url(#6j)" d="M295 288 267 282 123 283 149 289Z"/><path fill="url(#6m)" d="M267 282 241 273 100 275 123 283Z"/><path fill="url(#6o)" d="M241 273 218 262 80 264 100 275Z"/><path fill="url(#6q)" d="M218 262 198 250 64 252 80 264Z"/><path fill="url(#6s)" d="M198 250 182 237 51 239 64 252Z"/><path fill="url(#6u)" d="M182 237 170 223 43 225 51 239Z"/><path fill="url(#6w)" d="M170 223 161 209 38 211 43 225Z"/><path fill="url(#6y)" d="M161 209 156 195 37 197 38 211Z"/><path fill="url(#71)" d="M381 172 377 185 513 204 513 190Z"/><path fill="url(#74)" d="M377 185 370 198 510 218 513 204Z"/><path fill="url(#77)" d="M370 198 359 211 503 232 510 218Z"/><path fill="url(#7a)" d="M359 211 345 224 492 246 503 232Z"/><path fill="url(#7d)" d="M345 224 327 235 477 258 492 246Z"/><path fill="url(#7g)" d="M327 235 306 246 458 270 477 258Z"/><path fill="url(#7j)" d="M306 246 281 254 436 279 458 270Z"/><path fill="url(#7m)" d="M281 254 255 261 411 286 436 279Z"/><path fill="url(#7p)" d="M255 261 227 265 383 291 411 286Z"/><path fill="url(#7s)" d="M227 265 198 267 354 293 383 291Z"/><path fill="url(#7v)" d="M198 267 170 266 324 292 354 293Z"/><path fill="url(#7y)" stroke="url(#7y)" d="M170 266 143 262 295 288 324 292Z"/><path fill="url(#81)" stroke="url(#81)" d="M361 265 332 264 170 266 198 267Z"/><path fill="url(#84)" d="M332 264 304 260 143 262 170 266Z"/><path fill="url(#87)" d="M304 260 276 255 117 257 143 262Z"/><path fill="url(#8a)" d="M276 255 251 247 95 249 117 257Z"/><path fill="url(#8d)" d="M251 247 229 237 75 239 95 249Z"/><path fill="url(#8f)" d="M229 237 209 226 60 228 75 239Z"/><path fill="url(#8h)" d="M209 226 193 213 48 216 60 228Z"/><path fill="url(#8j)" d="M193 213 181 201 39 203 48 216Z"/><path fill="url(#8l)" d="M181 201 172 187 35 190 39 203Z"/><path fill="url(#8n)" d="M172 187 167 174 34 176 35 190Z"/><path fill="url(#8p)" d="M167 174 165 162 36 164 34 176Z"/><path fill="url(#8r)" d="M165 162 167 149 41 151 36 164Z"/><path fill="url(#8u)" d="M376 140 375 152 514 170 511 157Z"/><path fill="url(#8x)" d="M375 152 371 164 515 183 514 170Z"/><path fill="url(#90)" d="M371 164 364 176 512 196 515 183Z"/><path fill="url(#93)" d="M364 176 354 188 505 209 512 196Z"/><path fill="url(#96)" d="M354 188 340 199 494 222 505 209Z"/><path fill="url(#99)" d="M340 199 322 209 480 233 494 222Z"/><path fill="url(#9c)" d="M322 209 302 219 462 243 480 233Z"/><path fill="url(#9f)" d="M302 219 279 227 440 252 462 243Z"/><path fill="url(#9i)" d="M279 227 253 232 416 259 440 252Z"/><path fill="url(#9l)" d="M253 232 226 236 389 263 416 259Z"/><path fill="url(#9o)" d="M226 236 199 238 361 265 389 263Z"/><path fill="url(#9r)" d="M199 238 172 237 332 264 361 265Z"/><path fill="url(#9u)" stroke="url(#9u)" d="M172 237 146 234 304 260 332 264Z"/><path fill="url(#9x)" d="M353 100 362 109 486 123 473 114Z"/><path fill="url(#9z)" d="M362 109 369 118 496 134 486 123Z"/><path fill="url(#a1)" d="M369 118 374 129 505 145 496 134Z"/><path fill="url(#a3)" d="M374 129 376 140 511 157 505 145Z"/><path fill="url(#a5)" stroke="url(#a5)" d="M344 233 317 232 172 237 199 238Z"/><path fill="url(#a8)" d="M317 232 290 229 146 234 172 237Z"/><path fill="url(#ab)" d="M290 229 265 224 122 229 146 234Z"/><path fill="url(#ae)" d="M265 224 241 217 100 222 122 229Z"/><path fill="url(#ag)" d="M241 217 220 208 81 213 100 222Z"/><path fill="url(#ai)" d="M220 208 202 198 66 203 81 213Z"/><path fill="url(#ak)" d="M202 198 187 188 54 192 66 203Z"/><path fill="url(#am)" d="M187 188 176 176 46 180 54 192Z"/><path fill="url(#ao)" d="M176 176 168 164 42 168 46 180Z"/><path fill="url(#aq)" d="M168 164 163 153 40 156 42 168Z"/><path fill="url(#as)" d="M163 153 161 141 42 144 40 156Z"/><path fill="url(#au)" d="M161 141 162 130 47 133 42 144Z"/><path fill="url(#aw)" d="M162 130 166 119 54 122 47 133Z"/><path fill="url(#ay)" d="M166 119 173 109 64 112 54 122Z"/><path fill="url(#b1)" d="M406 123 406 134 493 149 490 137Z"/><path fill="url(#b4)" d="M406 134 403 145 493 160 493 149Z"/><path fill="url(#b7)" d="M403 145 397 155 489 172 493 160Z"/><path fill="url(#ba)" d="M397 155 388 166 482 184 489 172Z"/><path fill="url(#bd)" d="M388 166 376 176 472 195 482 184Z"/><path fill="url(#bg)" d="M376 176 360 186 457 205 472 195Z"/><path fill="url(#bj)" d="M360 186 342 194 440 214 457 205Z"/><path fill="url(#bm)" d="M342 194 321 201 419 222 440 214Z"/><path fill="url(#bp)" d="M321 201 297 206 396 228 419 222Z"/><path fill="url(#bs)" d="M297 206 273 209 371 231 396 228Z"/><path fill="url(#bv)" d="M273 209 247 211 344 233 371 231Z"/><path fill="url(#by)" d="M247 211 222 210 317 232 344 233Z"/><path fill="url(#c1)" stroke="url(#c1)" d="M222 210 197 207 290 229 317 232Z"/><path fill="url(#c4)" stroke="url(#c4)" d="M197 207 174 203 265 224 290 229Z"/><path fill="url(#c7)" d="M390 95 398 104 477 116 468 106Z"/><path fill="url(#c9)" d="M398 104 403 113 485 126 477 116Z"/><path fill="url(#cb)" d="M403 113 406 123 490 137 485 126Z"/><path fill="url(#cd)" d="M348 162 333 171 360 186 376 176Z"/><path fill="url(#cg)" d="M333 171 314 178 342 194 360 186Z"/><path fill="url(#cj)" d="M314 178 294 185 321 201 342 194Z"/><path fill="url(#cm)" d="M294 185 272 190 297 206 321 201Z"/><path fill="url(#cp)" d="M272 190 248 193 273 209 297 206Z"/><path fill="url(#cs)" d="M248 193 224 194 247 211 273 209Z"/><path fill="url(#cu)" d="M224 194 199 193 222 210 247 211Z"/><path fill="url(#cw)" d="M199 193 176 191 197 207 222 210Z"/><path fill="url(#cy)" d="M176 191 154 187 174 203 197 207Z"/><path fill="url(#d0)" d="M154 187 134 181 153 196 174 203Z"/><path fill="url(#d2)" d="M134 181 117 173 134 189 153 196Z"/><path fill="url(#d4)" d="M117 173 103 165 119 180 134 189Z"/><path fill="url(#d6)" stroke="url(#d6)" d="M103 165 91 156 106 170 119 180Z"/><path fill="url(#d9)" stroke="url(#d9)" d="M334 186 311 185 199 193 224 194Z"/><path fill="url(#dc)" d="M311 185 288 183 176 191 199 193Z"/><path fill="url(#df)" d="M288 183 266 179 154 187 176 191Z"/><path fill="url(#di)" d="M266 179 245 173 134 181 154 187Z"/><path fill="url(#dk)" d="M245 173 227 166 117 173 134 181Z"/><path fill="url(#dm)" d="M227 166 211 158 103 165 117 173Z"/><path fill="url(#do)" d="M211 158 197 150 91 156 103 165Z"/><path fill="url(#dq)" d="M197 150 187 141 83 146 91 156Z"/><path fill="url(#ds)" d="M187 141 180 131 78 136 83 146Z"/><path fill="url(#du)" d="M180 131 175 121 76 126 78 136Z"/><path fill="url(#dx)" d="M337 94 335 102 467 118 466 109Z"/><path fill="url(#e0)" d="M335 102 331 111 466 128 467 118Z"/><path fill="url(#e3)" d="M331 111 325 119 463 137 466 128Z"/><path fill="url(#e6)" d="M325 119 315 128 456 147 463 137Z"/><path fill="url(#e9)" d="M315 128 303 135 446 156 456 147Z"/><path fill="url(#ec)" d="M303 135 289 142 433 164 446 156Z"/><path fill="url(#ef)" d="M289 142 272 149 418 171 433 164Z"/><path fill="url(#ei)" d="M272 149 254 154 399 177 418 171Z"/><path fill="url(#el)" d="M254 154 233 158 379 181 399 177Z"/><path fill="url(#eo)" d="M233 158 212 160 357 184 379 181Z"/><path fill="url(#er)" d="M212 160 191 162 334 186 357 184Z"/><path fill="url(#eu)" stroke="url(#eu)" d="M191 162 170 161 311 185 334 186Z"/><path fill="url(#ex)" stroke="url(#ex)" d="M170 161 149 159 288 183 311 185Z"/><path fill="url(#f0)" d="M321 64 328 71 447 83 437 76Z"/><path fill="url(#f2)" d="M328 71 333 78 455 91 447 83Z"/><path fill="url(#f4)" d="M333 78 336 86 462 100 455 91Z"/><path fill="url(#f6)" d="M336 86 337 94 466 109 462 100Z"/><path fill="url(#f8)" stroke="url(#f8)" d="M324 155 304 154 170 161 191 162Z"/><path fill="url(#fb)" d="M304 154 284 152 149 159 170 161Z"/><path fill="url(#fe)" d="M284 152 265 149 130 155 149 159Z"/><path fill="url(#fh)" d="M265 149 247 145 113 151 130 155Z"/><path fill="url(#fj)" d="M247 145 231 139 98 145 113 151Z"/><path fill="url(#fl)" d="M231 139 217 133 85 138 98 145Z"/><path fill="url(#fn)" d="M217 133 206 126 76 130 85 138Z"/><path fill="url(#fp)" d="M206 126 196 118 69 122 76 130Z"/><path fill="url(#fr)" d="M196 118 190 110 65 114 69 122Z"/><path fill="url(#ft)" d="M190 110 185 102 63 105 65 114Z"/><path fill="url(#fv)" d="M185 102 184 94 64 97 63 105Z"/><path fill="url(#fx)" d="M184 94 184 86 67 89 64 97Z"/><path fill="url(#fz)" d="M184 86 187 79 73 81 67 89Z"/><path fill="url(#g1)" d="M187 79 191 72 80 73 73 81Z"/><path fill="url(#g3)" d="M191 72 198 65 89 67 80 73Z"/><path fill="url(#g4)" d="M198 65 206 59 100 60 89 67Z"/><path fill="url(#g6)" d="M414 83 414 90 444 99 443 91Z"/><path fill="url(#g9)" d="M414 90 412 97 442 107 444 99Z"/><path fill="url(#gc)" d="M412 97 408 104 439 115 442 107Z"/><path fill="url(#gf)" d="M408 104 402 111 432 123 439 115Z"/><path fill="url(#gi)" d="M402 111 393 117 423 130 432 123Z"/><path fill="url(#gl)" d="M393 117 382 123 411 137 423 130Z"/><path fill="url(#go)" d="M382 123 368 128 398 143 411 137Z"/><path fill="url(#gr)" d="M368 128 353 133 381 148 398 143Z"/><path fill="url(#gu)" d="M353 133 337 136 364 151 381 148Z"/><path fill="url(#gx)" d="M337 136 319 138 344 154 364 151Z"/><path fill="url(#h0)" d="M319 138 301 139 324 155 344 154Z"/><path fill="url(#h3)" d="M301 139 282 138 304 154 324 155Z"/><path fill="url(#h6)" d="M282 138 264 137 284 152 304 154Z"/><path fill="url(#h9)" d="M264 137 247 134 265 149 284 152Z"/><path fill="url(#hc)" d="M247 134 231 130 247 145 265 149Z"/><path fill="url(#he)" d="M231 130 216 125 231 139 247 145Z"/><path fill="url(#hg)" d="M216 125 204 119 217 133 231 139Z"/><path fill="url(#hi)" d="M204 119 193 113 206 126 217 133Z"/><path fill="url(#hl)" d="M407 69 412 76 440 84 435 76Z"/><path fill="url(#hn)" d="M412 76 414 83 443 91 440 84Z"/><path fill="url(#hp)" d="M306 77 302 83 412 97 414 90Z"/><path fill="url(#hs)" d="M302 83 296 89 408 104 412 97Z"/><path fill="url(#hv)" d="M296 89 288 95 402 111 408 104Z"/><path fill="url(#hy)" d="M288 95 278 101 393 117 402 111Z"/><path fill="url(#i1)" d="M278 101 267 106 382 123 393 117Z"/><path fill="url(#i4)" d="M267 106 254 110 368 128 382 123Z"/><path fill="url(#i7)" d="M254 110 239 114 353 133 368 128Z"/><path fill="url(#ia)" d="M239 114 223 117 337 136 353 133Z"/><path fill="url(#id)" d="M223 117 207 118 319 138 337 136Z"/><path fill="url(#ig)" d="M207 118 191 119 301 139 319 138Z"/><path fill="url(#ij)" stroke="url(#ij)" d="M191 119 174 119 282 138 301 139Z"/><path fill="url(#im)" stroke="url(#im)" d="M174 119 159 117 264 137 282 138Z"/><path fill="url(#ip)" stroke="url(#ip)" d="M159 117 144 115 247 134 264 137Z"/><path fill="url(#is)" stroke="url(#is)" d="M287 107 273 109 207 118 223 117Z"/><path fill="url(#iv)" stroke="url(#iv)" d="M273 109 258 110 191 119 207 118Z"/><path fill="url(#ix)" stroke="url(#ix)" d="M258 110 243 109 174 119 191 119Z"/><path fill="url(#iz)" d="M243 109 229 108 159 117 174 119Z"/><path fill="url(#j1)" d="M229 108 215 106 144 115 159 117Z"/><path fill="url(#j3)" d="M215 106 202 103 130 112 144 115Z"/><path fill="url(#j5)" d="M202 103 191 99 119 107 130 112Z"/><path fill="url(#j7)" d="M191 99 181 95 109 103 119 107Z"/><path fill="url(#j9)" d="M181 95 173 90 101 97 109 103Z"/><path fill="url(#jb)" d="M173 90 166 85 95 91 101 97Z"/><path fill="url(#jd)" d="M166 85 162 80 91 85 95 91Z"/><path fill="url(#jf)" d="M162 80 159 74 89 79 91 85Z"/><path fill="url(#jh)" d="M159 74 158 69 90 73 89 79Z"/><path fill="url(#jj)" d="M158 69 159 63 92 67 90 73Z"/><path fill="url(#jl)" d="M159 63 161 58 96 61 92 67Z"/><path fill="url(#jn)" d="M161 58 165 53 101 55 96 61Z"/><path fill="url(#jp)" d="M165 53 171 48 108 50 101 55Z"/><path fill="url(#jq)" d="M171 48 177 44 116 45 108 50Z"/><path fill="url(#jr)" d="M177 44 185 40 126 41 116 45Z"/><path fill="url(#js)" d="M185 40 194 36 136 37 126 41Z"/><path fill="url(#jt)" stroke="url(#jt)" d="M194 36 203 33 147 34 136 37Z"/><path fill="url(#jv)" stroke="url(#jv)" d="M361 103 348 102 243 109 258 110Z"/><path fill="url(#jy)" stroke="url(#jy)" d="M348 102 334 101 229 108 243 109Z"/><path fill="url(#k1)" stroke="url(#k1)" d="M334 101 322 99 215 106 229 108Z"/><path fill="url(#k4)" d="M322 99 310 97 202 103 215 106Z"/><path fill="url(#k7)" d="M310 97 298 94 191 99 202 103Z"/><path fill="url(#ka)" d="M298 94 288 90 181 95 191 99Z"/><path fill="url(#kd)" d="M288 90 280 86 173 90 181 95Z"/><path fill="url(#kg)" d="M280 86 273 81 166 85 173 90Z"/><path fill="url(#kj)" d="M273 81 267 76 162 80 166 85Z"/><path fill="url(#km)" d="M267 76 263 71 159 74 162 80Z"/><path fill="url(#ko)" d="M263 71 260 66 158 69 159 74Z"/><path fill="url(#kr)" d="M369 57 369 61 439 70 438 65Z"/><path fill="url(#ku)" d="M369 61 367 65 438 75 439 70Z"/><path fill="url(#kx)" d="M367 65 363 69 435 79 438 75Z"/><path fill="url(#l0)" d="M363 69 359 73 431 84 435 79Z"/><path fill="url(#l3)" d="M359 73 353 76 425 88 431 84Z"/><path fill="url(#l6)" d="M353 76 346 79 417 92 425 88Z"/><path fill="url(#l9)" d="M346 79 337 82 408 96 417 92Z"/><path fill="url(#lc)" d="M337 82 328 85 398 99 408 96Z"/><path fill="url(#lf)" d="M328 85 318 86 386 101 398 99Z"/><path fill="url(#li)" d="M318 86 307 87 374 102 386 101Z"/><path fill="url(#ll)" d="M307 87 296 88 361 103 374 102Z"/><path fill="url(#lo)" stroke="url(#lo)" d="M296 88 285 88 348 102 361 103Z"/><path fill="url(#lr)" stroke="url(#lr)" d="M285 88 274 87 334 101 348 102Z"/><path fill="url(#lu)" stroke="url(#lu)" d="M274 87 264 85 322 99 334 101Z"/><path fill="url(#lx)" stroke="url(#lx)" d="M264 85 254 83 310 97 322 99Z"/><path fill="url(#m0)" stroke="url(#m0)" d="M307 26 315 27 369 30 359 28Z"/><path fill="url(#m2)" stroke="url(#m2)" d="M315 27 324 28 379 31 369 30Z"/><path fill="url(#m4)" stroke="url(#m4)" d="M324 28 332 30 389 33 379 31Z"/><path fill="url(#m6)" stroke="url(#m6)" d="M332 30 340 32 398 36 389 33Z"/><path fill="url(#m8)" stroke="url(#m8)" d="M340 32 347 35 407 39 398 36Z"/><path fill="url(#ma)" stroke="url(#ma)" d="M347 35 353 38 415 43 407 39Z"/><path fill="url(#mc)" stroke="url(#mc)" d="M353 38 358 41 422 46 415 43Z"/><path fill="url(#me)" d="M358 41 363 45 428 51 422 46Z"/><path fill="url(#mg)" d="M363 45 366 48 433 55 428 51Z"/><path fill="url(#mi)" d="M366 48 368 52 436 60 433 55Z"/><path fill="url(#mk)" d="M368 52 369 57 438 65 436 60Z"/><path fill="url(#mm)" d="M264 48 263 51 369 61 369 57Z"/><path fill="url(#mp)" d="M263 51 260 54 367 65 369 61Z"/><path fill="url(#ms)" d="M260 54 256 57 363 69 367 65Z"/><path fill="url(#mv)" d="M256 57 251 61 359 73 363 69Z"/><path fill="url(#my)" d="M251 61 245 63 353 76 359 73Z"/><path fill="url(#n1)" d="M245 63 239 66 346 79 353 76Z"/><path fill="url(#n4)" d="M239 66 231 68 337 82 346 79Z"/><path fill="url(#n7)" d="M231 68 223 70 328 85 337 82Z"/><path fill="url(#na)" stroke="url(#na)" d="M223 70 214 71 318 86 328 85Z"/><path fill="url(#nd)" stroke="url(#nd)" d="M214 71 205 72 307 87 318 86Z"/><path fill="url(#ng)" stroke="url(#ng)" d="M205 72 196 72 296 88 307 87Z"/><path fill="url(#nj)" stroke="url(#nj)" d="M196 72 187 72 285 88 296 88Z"/><path fill="url(#nm)" stroke="url(#nm)" d="M187 72 178 72 274 87 285 88Z"/><path fill="url(#np)" stroke="url(#np)" d="M220 22 228 23 315 27 307 26Z"/><path fill="url(#nr)" stroke="url(#nr)" d="M228 23 234 24 324 28 315 27Z"/><path fill="url(#nt)" stroke="url(#nt)" d="M234 24 241 26 332 30 324 28Z"/><path fill="url(#nv)" stroke="url(#nv)" d="M241 26 246 28 340 32 332 30Z"/><path fill="url(#nx)" stroke="url(#nx)" d="M246 28 252 30 347 35 340 32Z"/><path fill="url(#nz)" stroke="url(#nz)" d="M252 30 256 32 353 38 347 35Z"/><path fill="url(#o1)" stroke="url(#o1)" d="M256 32 260 35 358 41 353 38Z"/><path fill="url(#o3)" d="M260 35 262 38 363 45 358 41Z"/><path fill="url(#o5)" stroke="url(#o5)" d="M262 38 264 41 366 48 363 45Z"/><path fill="url(#o7)" d="M264 41 265 44 368 52 366 48Z"/><path fill="url(#o9)" d="M265 44 264 48 369 57 368 52Z"/><path fill="url(#oa)" stroke="url(#oa)" d="M253 59 247 61 231 68 239 66Z"/><path fill="url(#oc)" stroke="url(#oc)" d="M247 61 240 62 223 70 231 68Z"/><path fill="url(#oe)" stroke="url(#oe)" d="M240 62 233 63 214 71 223 70Z"/><path fill="url(#og)" stroke="url(#og)" d="M233 63 226 64 205 72 214 71Z"/><path fill="url(#oi)" stroke="url(#oi)" d="M226 64 219 64 196 72 205 72Z"/><path fill="url(#ok)" stroke="url(#ok)" d="M219 64 212 64 187 72 196 72Z"/><path fill="url(#om)" stroke="url(#om)" d="M212 64 205 63 178 72 187 72Z"/><path fill="url(#oo)" d="M205 63 198 62 170 70 178 72Z"/><path fill="url(#oq)" stroke="url(#oq)" d="M198 62 192 61 162 69 170 70Z"/><path fill="url(#os)" stroke="url(#os)" d="M192 61 186 60 156 67 162 69Z"/><path fill="url(#ou)" d="M186 60 181 58 150 64 156 67Z"/><path fill="url(#ow)" d="M181 58 177 55 145 62 150 64Z"/><path fill="url(#oy)" d="M177 55 174 53 141 59 145 62Z"/><path fill="url(#p0)" d="M174 53 172 51 138 55 141 59Z"/><path fill="url(#p2)" d="M172 51 170 48 137 52 138 55Z"/><path fill="url(#p4)" stroke="url(#p4)" d="M170 48 170 45 137 49 137 52Z"/><path fill="url(#p6)" stroke="url(#p6)" d="M170 45 170 43 137 45 137 49Z"/><path fill="url(#p8)" stroke="url(#p8)" d="M170 43 171 40 139 42 137 45Z"/><path fill="url(#pa)" stroke="url(#pa)" d="M171 40 173 38 142 39 139 42Z"/><path fill="url(#pc)" stroke="url(#pc)" d="M173 38 176 35 146 36 142 39Z"/><path fill="url(#pd)" stroke="url(#pd)" d="M176 35 179 33 150 33 146 36Z"/><path fill="url(#pe)" stroke="url(#pe)" d="M179 33 184 31 156 31 150 33Z"/><path fill="url(#pf)" stroke="url(#pf)" d="M184 31 188 29 162 28 156 31Z"/><path fill="url(#pg)" stroke="url(#pg)" d="M188 29 193 27 168 26 162 28Z"/><path fill="url(#ph)" stroke="url(#ph)" d="M193 27 199 26 175 25 168 26Z"/><path fill="url(#pi)" stroke="url(#pi)" d="M199 26 205 25 182 24 175 25Z"/><path fill="url(#pj)" stroke="url(#pj)" d="M205 25 211 24 190 23 182 24Z"/><path fill="url(#pk)" stroke="url(#pk)" d="M211 24 217 24 198 22 190 23Z"/><path fill="url(#pl)" stroke="url(#pl)" d="M217 24 224 23 205 22 198 22Z"/><path fill="url(#pm)" stroke="url(#pm)" d="M224 23 230 23 213 22 205 22Z"/><path fill="#00f600" d="M302 43 300 47 298 49 295 51 288 54 284 55 274 57 247 61 226 64 212 64 198 62 186 60 181 58 174 53 172 51 170 48 170 43 171 40 176 35 179 33 188 29 193 27 211 24 224 23 230 23 272 27 281 28 285 29 293 32 298 35 300 37 302 41Z"/><path fill="url(#po)" stroke="url(#po)" d="M274 57 269 57 226 64 233 63Z"/><path fill="url(#pr)" stroke="url(#pr)" d="M269 57 263 57 219 64 226 64Z"/><path fill="url(#pt)" stroke="url(#pt)" d="M263 57 258 57 212 64 219 64Z"/><path fill="url(#pv)" stroke="url(#pv)" d="M258 57 253 57 205 63 212 64Z"/><path fill="url(#px)" stroke="url(#px)" d="M253 57 248 56 198 62 205 63Z"/><path fill="url(#pz)" stroke="url(#pz)" d="M248 56 243 55 192 61 198 62Z"/><path fill="url(#q1)" stroke="url(#q1)" d="M243 55 238 54 186 60 192 61Z"/><path fill="url(#q3)" stroke="url(#q3)" d="M238 54 235 53 181 58 186 60Z"/><path fill="url(#q5)" stroke="url(#q5)" d="M235 53 231 51 177 55 181 58Z"/><path fill="url(#q7)" stroke="url(#q7)" d="M231 51 228 49 174 53 177 55Z"/><path fill="url(#q9)" stroke="url(#q9)" d="M228 49 226 48 172 51 174 53Z"/><path fill="url(#qb)" stroke="url(#qb)" d="M226 48 225 46 170 48 172 51Z"/><path fill="url(#qd)" stroke="url(#qd)" d="M225 46 224 44 170 45 170 48Z"/><path fill="url(#qf)" stroke="url(#qf)" d="M224 44 224 42 170 43 170 45Z"/><path fill="url(#qh)" stroke="url(#qh)" d="M224 42 224 40 171 40 170 43Z"/><path fill="url(#qj)" stroke="url(#qj)" d="M224 40 225 38 173 38 171 40Z"/><path fill="url(#ql)" stroke="url(#ql)" d="M225 38 227 36 176 35 173 38Z"/><path fill="url(#qm)" stroke="url(#qm)" d="M227 36 230 34 179 33 176 35Z"/><path fill="url(#qn)" stroke="url(#qn)" d="M230 34 233 32 184 31 179 33Z"/><path fill="url(#qo)" stroke="url(#qo)" d="M233 32 236 31 188 29 184 31Z"/><path fill="url(#qp)" stroke="url(#qp)" d="M236 31 240 30 193 27 188 29Z"/><path fill="url(#qq)" stroke="url(#qq)" d="M240 30 244 29 199 26 193 27Z"/><path fill="url(#qr)" stroke="url(#qr)" d="M244 29 248 28 205 25 199 26Z"/><path fill="url(#qs)" stroke="url(#qs)" d="M248 28 253 27 211 24 205 25Z"/><path fill="url(#qt)" stroke="url(#qt)" d="M253 27 258 27 217 24 211 24Z"/><path fill="url(#qu)" stroke="url(#qu)" d="M258 27 262 27 224 23 217 24Z"/><path fill="url(#qv)" stroke="url(#qv)" d="M262 27 267 27 230 23 224 23Z"/><path fill="#00fa00" d="M335 44 333 46 329 49 321 51 314 52 274 57 253 57 238 54 235 53 231 51 226 48 224 44 224 40 225 38 227 36 233 32 236 31 248 28 253 27 272 27 313 31 320 32 323 33 328 35 332 37 333 38 335 41Z"/><path fill="url(#qx)" stroke="url(#qx)" d="M314 52 311 52 263 57 269 57Z"/><path fill="url(#r0)" stroke="url(#r0)" d="M311 52 307 52 258 57 263 57Z"/><path fill="url(#r3)" stroke="url(#r3)" d="M307 52 303 52 253 57 258 57Z"/><path fill="url(#r6)" stroke="url(#r6)" d="M303 52 300 51 248 56 253 57Z"/><path fill="url(#r9)" stroke="url(#r9)" d="M300 51 297 51 243 55 248 56Z"/><path fill="url(#rc)" stroke="url(#rc)" d="M297 51 294 50 238 54 243 55Z"/><path fill="url(#rf)" stroke="url(#rf)" d="M294 50 291 49 235 53 238 54Z"/><path fill="url(#ri)" stroke="url(#ri)" d="M291 49 288 48 231 51 235 53Z"/><path fill="url(#rl)" stroke="url(#rl)" d="M288 48 286 47 228 49 231 51Z"/><path fill="url(#ro)" stroke="url(#ro)" d="M286 47 285 45 226 48 228 49Z"/><path fill="url(#rr)" stroke="url(#rr)" d="M285 45 283 44 225 46 226 48Z"/><path fill="url(#ru)" stroke="url(#ru)" d="M283 44 283 43 224 44 225 46Z"/><path fill="url(#rx)" stroke="url(#rx)" d="M283 43 282 41 224 42 224 44Z"/><path fill="url(#s0)" stroke="url(#s0)" d="M282 41 282 40 224 40 224 42Z"/><path fill="url(#s3)" stroke="url(#s3)" d="M282 40 283 39 225 38 224 40Z"/><path fill="url(#s6)" stroke="url(#s6)" d="M283 39 284 37 227 36 225 38Z"/><path fill="url(#s8)" stroke="url(#s8)" d="M284 37 285 36 230 34 227 36Z"/><path fill="url(#sa)" stroke="url(#sa)" d="M285 36 287 35 233 32 230 34Z"/><path fill="url(#sc)" stroke="url(#sc)" d="M287 35 289 34 236 31 233 32Z"/><path fill="url(#se)" stroke="url(#se)" d="M289 34 291 33 240 30 236 31Z"/><path fill="url(#sg)" stroke="url(#sg)" d="M291 33 294 33 244 29 240 30Z"/><path fill="url(#si)" stroke="url(#si)" d="M294 33 297 32 248 28 244 29Z"/><path fill="url(#sk)" stroke="url(#sk)" d="M297 32 300 32 253 27 248 28Z"/><path fill="url(#sm)" stroke="url(#sm)" d="M300 32 303 31 258 27 253 27Z"/><path fill="url(#so)" stroke="url(#so)" d="M303 31 307 31 262 27 258 27Z"/><path fill="url(#sq)" stroke="url(#sq)" d="M307 31 310 31 267 27 262 27Z"/><path fill="url(#ss)" stroke="url(#ss)" d="M310 31 313 31 272 27 267 27Z"/><path fill="#00fd00" d="M354 43 353 44 351 45 348 46 344 47 321 51 314 52 303 52 297 51 288 48 286 47 283 44 282 41 282 40 284 37 285 36 291 33 303 31 313 31 320 32 342 36 347 37 350 38 352 39 354 41Z"/><path fill="url(#su)" stroke="url(#su)" d="M347 46 345 46 318 51 321 51Z"/><path fill="url(#sx)" stroke="url(#sx)" d="M344 47 342 47 311 52 314 52Z"/><path fill="url(#t0)" stroke="url(#t0)" d="M342 47 340 47 307 52 311 52Z"/><path fill="url(#t3)" stroke="url(#t3)" d="M340 47 338 46 303 52 307 52Z"/><path fill="url(#t6)" stroke="url(#t6)" d="M338 46 337 46 300 51 303 52Z"/><path fill="url(#t9)" stroke="url(#t9)" d="M337 46 335 46 297 51 300 51Z"/><path fill="url(#tc)" stroke="url(#tc)" d="M335 46 333 46 294 50 297 51Z"/><path fill="url(#tf)" stroke="url(#tf)" d="M333 46 332 45 291 49 294 50Z"/><path fill="url(#ti)" stroke="url(#ti)" d="M332 45 331 45 288 48 291 49Z"/><path fill="url(#tl)" stroke="url(#tl)" d="M331 45 329 44 286 47 288 48Z"/><path fill="url(#to)" stroke="url(#to)" d="M329 44 329 43 285 45 286 47Z"/><path fill="url(#tr)" stroke="url(#tr)" d="M329 43 328 43 283 44 285 45Z"/><path fill="url(#tu)" stroke="url(#tu)" d="M328 43 327 42 283 43 283 44Z"/><path fill="url(#tx)" stroke="url(#tx)" d="M327 42 327 41 282 41 283 43Z"/><path fill="url(#u0)" stroke="url(#u0)" d="M327 41 282 40 282 41Z"/><path fill="url(#u3)" stroke="url(#u3)" d="M327 41 327 40 283 39 282 40Z"/><path fill="url(#u6)" stroke="url(#u6)" d="M327 40 328 39 284 37 283 39Z"/><path fill="url(#u8)" stroke="url(#u8)" d="M328 39 285 36 284 37Z"/><path fill="url(#ua)" stroke="url(#ua)" d="M328 39 329 38 287 35 285 36Z"/><path fill="url(#uc)" stroke="url(#uc)" d="M329 38 330 38 289 34 287 35Z"/><path fill="url(#ue)" stroke="url(#ue)" d="M330 38 331 37 291 33 289 34Z"/><path fill="url(#ug)" stroke="url(#ug)" d="M331 37 332 37 294 33 291 33Z"/><path fill="url(#ui)" stroke="url(#ui)" d="M332 37 334 37 297 32 294 33Z"/><path fill="url(#uk)" stroke="url(#uk)" d="M334 37 335 36 300 32 297 32Z"/><path fill="url(#um)" stroke="url(#um)" d="M335 36 337 36 303 31 300 32Z"/><path fill="url(#uo)" stroke="url(#uo)" d="M337 36 339 36 307 31 303 31Z"/><path fill="url(#uq)" stroke="url(#uq)" d="M339 36 341 36 310 31 307 31Z"/><path fill="url(#us)" stroke="url(#us)" d="M341 36 342 36 313 31 310 31Z"/><path fill="#00fe00" d="M354 43 353 44 351 45 348 46 344 47 340 47 333 46 310 40 335 36 342 36 347 37 350 38 352 39 354 41Z"/><path fill="#00ff00" stroke="#00ff00" d="M310 40 354 43 354 42Z"/><path fill="#00ff00" stroke="#00ff00" d="M310 40 353 43 354 43Z"/><path fill="#00ff00" stroke="#00ff00" d="M310 40 353 44 353 43Z"/><path fill="#00ff00" stroke="#00ff00" d="M310 40 352 44 353 44Z"/><path fill="#00ff00" stroke="#00ff00" d="M310 40 351 45 352 44Z"/><path fill="#00ff00" stroke="#00ff00" d="M310 40 350 45 351 45Z"/><path fill="#00ff00" stroke="#00ff00" d="M310 40 348 46 350 45Z"/><path fill="#00ff00" stroke="#00ff00" d="M310 40 347 46 348 46Z"/><path fill="#00ff00" stroke="#00ff00" d="M310 40 345 46 347 46Z"/><path fill="#00ff00" stroke="#00ff00" d="M310 40 344 47 345 46Z"/><path fill="#00ff00" stroke="#00ff00" d="M310 40 342 47 344 47Z"/><path fill="#00ff00" stroke="#00ff00" d="M310 40 340 47 342 47Z"/><path fill="#00ff00" stroke="#00ff00" d="M310 40 335 46 337 46Z"/><path fill="#00ff00" stroke="#00ff00" d="M310 40 339 36 337 36Z"/><path fill="#00ff00" stroke="#00ff00" d="M310 40 341 36 339 36Z"/><path fill="#00ff00" stroke="#00ff00" d="M310 40 342 36 341 36Z"/><path fill="#00ff00" stroke="#00ff00" d="M310 40 344 37 342 36Z"/><path fill="#00ff00" stroke="#00ff00" d="M310 40 346 37 344 37Z"/><path fill="#00ff00" stroke="#00ff00" d="M310 40 347 37 346 37Z"/><path fill="#00ff00" stroke="#00ff00" d="M310 40 348 38 347 37Z"/><path fill="#00ff00" stroke="#00ff00" d="M310 40 350 38 348 38Z"/><path fill="#00ff00" stroke="#00ff00" d="M310 40 351 39 350 38Z"/><path fill="#00ff00" stroke="#00ff00" d="M310 40 352 39 351 39Z"/><path fill="#00ff00" stroke="#00ff00" d="M310 40 353 40 352 39Z"/><path fill="#00ff00" stroke="#00ff00" d="M310 40 353 41 353 40Z"/><path fill="#00ff00" stroke="#00ff00" d="M310 40 354 42 354 41Z"/>
</svg>
<svg width="540" height="420" style="position:absolute;left:0;top:0;mix-blend-mode:screen" shape-rendering="crispEdges" stroke-width="0.8">
<path fill="url(#1)" d="M338 313 329 325 442 339 448 327Z"/><path fill="url(#3)" d="M329 325 318 337 433 350 442 339Z"/><path fill="url(#5)" d="M318 337 304 347 422 360 433 350Z"/><path fill="url(#7)" d="M304 347 288 357 409 369 422 360Z"/><path fill="url(#9)" d="M288 357 270 364 393 377 409 369Z"/><path fill="url(#b)" d="M270 364 251 370 376 382 393 377Z"/><path fill="url(#d)" d="M251 370 231 374 357 386 376 382Z"/><path fill="url(#f)" stroke="url(#f)" d="M231 374 210 375 338 387 357 386Z"/><path fill="url(#h)" stroke="url(#h)" d="M210 375 189 375 318 387 338 387Z"/><path fill="url(#j)" stroke="url(#j)" d="M306 384 284 381 169 372 189 375Z"/><path fill="url(#l)" d="M284 381 263 375 151 366 169 372Z"/><path fill="url(#n)" d="M263 375 243 368 134 359 151 366Z"/><path fill="url(#o)" d="M243 368 226 358 119 351 134 359Z"/><path fill="url(#p)" d="M226 358 210 347 106 340 119 351Z"/><path fill="url(#q)" d="M210 347 198 335 97 329 106 340Z"/><path fill="url(#r)" d="M198 335 188 322 89 317 97 329Z"/><path fill="url(#s)" d="M188 322 181 308 85 305 89 317Z"/><path fill="url(#t)" d="M181 308 176 295 83 292 85 305Z"/><path fill="url(#v)" d="M369 305 360 318 446 330 453 317Z"/><path fill="url(#x)" d="M360 318 348 331 437 343 446 330Z"/><path fill="url(#z)" d="M348 331 333 342 424 354 437 343Z"/><path fill="url(#11)" d="M333 342 316 353 409 364 424 354Z"/><path fill="url(#13)" d="M316 353 296 361 391 373 409 364Z"/><path fill="url(#15)" d="M296 361 275 368 372 379 391 373Z"/><path fill="url(#17)" d="M275 368 252 372 351 383 372 379Z"/><path fill="url(#19)" d="M252 372 229 374 328 385 351 383Z"/><path fill="url(#1b)" stroke="url(#1b)" d="M229 374 206 373 306 384 328 385Z"/><path fill="url(#1d)" stroke="url(#1d)" d="M289 377 265 374 183 369 206 373Z"/><path fill="url(#1f)" d="M265 374 241 368 162 364 183 369Z"/><path fill="url(#1g)" d="M241 368 220 359 143 356 162 364Z"/><path fill="url(#1h)" d="M220 359 201 349 126 346 143 356Z"/><path fill="url(#1i)" d="M201 349 185 337 112 335 126 346Z"/><path fill="url(#1j)" d="M185 337 172 324 101 322 112 335Z"/><path fill="url(#1k)" d="M172 324 161 310 93 309 101 322Z"/><path fill="url(#1l)" d="M161 310 154 296 88 296 93 309Z"/><path fill="url(#1n)" d="M365 321 349 333 419 345 433 333Z"/><path fill="url(#1p)" d="M349 333 331 344 402 356 419 345Z"/><path fill="url(#1r)" d="M331 344 310 354 383 365 402 356Z"/><path fill="url(#1t)" d="M310 354 286 361 361 372 383 365Z"/><path fill="url(#1v)" d="M286 361 262 365 338 376 361 372Z"/><path fill="url(#1x)" d="M262 365 236 367 314 378 338 376Z"/><path fill="url(#1z)" stroke="url(#1z)" d="M236 367 211 366 289 377 314 378Z"/><path fill="url(#21)" stroke="url(#21)" d="M309 368 283 367 211 366 236 367Z"/><path fill="url(#23)" stroke="url(#23)" d="M283 367 256 364 186 362 211 366Z"/><path fill="url(#25)" d="M256 364 232 357 163 356 186 362Z"/><path fill="url(#26)" d="M232 357 209 348 143 348 163 356Z"/><path fill="url(#27)" d="M209 348 189 337 124 337 143 348Z"/><path fill="url(#28)" d="M189 337 171 325 109 325 124 337Z"/><path fill="url(#29)" d="M171 325 157 311 97 312 109 325Z"/><path fill="url(#2a)" d="M157 311 147 296 89 298 97 312Z"/><path fill="url(#2c)" d="M337 332 315 341 384 354 405 345Z"/><path fill="url(#2e)" d="M315 341 290 349 361 362 384 354Z"/><path fill="url(#2g)" d="M290 349 264 354 336 366 361 362Z"/><path fill="url(#2i)" d="M264 354 237 355 309 368 336 366Z"/><path fill="url(#2k)" d="M237 355 209 355 283 367 309 368Z"/><path fill="url(#2m)" stroke="url(#2m)" d="M209 355 183 351 256 364 283 367Z"/><path fill="url(#2o)" d="M304 356 276 352 183 351 209 355Z"/><path fill="url(#2q)" d="M276 352 249 345 159 344 183 351Z"/><path fill="url(#2s)" d="M249 345 225 336 136 335 159 344Z"/><path fill="url(#2t)" d="M225 336 203 324 117 324 136 335Z"/><path fill="url(#2u)" d="M203 324 184 311 101 312 117 324Z"/><path fill="url(#2v)" d="M184 311 169 297 89 298 101 312Z"/><path fill="url(#2x)" d="M388 261 377 275 477 292 485 277Z"/><path fill="url(#2z)" d="M377 275 364 290 466 306 477 292Z"/><path fill="url(#31)" d="M364 290 346 303 451 320 466 306Z"/><path fill="url(#33)" d="M346 303 325 314 433 332 451 320Z"/><path fill="url(#35)" d="M325 314 302 324 411 342 433 332Z"/><path fill="url(#37)" d="M302 324 276 332 386 350 411 342Z"/><path fill="url(#39)" d="M276 332 248 336 360 355 386 350Z"/><path fill="url(#3b)" d="M248 336 220 338 332 357 360 355Z"/><path fill="url(#3d)" d="M220 338 191 337 304 356 332 357Z"/><path fill="url(#3f)" stroke="url(#3f)" d="M191 337 164 333 276 352 304 356Z"/><path fill="#0000fe" stroke="#0000fe" d="M339 339 309 338 191 337 220 338Z"/><path fill="url(#3k)" d="M309 338 280 334 164 333 191 337Z"/><path fill="url(#3n)" d="M280 334 253 327 139 327 164 333Z"/><path fill="url(#3q)" d="M253 327 227 318 116 318 139 327Z"/><path fill="url(#3s)" d="M227 318 205 307 96 307 116 318Z"/><path fill="url(#3u)" d="M205 307 186 294 80 294 96 307Z"/><path fill="url(#3w)" d="M186 294 170 279 67 280 80 294Z"/><path fill="url(#3y)" d="M170 279 158 264 59 266 67 280Z"/><path fill="url(#41)" d="M391 227 385 241 496 259 499 244Z"/><path fill="url(#44)" d="M385 241 374 256 488 274 496 259Z"/><path fill="url(#47)" d="M374 256 360 270 477 289 488 274Z"/><path fill="url(#4a)" d="M360 270 342 283 462 302 477 289Z"/><path fill="url(#4d)" d="M342 283 320 294 443 314 462 302Z"/><path fill="url(#4g)" d="M320 294 296 304 421 324 443 314Z"/><path fill="url(#4j)" d="M296 304 269 311 395 332 421 324Z"/><path fill="url(#4m)" d="M269 311 241 316 368 337 395 332Z"/><path fill="url(#4p)" d="M241 316 212 318 339 339 368 337Z"/><path fill="url(#4s)" d="M212 318 183 317 309 338 339 339Z"/><path fill="url(#4v)" stroke="url(#4v)" d="M183 317 155 313 280 334 309 338Z"/><path fill="url(#4y)" stroke="url(#4y)" d="M339 317 309 316 183 317 212 318Z"/><path fill="url(#51)" d="M309 316 280 312 155 313 183 317Z"/><path fill="url(#54)" d="M280 312 252 306 129 307 155 313Z"/><path fill="url(#57)" d="M252 306 226 296 106 298 129 307Z"/><path fill="url(#59)" d="M226 296 203 285 86 287 106 298Z"/><path fill="url(#5b)" d="M203 285 184 273 69 274 86 287Z"/><path fill="url(#5d)" d="M184 273 168 259 57 261 69 274Z"/><path fill="url(#5f)" d="M168 259 156 244 48 246 57 261Z"/><path fill="url(#5h)" d="M156 244 148 229 43 232 48 246Z"/><path fill="url(#5k)" d="M380 220 369 234 490 254 498 239Z"/><path fill="url(#5n)" d="M369 234 355 248 479 268 490 254Z"/><path fill="url(#5q)" d="M355 248 336 260 464 281 479 268Z"/><path fill="url(#5t)" d="M336 260 315 271 445 293 464 281Z"/><path fill="url(#5w)" d="M315 271 290 280 422 303 445 293Z"/><path fill="url(#5z)" d="M290 280 264 287 396 310 422 303Z"/><path fill="url(#62)" d="M264 287 235 292 369 315 396 310Z"/><path fill="url(#65)" d="M235 292 206 294 339 317 369 315Z"/><path fill="url(#68)" d="M206 294 177 293 309 316 339 317Z"/><path fill="url(#6b)" stroke="url(#6b)" d="M177 293 149 289 280 312 309 316Z"/><path fill="url(#6e)" stroke="url(#6e)" d="M354 293 324 292 177 293 206 294Z"/><path fill="url(#6h)" d="M324 292 295 288 149 289 177 293Z"/><path fill="url(#6k)" d="M295 288 267 282 123 283 149 289Z"/><path fill="url(#6n)" d="M267 282 241 273 100 275 123 283Z"/><path fill="url(#6p)" d="M241 273 218 262 80 264 100 275Z"/><path fill="url(#6r)" d="M218 262 198 250 64 252 80 264Z"/><path fill="url(#6t)" d="M198 250 182 237 51 239 64 252Z"/><path fill="url(#6v)" d="M182 237 170 223 43 225 51 239Z"/><path fill="url(#6x)" d="M170 223 161 209 38 211 43 225Z"/><path fill="url(#6z)" d="M161 209 156 195 37 197 38 211Z"/><path fill="url(#72)" d="M381 172 377 185 513 204 513 190Z"/><path fill="url(#75)" d="M377 185 370 198 510 218 513 204Z"/><path fill="url(#78)" d="M370 198 359 211 503 232 510 218Z"/><path fill="url(#7b)" d="M359 211 345 224 492 246 503 232Z"/><path fill="url(#7e)" d="M345 224 327 235 477 258 492 246Z"/><path fill="url(#7h)" d="M327 235 306 246 458 270 477 258Z"/><path fill="url(#7k)" d="M306 246 281 254 436 279 458 270Z"/><path fill="url(#7n)" d="M281 254 255 261 411 286 436 279Z"/><path fill="url(#7q)" d="M255 261 227 265 383 291 411 286Z"/><path fill="url(#7t)" d="M227 265 198 267 354 293 383 291Z"/><path fill="url(#7w)" d="M198 267 170 266 324 292 354 293Z"/><path fill="url(#7z)" stroke="url(#7z)" d="M170 266 143 262 295 288 324 292Z"/><path fill="url(#82)" stroke="url(#82)" d="M361 265 332 264 170 266 198 267Z"/><path fill="url(#85)" d="M332 264 304 260 143 262 170 266Z"/><path fill="url(#88)" d="M304 260 276 255 117 257 143 262Z"/><path fill="url(#8b)" d="M276 255 251 247 95 249 117 257Z"/><path fill="url(#8e)" d="M251 247 229 237 75 239 95 249Z"/><path fill="url(#8g)" d="M229 237 209 226 60 228 75 239Z"/><path fill="url(#8i)" d="M209 226 193 213 48 216 60 228Z"/><path fill="url(#8k)" d="M193 213 181 201 39 203 48 216Z"/><path fill="url(#8m)" d="M181 201 172 187 35 190 39 203Z"/><path fill="url(#8o)" d="M172 187 167 174 34 176 35 190Z"/><path fill="url(#8q)" d="M167 174 165 162 36 164 34 176Z"/><path fill="url(#8s)" d="M165 162 167 149 41 151 36 164Z"/><path fill="url(#8v)" d="M376 140 375 152 514 170 511 157Z"/><path fill="url(#8y)" d="M375 152 371 164 515 183 514 170Z"/><path fill="url(#91)" d="M371 164 364 176 512 196 515 183Z"/><path fill="url(#94)" d="M364 176 354 188 505 209 512 196Z"/><path fill="url(#97)" d="M354 188 340 199 494 222 505 209Z"/><path fill="url(#9a)" d="M340 199 322 209 480 233 494 222Z"/><path fill="url(#9d)" d="M322 209 302 219 462 243 480 233Z"/><path fill="url(#9g)" d="M302 219 279 227 440 252 462 243Z"/><path fill="url(#9j)" d="M279 227 253 232 416 259 440 252Z"/><path fill="url(#9m)" d="M253 232 226 236 389 263 416 259Z"/><path fill="url(#9p)" d="M226 236 199 238 361 265 389 263Z"/><path fill="url(#9s)" d="M199 238 172 237 332 264 361 265Z"/><path fill="url(#9v)" stroke="url(#9v)" d="M172 237 146 234 304 260 332 264Z"/><path fill="#000" d="M353 100 362 109 486 123 473 114Z"/><path fill="#000" d="M362 109 369 118 496 134 486 123Z"/><path fill="#000" d="M369 118 374 129 505 145 496 134Z"/><path fill="#000" d="M374 129 376 140 511 157 505 145Z"/><path fill="url(#a6)" stroke="url(#a6)" d="M344 233 317 232 172 237 199 238Z"/><path fill="url(#a9)" d="M317 232 290 229 146 234 172 237Z"/><path fill="url(#ac)" d="M290 229 265 224 122 229 146 234Z"/><path fill="url(#af)" d="M265 224 241 217 100 222 122 229Z"/><path fill="url(#ah)" d="M241 217 220 208 81 213 100 222Z"/><path fill="url(#aj)" d="M220 208 202 198 66 203 81 213Z"/><path fill="url(#al)" d="M202 198 187 188 54 192 66 203Z"/><path fill="url(#an)" d="M187 188 176 176 46 180 54 192Z"/><path fill="url(#ap)" d="M176 176 168 164 42 168 46 180Z"/><path fill="url(#ar)" d="M168 164 163 153 40 156 42 168Z"/><path fill="url(#at)" d="M163 153 161 141 42 144 40 156Z"/><path fill="url(#av)" d="M161 141 162 130 47 133 42 144Z"/><path fill="url(#ax)" d="M162 130 166 119 54 122 47 133Z"/><path fill="url(#az)" d="M166 119 173 109 64 112 54 122Z"/><path fill="url(#b2)" d="M406 123 406 134 493 149 490 137Z"/><path fill="url(#b5)" d="M406 134 403 145 493 160 493 149Z"/><path fill="url(#b8)" d="M403 145 397 155 489 172 493 160Z"/><path fill="url(#bb)" d="M397 155 388 166 482 184 489 172Z"/><path fill="url(#be)" d="M388 166 376 176 472 195 482 184Z"/><path fill="url(#bh)" d="M376 176 360 186 457 205 472 195Z"/><path fill="url(#bk)" d="M360 186 342 194 440 214 457 205Z"/><path fill="url(#bn)" d="M342 194 321 201 419 222 440 214Z"/><path fill="url(#bq)" d="M321 201 297 206 396 228 419 222Z"/><path fill="url(#bt)" d="M297 206 273 209 371 231 396 228Z"/><path fill="url(#bw)" d="M273 209 247 211 344 233 371 231Z"/><path fill="url(#bz)" d="M247 211 222 210 317 232 344 233Z"/><path fill="url(#c2)" stroke="url(#c2)" d="M222 210 197 207 290 229 317 232Z"/><path fill="url(#c5)" stroke="url(#c5)" d="M197 207 174 203 265 224 290 229Z"/><path fill="#000" d="M390 95 398 104 477 116 468 106Z"/><path fill="#000" d="M398 104 403 113 485 126 477 116Z"/><path fill="#000" d="M403 113 406 123 490 137 485 126Z"/><path fill="url(#ce)" d="M348 162 333 171 360 186 376 176Z"/><path fill="url(#ch)" d="M333 171 314 178 342 194 360 186Z"/><path fill="url(#ck)" d="M314 178 294 185 321 201 342 194Z"/><path fill="url(#cn)" d="M294 185 272 190 297 206 321 201Z"/><path fill="url(#cq)" d="M272 190 248 193 273 209 297 206Z"/><path fill="url(#ct)" d="M248 193 224 194 247 211 273 209Z"/><path fill="url(#cv)" d="M224 194 199 193 222 210 247 211Z"/><path fill="url(#cx)" d="M199 193 176 191 197 207 222 210Z"/><path fill="url(#cz)" d="M176 191 154 187 174 203 197 207Z"/><path fill="url(#d1)" d="M154 187 134 181 153 196 174 203Z"/><path fill="url(#d3)" d="M134 181 117 173 134 189 153 196Z"/><path fill="url(#d5)" d="M117 173 103 165 119 180 134 189Z"/><path fill="url(#d7)" stroke="url(#d7)" d="M103 165 91 156 106 170 119 180Z"/><path fill="url(#da)" stroke="url(#da)" d="M334 186 311 185 199 193 224 194Z"/><path fill="url(#dd)" d="M311 185 288 183 176 191 199 193Z"/><path fill="url(#dg)" d="M288 183 266 179 154 187 176 191Z"/><path fill="url(#dj)" d="M266 179 245 173 134 181 154 187Z"/><path fill="url(#dl)" d="M245 173 227 166 117 173 134 181Z"/><path fill="url(#dn)" d="M227 166 211 158 103 165 117 173Z"/><path fill="url(#dp)" d="M211 158 197 150 91 156 103 165Z"/><path fill="url(#dr)" d="M197 150 187 141 83 146 91 156Z"/><path fill="url(#dt)" d="M187 141 180 131 78 136 83 146Z"/><path fill="url(#dv)" d="M180 131 175 121 76 126 78 136Z"/><path fill="url(#dy)" d="M337 94 335 102 467 118 466 109Z"/><path fill="url(#e1)" d="M335 102 331 111 466 128 467 118Z"/><path fill="url(#e4)" d="M331 111 325 119 463 137 466 128Z"/><path fill="url(#e7)" d="M325 119 315 128 456 147 463 137Z"/><path fill="url(#ea)" d="M315 128 303 135 446 156 456 147Z"/><path fill="url(#ed)" d="M303 135 289 142 433 164 446 156Z"/><path fill="url(#eg)" d="M289 142 272 149 418 171 433 164Z"/><path fill="url(#ej)" d="M272 149 254 154 399 177 418 171Z"/><path fill="url(#em)" d="M254 154 233 158 379 181 399 177Z"/><path fill="url(#ep)" d="M233 158 212 160 357 184 379 181Z"/><path fill="url(#es)" d="M212 160 191 162 334 186 357 184Z"/><path fill="url(#ev)" stroke="url(#ev)" d="M191 162 170 161 311 185 334 186Z"/><path fill="url(#ey)" stroke="url(#ey)" d="M170 161 149 159 288 183 311 185Z"/><path fill="#000" d="M321 64 328 71 447 83 437 76Z"/><path fill="#000" d="M328 71 333 78 455 91 447 83Z"/><path fill="#000" d="M333 78 336 86 462 100 455 91Z"/><path fill="#000" d="M336 86 337 94 466 109 462 100Z"/><path fill="url(#f9)" stroke="url(#f9)" d="M324 155 304 154 170 161 191 162Z"/><path fill="url(#fc)" d="M304 154 284 152 149 159 170 161Z"/><path fill="url(#ff)" d="M284 152 265 149 130 155 149 159Z"/><path fill="url(#fi)" d="M265 149 247 145 113 151 130 155Z"/><path fill="url(#fk)" d="M247 145 231 139 98 145 113 151Z"/><path fill="url(#fm)" d="M231 139 217 133 85 138 98 145Z"/><path fill="url(#fo)" d="M217 133 206 126 76 130 85 138Z"/><path fill="url(#fq)" d="M206 126 196 118 69 122 76 130Z"/><path fill="url(#fs)" d="M196 118 190 110 65 114 69 122Z"/><path fill="url(#fu)" d="M190 110 185 102 63 105 65 114Z"/><path fill="url(#fw)" d="M185 102 184 94 64 97 63 105Z"/><path fill="url(#fy)" d="M184 94 184 86 67 89 64 97Z"/><path fill="url(#g0)" d="M184 86 187 79 73 81 67 89Z"/><path fill="url(#g2)" d="M187 79 191 72 80 73 73 81Z"/><path fill="#000" d="M191 72 198 65 89 67 80 73Z"/><path fill="#000" d="M198 65 206 59 100 60 89 67Z"/><path fill="url(#g7)" d="M414 83 414 90 444 99 443 91Z"/><path fill="url(#ga)" d="M414 90 412 97 442 107 444 99Z"/><path fill="url(#gd)" d="M412 97 408 104 439 115 442 107Z"/><path fill="url(#gg)" d="M408 104 402 111 432 123 439 115Z"/><path fill="url(#gj)" d="M402 111 393 117 423 130 432 123Z"/><path fill="url(#gm)" d="M393 117 382 123 411 137 423 130Z"/><path fill="url(#gp)" d="M382 123 368 128 398 143 411 137Z"/><path fill="url(#gs)" d="M368 128 353 133 381 148 398 143Z"/><path fill="url(#gv)" d="M353 133 337 136 364 151 381 148Z"/><path fill="url(#gy)" d="M337 136 319 138 344 154 364 151Z"/><path fill="url(#h1)" d="M319 138 301 139 324 155 344 154Z"/><path fill="url(#h4)" d="M301 139 282 138 304 154 324 155Z"/><path fill="url(#h7)" d="M282 138 264 137 284 152 304 154Z"/><path fill="url(#ha)" d="M264 137 247 134 265 149 284 152Z"/><path fill="url(#hd)" d="M247 134 231 130 247 145 265 149Z"/><path fill="url(#hf)" d="M231 130 216 125 231 139 247 145Z"/><path fill="url(#hh)" d="M216 125 204 119 217 133 231 139Z"/><path fill="url(#hj)" d="M204 119 193 113 206 126 217 133Z"/><path fill="#000" d="M407 69 412 76 440 84 435 76Z"/><path fill="#000" d="M412 76 414 83 443 91 440 84Z"/><path fill="url(#hq)" d="M306 77 302 83 412 97 414 90Z"/><path fill="url(#ht)" d="M302 83 296 89 408 104 412 97Z"/><path fill="url(#hw)" d="M296 89 288 95 402 111 408 104Z"/><path fill="url(#hz)" d="M288 95 278 101 393 117 402 111Z"/><path fill="url(#i2)" d="M278 101 267 106 382 123 393 117Z"/><path fill="url(#i5)" d="M267 106 254 110 368 128 382 123Z"/><path fill="url(#i8)" d="M254 110 239 114 353 133 368 128Z"/><path fill="url(#ib)" d="M239 114 223 117 337 136 353 133Z"/><path fill="url(#ie)" d="M223 117 207 118 319 138 337 136Z"/><path fill="url(#ih)" d="M207 118 191 119 301 139 319 138Z"/><path fill="url(#ik)" stroke="url(#ik)" d="M191 119 174 119 282 138 301 139Z"/><path fill="url(#in)" stroke="url(#in)" d="M174 119 159 117 264 137 282 138Z"/><path fill="url(#iq)" stroke="url(#iq)" d="M159 117 144 115 247 134 264 137Z"/><path fill="url(#it)" stroke="url(#it)" d="M287 107 273 109 207 118 223 117Z"/><path fill="url(#iw)" stroke="url(#iw)" d="M273 109 258 110 191 119 207 118Z"/><path fill="url(#iy)" stroke="url(#iy)" d="M258 110 243 109 174 119 191 119Z"/><path fill="url(#j0)" d="M243 109 229 108 159 117 174 119Z"/><path fill="url(#j2)" d="M229 108 215 106 144 115 159 117Z"/><path fill="url(#j4)" d="M215 106 202 103 130 112 144 115Z"/><path fill="url(#j6)" d="M202 103 191 99 119 107 130 112Z"/><path fill="url(#j8)" d="M191 99 181 95 109 103 119 107Z"/><path fill="url(#ja)" d="M181 95 173 90 101 97 109 103Z"/><path fill="url(#jc)" d="M173 90 166 85 95 91 101 97Z"/><path fill="url(#je)" d="M166 85 162 80 91 85 95 91Z"/><path fill="url(#jg)" d="M162 80 159 74 89 79 91 85Z"/><path fill="url(#ji)" d="M159 74 158 69 90 73 89 79Z"/><path fill="url(#jk)" d="M158 69 159 63 92 67 90 73Z"/><path fill="url(#jm)" d="M159 63 161 58 96 61 92 67Z"/><path fill="url(#jo)" d="M161 58 165 53 101 55 96 61Z"/><path fill="#000" d="M165 53 171 48 108 50 101 55Z"/><path fill="#000" d="M171 48 177 44 116 45 108 50Z"/><path fill="#000" d="M177 44 185 40 126 41 116 45Z"/><path fill="#000" d="M185 40 194 36 136 37 126 41Z"/><path fill="#000" stroke="#000" d="M194 36 203 33 147 34 136 37Z"/><path fill="url(#jw)" stroke="url(#jw)" d="M361 103 348 102 243 109 258 110Z"/><path fill="url(#jz)" stroke="url(#jz)" d="M348 102 334 101 229 108 243 109Z"/><path fill="url(#k2)" stroke="url(#k2)" d="M334 101 322 99 215 106 229 108Z"/><path fill="url(#k5)" d="M322 99 310 97 202 103 215 106Z"/><path fill="url(#k8)" d="M310 97 298 94 191 99 202 103Z"/><path fill="url(#kb)" d="M298 94 288 90 181 95 191 99Z"/><path fill="url(#ke)" d="M288 90 280 86 173 90 181 95Z"/><path fill="url(#kh)" d="M280 86 273 81 166 85 173 90Z"/><path fill="url(#kk)" d="M273 81 267 76 162 80 166 85Z"/><path fill="url(#kn)" d="M267 76 263 71 159 74 162 80Z"/><path fill="url(#kp)" d="M263 71 260 66 158 69 159 74Z"/><path fill="url(#ks)" d="M369 57 369 61 439 70 438 65Z"/><path fill="url(#kv)" d="M369 61 367 65 438 75 439 70Z"/><path fill="url(#ky)" d="M367 65 363 69 435 79 438 75Z"/><path fill="url(#l1)" d="M363 69 359 73 431 84 435 79Z"/><path fill="url(#l4)" d="M359 73 353 76 425 88 431 84Z"/><path fill="url(#l7)" d="M353 76 346 79 417 92 425 88Z"/><path fill="url(#la)" d="M346 79 337 82 408 96 417 92Z"/><path fill="url(#ld)" d="M337 82 328 85 398 99 408 96Z"/><path fill="url(#lg)" d="M328 85 318 86 386 101 398 99Z"/><path fill="url(#lj)" d="M318 86 307 87 374 102 386 101Z"/><path fill="url(#lm)" d="M307 87 296 88 361 103 374 102Z"/><path fill="url(#lp)" stroke="url(#lp)" d="M296 88 285 88 348 102 361 103Z"/><path fill="url(#ls)" stroke="url(#ls)" d="M285 88 274 87 334 101 348 102Z"/><path fill="url(#lv)" stroke="url(#lv)" d="M274 87 264 85 322 99 334 101Z"/><path fill="url(#ly)" stroke="url(#ly)" d="M264 85 254 83 310 97 322 99Z"/><path fill="#000" stroke="#000" d="M307 26 315 27 369 30 359 28Z"/><path fill="#000" stroke="#000" d="M315 27 324 28 379 31 369 30Z"/><path fill="#000" stroke="#000" d="M324 28 332 30 389 33 379 31Z"/><path fill="#000" stroke="#000" d="M332 30 340 32 398 36 389 33Z"/><path fill="#000" stroke="#000" d="M340 32 347 35 407 39 398 36Z"/><path fill="#000" stroke="#000" d="M347 35 353 38 415 43 407 39Z"/><path fill="#000" stroke="#000" d="M353 38 358 41 422 46 415 43Z"/><path fill="#000" d="M358 41 363 45 428 51 422 46Z"/><path fill="#000" d="M363 45 366 48 433 55 428 51Z"/><path fill="#000" d="M366 48 368 52 436 60 433 55Z"/><path fill="#000" d="M368 52 369 57 438 65 436 60Z"/><path fill="url(#mn)" d="M264 48 263 51 369 61 369 57Z"/><path fill="url(#mq)" d="M263 51 260 54 367 65 369 61Z"/><path fill="url(#mt)" d="M260 54 256 57 363 69 367 65Z"/><path fill="url(#mw)" d="M256 57 251 61 359 73 363 69Z"/><path fill="url(#mz)" d="M251 61 245 63 353 76 359 73Z"/><path fill="url(#n2)" d="M245 63 239 66 346 79 353 76Z"/><path fill="url(#n5)" d="M239 66 231 68 337 82 346 79Z"/><path fill="url(#n8)" d="M231 68 223 70 328 85 337 82Z"/><path fill="url(#nb)" stroke="url(#nb)" d="M223 70 214 71 318 86 328 85Z"/><path fill="url(#ne)" stroke="url(#ne)" d="M214 71 205 72 307 87 318 86Z"/><path fill="url(#nh)" stroke="url(#nh)" d="M205 72 196 72 296 88 307 87Z"/><path fill="url(#nk)" stroke="url(#nk)" d="M196 72 187 72 285 88 296 88Z"/><path fill="url(#nn)" stroke="url(#nn)" d="M187 72 178 72 274 87 285 88Z"/><path fill="#000" stroke="#000" d="M220 22 228 23 315 27 307 26Z"/><path fill="#000" stroke="#000" d="M228 23 234 24 324 28 315 27Z"/><path fill="#000" stroke="#000" d="M234 24 241 26 332 30 324 28Z"/><path fill="#000" stroke="#000" d="M241 26 246 28 340 32 332 30Z"/><path fill="#000" stroke="#000" d="M246 28 252 30 347 35 340 32Z"/><path fill="#000" stroke="#000" d="M252 30 256 32 353 38 347 35Z"/><path fill="#000" stroke="#000" d="M256 32 260 35 358 41 353 38Z"/><path fill="#000" d="M260 35 262 38 363 45 358 41Z"/><path fill="#000" stroke="#000" d="M262 38 264 41 366 48 363 45Z"/><path fill="#000" d="M264 41 265 44 368 52 366 48Z"/><path fill="#000" d="M265 44 264 48 369 57 368 52Z"/><path fill="url(#ob)" stroke="url(#ob)" d="M253 59 247 61 231 68 239 66Z"/><path fill="url(#od)" stroke="url(#od)" d="M247 61 240 62 223 70 231 68Z"/><path fill="url(#of)" stroke="url(#of)" d="M240 62 233 63 214 71 223 70Z"/><path fill="url(#oh)" stroke="url(#oh)" d="M233 63 226 64 205 72 214 71Z"/><path fill="url(#oj)" stroke="url(#oj)" d="M226 64 219 64 196 72 205 72Z"/><path fill="url(#ol)" stroke="url(#ol)" d="M219 64 212 64 187 72 196 72Z"/><path fill="url(#on)" stroke="url(#on)" d="M212 64 205 63 178 72 187 72Z"/><path fill="url(#op)" d="M205 63 198 62 170 70 178 72Z"/><path fill="url(#or)" stroke="url(#or)" d="M198 62 192 61 162 69 170 70Z"/><path fill="url(#ot)" stroke="url(#ot)" d="M192 61 186 60 156 67 162 69Z"/><path fill="url(#ov)" d="M186 60 181 58 150 64 156 67Z"/><path fill="url(#ox)" d="M181 58 177 55 145 62 150 64Z"/><path fill="url(#oz)" d="M177 55 174 53 141 59 145 62Z"/><path fill="url(#p1)" d="M174 53 172 51 138 55 141 59Z"/><path fill="url(#p3)" d="M172 51 170 48 137 52 138 55Z"/><path fill="url(#p5)" stroke="url(#p5)" d="M170 48 170 45 137 49 137 52Z"/><path fill="url(#p7)" stroke="url(#p7)" d="M170 45 170 43 137 45 137 49Z"/><path fill="url(#p9)" stroke="url(#p9)" d="M170 43 171 40 139 42 137 45Z"/><path fill="url(#pb)" stroke="url(#pb)" d="M171 40 173 38 142 39 139 42Z"/><path fill="#000" stroke="#000" d="M173 38 176 35 146 36 142 39Z"/><path fill="#000" stroke="#000" d="M176 35 179 33 150 33 146 36Z"/><path fill="#000" stroke="#000" d="M179 33 184 31 156 31 150 33Z"/><path fill="#000" stroke="#000" d="M184 31 188 29 162 28 156 31Z"/><path fill="#000" stroke="#000" d="M188 29 193 27 168 26 162 28Z"/><path fill="#000" stroke="#000" d="M193 27 199 26 175 25 168 26Z"/><path fill="#000" stroke="#000" d="M199 26 205 25 182 24 175 25Z"/><path fill="#000" stroke="#000" d="M205 25 211 24 190 23 182 24Z"/><path fill="#000" stroke="#000" d="M211 24 217 24 198 22 190 23Z"/><path fill="#000" stroke="#000" d="M217 24 224 23 205 22 198 22Z"/><path fill="#000" stroke="#000" d="M224 23 230 23 213 22 205 22Z"/><path fill="#000000" d="M302 43 300 47 298 49 295 51 288 54 284 55 274 57 247 61 226 64 212 64 198 62 186 60 181 58 174 53 172 51 170 48 170 43 171 40 176 35 179 33 188 29 193 27 211 24 224 23 230 23 272 27 281 28 285 29 293 32 298 35 300 37 302 41Z"/><path fill="url(#pp)" stroke="url(#pp)" d="M274 57 269 57 226 64 233 63Z"/><path fill="url(#ps)" stroke="url(#ps)" d="M269 57 263 57 219 64 226 64Z"/><path fill="url(#pu)" stroke="url(#pu)" d="M263 57 258 57 212 64 219 64Z"/><path fill="url(#pw)" stroke="url(#pw)" d="M258 57 253 57 205 63 212 64Z"/><path fill="url(#py)" stroke="url(#py)" d="M253 57 248 56 198 62 205 63Z"/><path fill="url(#q0)" stroke="url(#q0)" d="M248 56 243 55 192 61 198 62Z"/><path fill="url(#q2)" stroke="url(#q2)" d="M243 55 238 54 186 60 192 61Z"/><path fill="url(#q4)" stroke="url(#q4)" d="M238 54 235 53 181 58 186 60Z"/><path fill="url(#q6)" stroke="url(#q6)" d="M235 53 231 51 177 55 181 58Z"/><path fill="url(#q8)" stroke="url(#q8)" d="M231 51 228 49 174 53 177 55Z"/><path fill="url(#qa)" stroke="url(#qa)" d="M228 49 226 48 172 51 174 53Z"/><path fill="url(#qc)" stroke="url(#qc)" d="M226 48 225 46 170 48 172 51Z"/><path fill="url(#qe)" stroke="url(#qe)" d="M225 46 224 44 170 45 170 48Z"/><path fill="url(#qg)" stroke="url(#qg)" d="M224 44 224 42 170 43 170 45Z"/><path fill="url(#qi)" stroke="url(#qi)" d="M224 42 224 40 171 40 170 43Z"/><path fill="url(#qk)" stroke="url(#qk)" d="M224 40 225 38 173 38 171 40Z"/><path fill="#000" stroke="#000" d="M225 38 227 36 176 35 173 38Z"/><path fill="#000" stroke="#000" d="M227 36 230 34 179 33 176 35Z"/><path fill="#000" stroke="#000" d="M230 34 233 32 184 31 179 33Z"/><path fill="#000" stroke="#000" d="M233 32 236 31 188 29 184 31Z"/><path fill="#000" stroke="#000" d="M236 31 240 30 193 27 188 29Z"/><path fill="#000" stroke="#000" d="M240 30 244 29 199 26 193 27Z"/><path fill="#000" stroke="#000" d="M244 29 248 28 205 25 199 26Z"/><path fill="#000" stroke="#000" d="M248 28 253 27 211 24 205 25Z"/><path fill="#000" stroke="#000" d="M253 27 258 27 217 24 211 24Z"/><path fill="#000" stroke="#000" d="M258 27 262 27 224 23 217 24Z"/><path fill="#000" stroke="#000" d="M262 27 267 27 230 23 224 23Z"/><path fill="#000000" d="M335 44 333 46 329 49 321 51 314 52 274 57 253 57 238 54 235 53 231 51 226 48 224 44 224 40 225 38 227 36 233 32 236 31 248 28 253 27 272 27 313 31 320 32 323 33 328 35 332 37 333 38 335 41Z"/><path fill="url(#qy)" stroke="url(#qy)" d="M314 52 311 52 263 57 269 57Z"/><path fill="url(#r1)" stroke="url(#r1)" d="M311 52 307 52 258 57 263 57Z"/><path fill="url(#r4)" stroke="url(#r4)" d="M307 52 303 52 253 57 258 57Z"/><path fill="url(#r7)" stroke="url(#r7)" d="M303 52 300 51 248 56 253 57Z"/><path fill="url(#ra)" stroke="url(#ra)" d="M300 51 297 51 243 55 248 56Z"/><path fill="url(#rd)" stroke="url(#rd)" d="M297 51 294 50 238 54 243 55Z"/><path fill="url(#rg)" stroke="url(#rg)" d="M294 50 291 49 235 53 238 54Z"/><path fill="url(#rj)" stroke="url(#rj)" d="M291 49 288 48 231 51 235 53Z"/><path fill="url(#rm)" stroke="url(#rm)" d="M288 48 286 47 228 49 231 51Z"/><path fill="url(#rp)" stroke="url(#rp)" d="M286 47 285 45 226 48 228 49Z"/><path fill="url(#rs)" stroke="url(#rs)" d="M285 45 283 44 225 46 226 48Z"/><path fill="url(#rv)" stroke="url(#rv)" d="M283 44 283 43 224 44 225 46Z"/><path fill="url(#ry)" stroke="url(#ry)" d="M283 43 282 41 224 42 224 44Z"/><path fill="url(#s1)" stroke="url(#s1)" d="M282 41 282 40 224 40 224 42Z"/><path fill="url(#s4)" stroke="url(#s4)" d="M282 40 283 39 225 38 224 40Z"/><path fill="#000" stroke="#000" d="M283 39 284 37 227 36 225 38Z"/><path fill="#000" stroke="#000" d="M284 37 285 36 230 34 227 36Z"/><path fill="#000" stroke="#000" d="M285 36 287 35 233 32 230 34Z"/><path fill="#000" stroke="#000" d="M287 35 289 34 236 31 233 32Z"/><path fill="#000" stroke="#000" d="M289 34 291 33 240 30 236 31Z"/><path fill="#000" stroke="#000" d="M291 33 294 33 244 29 240 30Z"/><path fill="#000" stroke="#000" d="M294 33 297 32 248 28 244 29Z"/><path fill="#000" stroke="#000" d="M297 32 300 32 253 27 248 28Z"/><path fill="#000" stroke="#000" d="M300 32 303 31 258 27 253 27Z"/><path fill="#000" stroke="#000" d="M303 31 307 31 262 27 258 27Z"/><path fill="#000" stroke="#000" d="M307 31 310 31 267 27 262 27Z"/><path fill="#000" stroke="#000" d="M310 31 313 31 272 27 267 27Z"/><path fill="#000000" d="M354 43 353 44 351 45 348 46 344 47 321 51 314 52 303 52 297 51 288 48 286 47 283 44 282 41 282 40 284 37 285 36 291 33 303 31 313 31 320 32 342 36 347 37 350 38 352 39 354 41Z"/><path fill="url(#sv)" stroke="url(#sv)" d="M347 46 345 46 318 51 321 51Z"/><path fill="url(#sy)" stroke="url(#sy)" d="M344 47 342 47 311 52 314 52Z"/><path fill="url(#t1)" stroke="url(#t1)" d="M342 47 340 47 307 52 311 52Z"/><path fill="url(#t4)" stroke="url(#t4)" d="M340 47 338 46 303 52 307 52Z"/><path fill="url(#t7)" stroke="url(#t7)" d="M338 46 337 46 300 51 303 52Z"/><path fill="url(#ta)" stroke="url(#ta)" d="M337 46 335 46 297 51 300 51Z"/><path fill="url(#td)" stroke="url(#td)" d="M335 46 333 46 294 50 297 51Z"/><path fill="url(#tg)" stroke="url(#tg)" d="M333 46 332 45 291 49 294 50Z"/><path fill="url(#tj)" stroke="url(#tj)" d="M332 45 331 45 288 48 291 49Z"/><path fill="url(#tm)" stroke="url(#tm)" d="M331 45 329 44 286 47 288 48Z"/><path fill="url(#tp)" stroke="url(#tp)" d="M329 44 329 43 285 45 286 47Z"/><path fill="url(#ts)" stroke="url(#ts)" d="M329 43 328 43 283 44 285 45Z"/><path fill="url(#tv)" stroke="url(#tv)" d="M328 43 327 42 283 43 283 44Z"/><path fill="url(#ty)" stroke="url(#ty)" d="M327 42 327 41 282 41 283 43Z"/><path fill="url(#u1)" stroke="url(#u1)" d="M327 41 282 40 282 41Z"/><path fill="url(#u4)" stroke="url(#u4)" d="M327 41 327 40 283 39 282 40Z"/><path fill="#000" stroke="#000" d="M327 40 328 39 284 37 283 39Z"/><path fill="#000" stroke="#000" d="M328 39 285 36 284 37Z"/><path fill="#000" stroke="#000" d="M328 39 329 38 287 35 285 36Z"/><path fill="#000" stroke="#000" d="M329 38 330 38 289 34 287 35Z"/><path fill="#000" stroke="#000" d="M330 38 331 37 291 33 289 34Z"/><path fill="#000" stroke="#000" d="M331 37 332 37 294 33 291 33Z"/><path fill="#000" stroke="#000" d="M332 37 334 37 297 32 294 33Z"/><path fill="#000" stroke="#000" d="M334 37 335 36 300 32 297 32Z"/><path fill="#000" stroke="#000" d="M335 36 337 36 303 31 300 32Z"/><path fill="#000" stroke="#000" d="M337 36 339 36 307 31 303 31Z"/><path fill="#000" stroke="#000" d="M339 36 341 36 310 31 307 31Z"/><path fill="#000" stroke="#000" d="M341 36 342 36 313 31 310 31Z"/><path fill="#000000" d="M354 43 353 44 351 45 348 46 344 47 340 47 333 46 310 40 335 36 342 36 347 37 350 38 352 39 354 41Z"/><path fill="url(#uu)" stroke="url(#uu)" d="M310 40 354 43 354 42Z"/><path fill="url(#uw)" stroke="url(#uw)" d="M310 40 353 43 354 43Z"/><path fill="url(#uy)" stroke="url(#uy)" d="M310 40 353 44 353 43Z"/><path fill="url(#v0)" stroke="url(#v0)" d="M310 40 352 44 353 44Z"/><path fill="url(#v2)" stroke="url(#v2)" d="M310 40 351 45 352 44Z"/><path fill="url(#v4)" stroke="url(#v4)" d="M310 40 350 45 351 45Z"/><path fill="url(#v6)" stroke="url(#v6)" d="M310 40 348 46 350 45Z"/><path fill="url(#v8)" stroke="url(#v8)" d="M310 40 347 46 348 46Z"/><path fill="url(#va)" stroke="url(#va)" d="M310 40 345 46 347 46Z"/><path fill="url(#vc)" stroke="url(#vc)" d="M310 40 344 47 345 46Z"/><path fill="url(#ve)" stroke="url(#ve)" d="M310 40 342 47 344 47Z"/><path fill="url(#vg)" stroke="url(#vg)" d="M310 40 340 47 342 47Z"/><path fill="url(#vi)" stroke="url(#vi)" d="M310 40 335 46 337 46Z"/><path fill="#000" stroke="#000" d="M310 40 339 36 337 36Z"/><path fill="#000" stroke="#000" d="M310 40 341 36 339 36Z"/><path fill="#000" stroke="#000" d="M310 40 342 36 341 36Z"/><path fill="#000" stroke="#000" d="M310 40 344 37 342 36Z"/><path fill="#000" stroke="#000" d="M310 40 346 37 344 37Z"/><path fill="#000" stroke="#000" d="M310 40 347 37 346 37Z"/><path fill="#000" stroke="#000" d="M310 40 348 38 347 37Z"/><path fill="#000" stroke="#000" d="M310 40 350 38 348 38Z"/><path fill="#000" stroke="#000" d="M310 40 351 39 350 38Z"/><path fill="#000" stroke="#000" d="M310 40 352 39 351 39Z"/><path fill="#000" stroke="#000" d="M310 40 353 40 352 39Z"/><path fill="#000" stroke="#000" d="M310 40 353 41 353 40Z"/><path fill="#000" stroke="#000" d="M310 40 354 42 354 41Z"/>
</svg>
</div>
<!-- /BLOB -->
</body></html>
